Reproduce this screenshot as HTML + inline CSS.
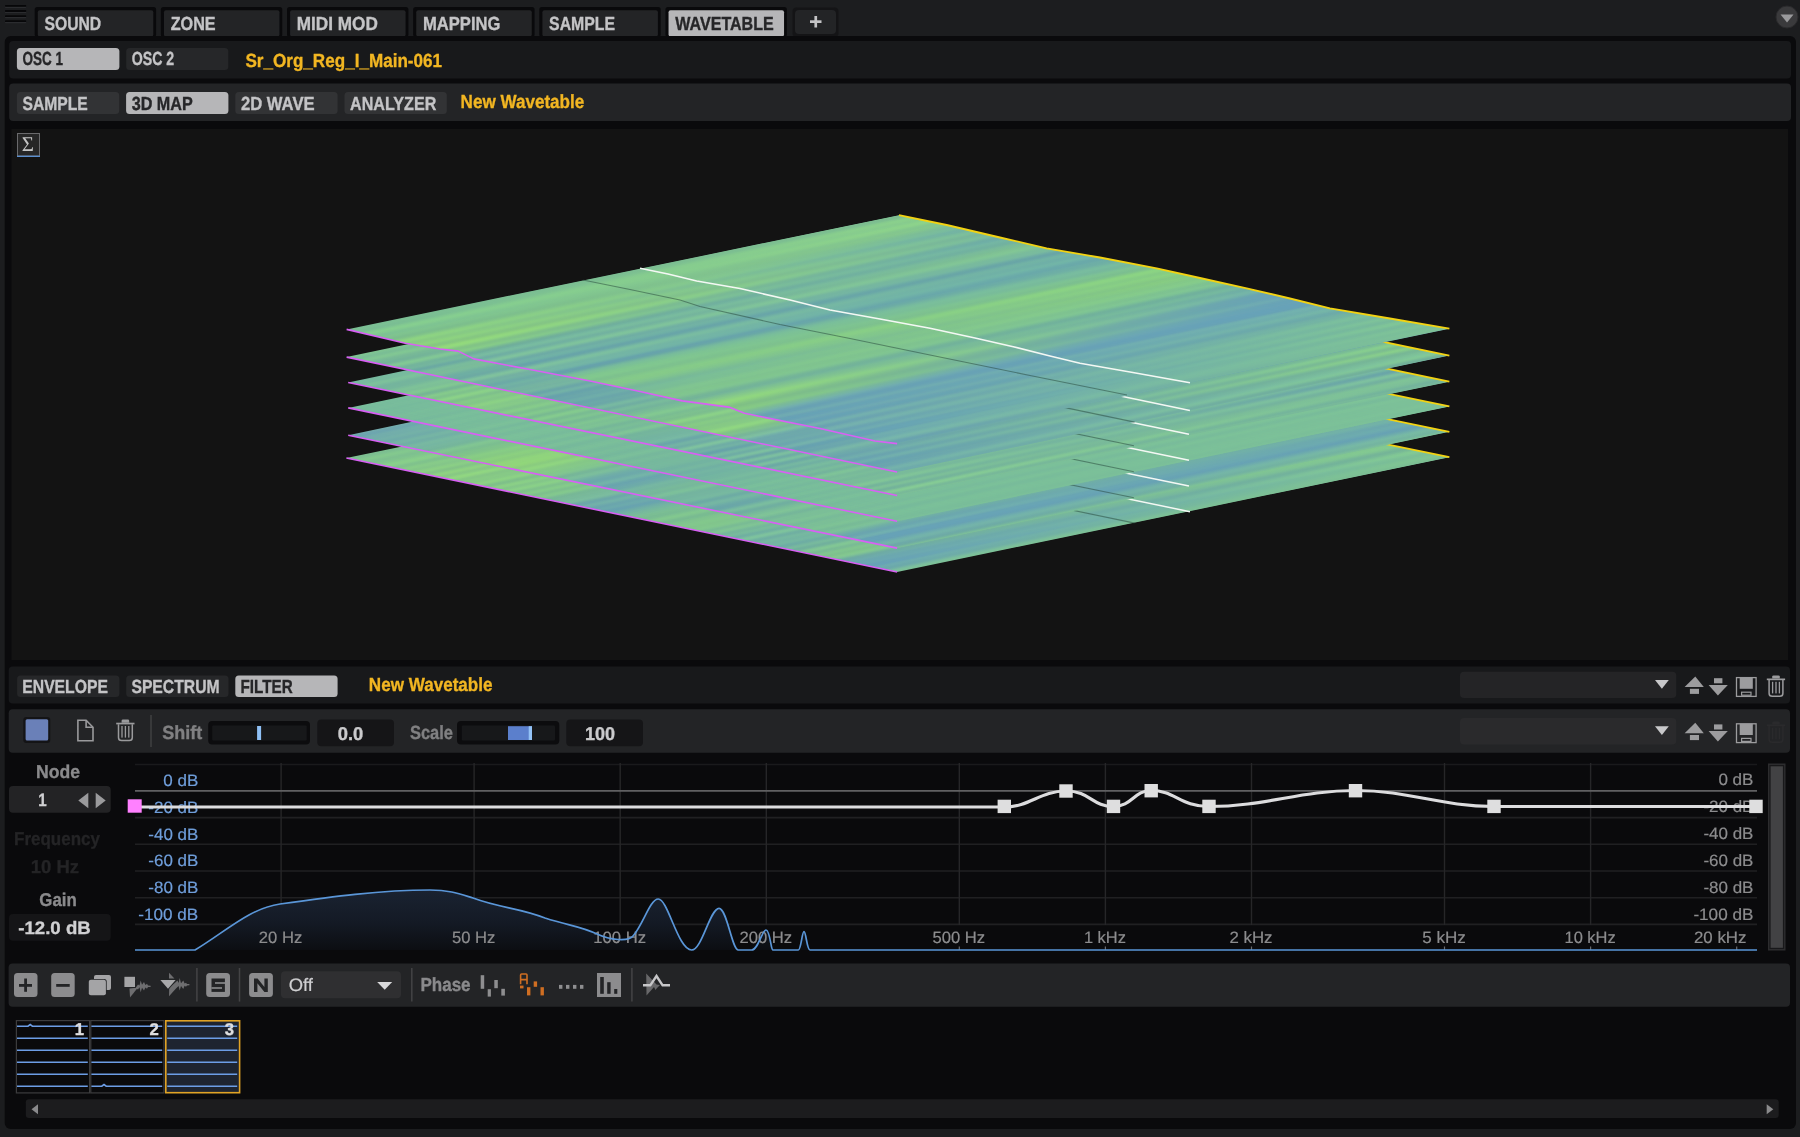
<!DOCTYPE html>
<html><head><meta charset="utf-8"><title>Wavetable</title>
<style>
html,body{margin:0;padding:0;background:#1c1d1f;overflow:hidden}
svg{display:block;font-family:"Liberation Sans",sans-serif;will-change:transform;text-rendering:geometricPrecision}
</style></head>
<body>
<svg width="1800" height="1137" viewBox="0 0 1800 1137">
<rect width="1800" height="1137" fill="#1c1d1f"/>
<rect x="5.00" y="6.50" width="21.20" height="1.50" fill="#2b2c2f" rx="0.7"/>
<rect x="5.00" y="5.00" width="21.20" height="1.80" fill="#070709" rx="0.7"/>
<rect x="5.00" y="11.60" width="21.20" height="1.50" fill="#2b2c2f" rx="0.7"/>
<rect x="5.00" y="10.10" width="21.20" height="1.80" fill="#070709" rx="0.7"/>
<rect x="5.00" y="16.80" width="21.20" height="1.50" fill="#2b2c2f" rx="0.7"/>
<rect x="5.00" y="15.30" width="21.20" height="1.80" fill="#070709" rx="0.7"/>
<rect x="5.00" y="21.80" width="21.20" height="1.50" fill="#2b2c2f" rx="0.7"/>
<rect x="5.00" y="20.30" width="21.20" height="1.80" fill="#070709" rx="0.7"/>
<rect x="34.70" y="7.10" width="121.40" height="29.90" fill="#09090b" rx="2.5"/>
<rect x="37.80" y="10.30" width="115.50" height="26.30" fill="#232426" rx="2"/>
<text x="44.50" y="29.70" font-size="19" font-weight="bold" fill="#c4c4c6" stroke="#c4c4c6" stroke-width="0.35" text-anchor="start" textLength="56.70" lengthAdjust="spacingAndGlyphs" >SOUND</text>
<rect x="160.85" y="7.10" width="121.40" height="29.90" fill="#09090b" rx="2.5"/>
<rect x="163.95" y="10.30" width="115.50" height="26.30" fill="#232426" rx="2"/>
<text x="170.65" y="29.70" font-size="19" font-weight="bold" fill="#c4c4c6" stroke="#c4c4c6" stroke-width="0.35" text-anchor="start" textLength="45.00" lengthAdjust="spacingAndGlyphs" >ZONE</text>
<rect x="287.00" y="7.10" width="121.40" height="29.90" fill="#09090b" rx="2.5"/>
<rect x="290.10" y="10.30" width="115.50" height="26.30" fill="#232426" rx="2"/>
<text x="296.80" y="29.70" font-size="19" font-weight="bold" fill="#c4c4c6" stroke="#c4c4c6" stroke-width="0.35" text-anchor="start" textLength="81.00" lengthAdjust="spacingAndGlyphs" >MIDI MOD</text>
<rect x="413.15" y="7.10" width="121.40" height="29.90" fill="#09090b" rx="2.5"/>
<rect x="416.25" y="10.30" width="115.50" height="26.30" fill="#232426" rx="2"/>
<text x="422.95" y="29.70" font-size="19" font-weight="bold" fill="#c4c4c6" stroke="#c4c4c6" stroke-width="0.35" text-anchor="start" textLength="77.50" lengthAdjust="spacingAndGlyphs" >MAPPING</text>
<rect x="539.30" y="7.10" width="121.40" height="29.90" fill="#09090b" rx="2.5"/>
<rect x="542.40" y="10.30" width="115.50" height="26.30" fill="#232426" rx="2"/>
<text x="549.10" y="29.70" font-size="19" font-weight="bold" fill="#c4c4c6" stroke="#c4c4c6" stroke-width="0.35" text-anchor="start" textLength="66.00" lengthAdjust="spacingAndGlyphs" >SAMPLE</text>
<rect x="665.45" y="7.10" width="121.40" height="29.90" fill="#09090b" rx="2.5"/>
<rect x="668.55" y="10.30" width="115.50" height="26.30" fill="#b6b6b8" rx="2"/>
<text x="675.25" y="29.70" font-size="19" font-weight="bold" fill="#262628" stroke="#262628" stroke-width="0.35" text-anchor="start" textLength="98.50" lengthAdjust="spacingAndGlyphs" >WAVETABLE</text>
<rect x="792.50" y="7.50" width="46.00" height="29.50" fill="#141416" rx="4"/>
<rect x="795.00" y="10.00" width="41.00" height="24.00" fill="#232426" rx="4"/>
<rect x="810.00" y="20.30" width="11.50" height="2.70" fill="#c4c4c6"/>
<rect x="814.40" y="16.00" width="2.70" height="11.50" fill="#c4c4c6"/>
<circle cx="1787" cy="17" r="11" fill="#3a3a3c"/>
<circle cx="1787" cy="17" r="11" fill="none" stroke="#2a2a2c" stroke-width="1"/>
<path d="M1780.5 14.5 h13 l-6.5 8 z" fill="#9a9a9c"/>
<rect x="4.70" y="36.00" width="1791.30" height="1093.00" fill="#0a0a0c" rx="6"/>
<rect x="9.20" y="41.00" width="1781.80" height="37.50" fill="#18191b" rx="4"/>
<rect x="16.90" y="48.00" width="102.50" height="22.00" fill="#b6b6b8" rx="3.5"/>
<text x="22.50" y="65.30" font-size="19" font-weight="bold" fill="#262628" stroke="#262628" stroke-width="0.35" text-anchor="start" textLength="40.50" lengthAdjust="spacingAndGlyphs" >OSC 1</text>
<rect x="126.20" y="48.00" width="102.10" height="22.00" fill="#262729" rx="3.5"/>
<text x="131.70" y="65.30" font-size="19" font-weight="bold" fill="#c4c4c6" stroke="#c4c4c6" stroke-width="0.35" text-anchor="start" textLength="42.50" lengthAdjust="spacingAndGlyphs" >OSC 2</text>
<text x="245.40" y="67.30" font-size="19" font-weight="bold" fill="#f2b622" stroke="#f2b622" stroke-width="0.35" text-anchor="start" textLength="196.70" lengthAdjust="spacingAndGlyphs" >Sr_Org_Reg_I_Main-061</text>
<rect x="9.20" y="83.50" width="1781.80" height="37.50" fill="#232426" rx="4"/>
<rect x="16.90" y="92.00" width="102.30" height="22.00" fill="#323335" rx="3.5"/>
<text x="22.50" y="109.70" font-size="19" font-weight="bold" fill="#c4c4c6" stroke="#c4c4c6" stroke-width="0.35" text-anchor="start" textLength="65.30" lengthAdjust="spacingAndGlyphs" >SAMPLE</text>
<rect x="126.10" y="92.00" width="102.30" height="22.00" fill="#b6b6b8" rx="3.5"/>
<text x="131.70" y="109.70" font-size="19" font-weight="bold" fill="#262628" stroke="#262628" stroke-width="0.35" text-anchor="start" textLength="61.10" lengthAdjust="spacingAndGlyphs" >3D MAP</text>
<rect x="235.30" y="92.00" width="102.30" height="22.00" fill="#323335" rx="3.5"/>
<text x="240.90" y="109.70" font-size="19" font-weight="bold" fill="#c4c4c6" stroke="#c4c4c6" stroke-width="0.35" text-anchor="start" textLength="73.70" lengthAdjust="spacingAndGlyphs" >2D WAVE</text>
<rect x="344.50" y="92.00" width="102.30" height="22.00" fill="#323335" rx="3.5"/>
<text x="350.10" y="109.70" font-size="19" font-weight="bold" fill="#c4c4c6" stroke="#c4c4c6" stroke-width="0.35" text-anchor="start" textLength="86.20" lengthAdjust="spacingAndGlyphs" >ANALYZER</text>
<text x="460.60" y="107.80" font-size="19" font-weight="bold" fill="#f2b622" stroke="#f2b622" stroke-width="0.35" text-anchor="start" textLength="123.70" lengthAdjust="spacingAndGlyphs" >New Wavetable</text>
<rect x="11.50" y="129.00" width="1776.50" height="531.00" fill="#131313"/>
<rect x="17.00" y="133.00" width="23.00" height="24.00" fill="#6a6a6c"/>
<rect x="18.00" y="134.00" width="21.00" height="21.50" fill="#262626"/>
<rect x="17.00" y="155.70" width="23.00" height="1.30" fill="#5b8fd0"/>
<text x="27.9" y="151.2" font-family="Liberation Serif, serif" font-size="21" fill="#c4c4c4" text-anchor="middle">&#931;</text>
<defs><linearGradient id="ga5" gradientUnits="userSpaceOnUse" x1="346.40" y1="458.00" x2="391.33" y2="676.16"><stop offset="0.0" stop-color="#7ec291"/><stop offset="0.0042" stop-color="#7dbf91"/><stop offset="0.0083" stop-color="#7dbf91"/><stop offset="0.0125" stop-color="#7fc290"/><stop offset="0.0167" stop-color="#82c68f"/><stop offset="0.0208" stop-color="#84c98e"/><stop offset="0.025" stop-color="#84ca8e"/><stop offset="0.0292" stop-color="#83c78e"/><stop offset="0.0333" stop-color="#80c48f"/><stop offset="0.0375" stop-color="#7fc18f"/><stop offset="0.0417" stop-color="#7ec18f"/><stop offset="0.0458" stop-color="#7fc28f"/><stop offset="0.05" stop-color="#81c48e"/><stop offset="0.0542" stop-color="#83c68d"/><stop offset="0.0583" stop-color="#85c98c"/><stop offset="0.0625" stop-color="#87cd8c"/><stop offset="0.0667" stop-color="#89d08b"/><stop offset="0.0708" stop-color="#8ad08a"/><stop offset="0.075" stop-color="#88ce8b"/><stop offset="0.0792" stop-color="#84c98c"/><stop offset="0.0833" stop-color="#81c48d"/><stop offset="0.0875" stop-color="#81c38c"/><stop offset="0.0917" stop-color="#82c58b"/><stop offset="0.0958" stop-color="#86c98a"/><stop offset="0.1" stop-color="#88cc89"/><stop offset="0.1042" stop-color="#88cb89"/><stop offset="0.1083" stop-color="#86c989"/><stop offset="0.1125" stop-color="#85c789"/><stop offset="0.1167" stop-color="#86c888"/><stop offset="0.1208" stop-color="#89cc87"/><stop offset="0.125" stop-color="#8bcf85"/><stop offset="0.1292" stop-color="#8cd085"/><stop offset="0.1333" stop-color="#89cc85"/><stop offset="0.1375" stop-color="#86c686"/><stop offset="0.1417" stop-color="#84c486"/><stop offset="0.1458" stop-color="#87c785"/><stop offset="0.15" stop-color="#8bce83"/><stop offset="0.1542" stop-color="#8fd382"/><stop offset="0.1583" stop-color="#90d381"/><stop offset="0.1625" stop-color="#8dcf82"/><stop offset="0.1667" stop-color="#89ca83"/><stop offset="0.1708" stop-color="#88c984"/><stop offset="0.175" stop-color="#8bcd83"/><stop offset="0.1792" stop-color="#8fd482"/><stop offset="0.1833" stop-color="#92d881"/><stop offset="0.1875" stop-color="#91d681"/><stop offset="0.1917" stop-color="#8dd183"/><stop offset="0.1958" stop-color="#88ca84"/><stop offset="0.2" stop-color="#86c785"/><stop offset="0.2042" stop-color="#86c885"/><stop offset="0.2083" stop-color="#88ca85"/><stop offset="0.2125" stop-color="#88cb85"/><stop offset="0.2167" stop-color="#88cb85"/><stop offset="0.2208" stop-color="#87ca86"/><stop offset="0.225" stop-color="#89cc85"/><stop offset="0.2292" stop-color="#8bd085"/><stop offset="0.2333" stop-color="#8dd384"/><stop offset="0.2375" stop-color="#8cd185"/><stop offset="0.2417" stop-color="#87cb86"/><stop offset="0.2458" stop-color="#82c488"/><stop offset="0.25" stop-color="#7fc089"/><stop offset="0.2542" stop-color="#81c289"/><stop offset="0.2583" stop-color="#86c987"/><stop offset="0.2625" stop-color="#8ad086"/><stop offset="0.2667" stop-color="#8bd186"/><stop offset="0.2708" stop-color="#89ce87"/><stop offset="0.275" stop-color="#85c888"/><stop offset="0.2792" stop-color="#84c789"/><stop offset="0.2833" stop-color="#86ca89"/><stop offset="0.2875" stop-color="#89cf88"/><stop offset="0.2917" stop-color="#8bd287"/><stop offset="0.2958" stop-color="#89cf88"/><stop offset="0.3" stop-color="#85c98a"/><stop offset="0.3042" stop-color="#81c38b"/><stop offset="0.3083" stop-color="#80c28b"/><stop offset="0.3125" stop-color="#82c68b"/><stop offset="0.3167" stop-color="#85ca8a"/><stop offset="0.3208" stop-color="#86cc8a"/><stop offset="0.325" stop-color="#84c98b"/><stop offset="0.3292" stop-color="#80c48c"/><stop offset="0.3333" stop-color="#7ec08d"/><stop offset="0.3375" stop-color="#7fc28d"/><stop offset="0.3417" stop-color="#82c68d"/><stop offset="0.3458" stop-color="#84c98d"/><stop offset="0.35" stop-color="#83c88f"/><stop offset="0.3542" stop-color="#80c391"/><stop offset="0.3583" stop-color="#7bbc94"/><stop offset="0.3625" stop-color="#78b896"/><stop offset="0.3667" stop-color="#77b798"/><stop offset="0.3708" stop-color="#78b899"/><stop offset="0.375" stop-color="#79b99a"/><stop offset="0.3792" stop-color="#79b99b"/><stop offset="0.3833" stop-color="#79ba9c"/><stop offset="0.3875" stop-color="#7abb9d"/><stop offset="0.3917" stop-color="#7bbc9e"/><stop offset="0.3958" stop-color="#7cbd9f"/><stop offset="0.4" stop-color="#7abaa1"/><stop offset="0.4042" stop-color="#75b4a3"/><stop offset="0.4083" stop-color="#70aca6"/><stop offset="0.4125" stop-color="#6da7a9"/><stop offset="0.4167" stop-color="#6ca7aa"/><stop offset="0.4208" stop-color="#6faaab"/><stop offset="0.425" stop-color="#72afaa"/><stop offset="0.4292" stop-color="#73b1aa"/><stop offset="0.4333" stop-color="#71aeab"/><stop offset="0.4375" stop-color="#6eaaac"/><stop offset="0.4417" stop-color="#6ba6ad"/><stop offset="0.4458" stop-color="#6aa5ae"/><stop offset="0.45" stop-color="#6ba7ae"/><stop offset="0.4542" stop-color="#6ca9ae"/><stop offset="0.4583" stop-color="#6ca9ae"/><stop offset="0.4625" stop-color="#6ba6af"/><stop offset="0.4667" stop-color="#68a3b0"/><stop offset="0.4708" stop-color="#67a2b1"/><stop offset="0.475" stop-color="#68a4af"/><stop offset="0.4792" stop-color="#6ba7ac"/><stop offset="0.4833" stop-color="#6eaba9"/><stop offset="0.4875" stop-color="#70aea7"/><stop offset="0.4917" stop-color="#72b1a5"/><stop offset="0.4958" stop-color="#73b3a3"/><stop offset="0.5" stop-color="#75b6a0"/><stop offset="0.5042" stop-color="#76b89e"/><stop offset="0.5083" stop-color="#78ba9c"/><stop offset="0.5125" stop-color="#79bc9a"/><stop offset="0.5167" stop-color="#7abe98"/><stop offset="0.5208" stop-color="#7bbe96"/><stop offset="0.525" stop-color="#7bbe94"/><stop offset="0.5292" stop-color="#7abd93"/><stop offset="0.5333" stop-color="#79bb93"/><stop offset="0.5375" stop-color="#79bb93"/><stop offset="0.5417" stop-color="#7bbe92"/><stop offset="0.5458" stop-color="#7ec291"/><stop offset="0.55" stop-color="#81c78f"/><stop offset="0.5542" stop-color="#83c98f"/><stop offset="0.5583" stop-color="#82c78f"/><stop offset="0.5625" stop-color="#7fc390"/><stop offset="0.5667" stop-color="#7bbe91"/><stop offset="0.5708" stop-color="#79bb91"/><stop offset="0.575" stop-color="#79bb91"/><stop offset="0.5792" stop-color="#7bbe90"/><stop offset="0.5833" stop-color="#7ec18f"/><stop offset="0.5875" stop-color="#80c48e"/><stop offset="0.5917" stop-color="#81c58e"/><stop offset="0.5958" stop-color="#82c68d"/><stop offset="0.6" stop-color="#83c88d"/><stop offset="0.6042" stop-color="#83c88c"/><stop offset="0.6083" stop-color="#83c88c"/><stop offset="0.6125" stop-color="#82c78c"/><stop offset="0.6167" stop-color="#82c58c"/><stop offset="0.6208" stop-color="#82c68c"/><stop offset="0.625" stop-color="#82c78d"/><stop offset="0.6292" stop-color="#83c88d"/><stop offset="0.6333" stop-color="#83c88e"/><stop offset="0.6375" stop-color="#81c590"/><stop offset="0.6417" stop-color="#7dc092"/><stop offset="0.6458" stop-color="#7abc94"/><stop offset="0.65" stop-color="#7abc95"/><stop offset="0.6542" stop-color="#7dc095"/><stop offset="0.6583" stop-color="#80c494"/><stop offset="0.6625" stop-color="#80c595"/><stop offset="0.6667" stop-color="#7ec197"/><stop offset="0.6708" stop-color="#79bb99"/><stop offset="0.675" stop-color="#76b79b"/><stop offset="0.6792" stop-color="#75b69c"/><stop offset="0.6833" stop-color="#77b99c"/><stop offset="0.6875" stop-color="#78bb9d"/><stop offset="0.6917" stop-color="#77b99e"/><stop offset="0.6958" stop-color="#73b4a0"/><stop offset="0.7" stop-color="#70b0a2"/><stop offset="0.7042" stop-color="#71b1a2"/><stop offset="0.7083" stop-color="#75b7a1"/><stop offset="0.7125" stop-color="#7bbf9f"/><stop offset="0.7167" stop-color="#7ec39e"/><stop offset="0.7208" stop-color="#7cc19f"/><stop offset="0.725" stop-color="#77baa0"/><stop offset="0.7292" stop-color="#72b2a2"/><stop offset="0.7333" stop-color="#6fafa3"/><stop offset="0.7375" stop-color="#71b0a3"/><stop offset="0.7417" stop-color="#74b5a2"/><stop offset="0.7458" stop-color="#76b8a2"/><stop offset="0.75" stop-color="#76b7a2"/><stop offset="0.7542" stop-color="#74b5a2"/><stop offset="0.7583" stop-color="#73b4a3"/><stop offset="0.7625" stop-color="#74b5a3"/><stop offset="0.7667" stop-color="#75b6a3"/><stop offset="0.7708" stop-color="#75b6a3"/><stop offset="0.775" stop-color="#72b3a4"/><stop offset="0.7792" stop-color="#6faea5"/><stop offset="0.7833" stop-color="#6eaca5"/><stop offset="0.7875" stop-color="#70afa3"/><stop offset="0.7917" stop-color="#74b4a1"/><stop offset="0.7958" stop-color="#77b99f"/><stop offset="0.8" stop-color="#77b99e"/><stop offset="0.8042" stop-color="#74b49e"/><stop offset="0.8083" stop-color="#71b09e"/><stop offset="0.8125" stop-color="#72b19d"/><stop offset="0.8167" stop-color="#76b79b"/><stop offset="0.8208" stop-color="#7dc098"/><stop offset="0.825" stop-color="#81c696"/><stop offset="0.8292" stop-color="#82c795"/><stop offset="0.8333" stop-color="#7ec295"/><stop offset="0.8375" stop-color="#7bbc95"/><stop offset="0.8417" stop-color="#7abb95"/><stop offset="0.8458" stop-color="#7cbe93"/><stop offset="0.85" stop-color="#80c391"/><stop offset="0.8542" stop-color="#82c68f"/><stop offset="0.8583" stop-color="#81c58f"/><stop offset="0.8625" stop-color="#7fc28f"/><stop offset="0.8667" stop-color="#7ec18e"/><stop offset="0.8708" stop-color="#80c48d"/><stop offset="0.875" stop-color="#82c78f"/><stop offset="0.8792" stop-color="#84c891"/><stop offset="0.8833" stop-color="#81c595"/><stop offset="0.8875" stop-color="#7bbd99"/><stop offset="0.8917" stop-color="#74b39e"/><stop offset="0.8958" stop-color="#6faba3"/><stop offset="0.9" stop-color="#6da9a6"/><stop offset="0.9042" stop-color="#6da9a9"/><stop offset="0.9083" stop-color="#6eabab"/><stop offset="0.9125" stop-color="#6eaaae"/><stop offset="0.9167" stop-color="#6ca8b0"/><stop offset="0.9208" stop-color="#6ba7b1"/><stop offset="0.925" stop-color="#6ba7b2"/><stop offset="0.9292" stop-color="#6ba7b3"/><stop offset="0.9333" stop-color="#6ba7b4"/><stop offset="0.9375" stop-color="#69a4b5"/><stop offset="0.9417" stop-color="#67a2b6"/><stop offset="0.9458" stop-color="#67a2b7"/><stop offset="0.95" stop-color="#67a2b8"/><stop offset="0.9542" stop-color="#69a5b5"/><stop offset="0.9583" stop-color="#6daab2"/><stop offset="0.9625" stop-color="#6eacb0"/><stop offset="0.9667" stop-color="#6daaae"/><stop offset="0.9708" stop-color="#6ca9ad"/><stop offset="0.975" stop-color="#6ca9ab"/><stop offset="0.9792" stop-color="#70aea8"/><stop offset="0.9833" stop-color="#75b5a4"/><stop offset="0.9875" stop-color="#7abda0"/><stop offset="0.9917" stop-color="#7dc19c"/><stop offset="0.9958" stop-color="#7dc199"/><stop offset="1.0" stop-color="#7bbf96"/></linearGradient><linearGradient id="gb5" gradientUnits="userSpaceOnUse" x1="346.40" y1="458.00" x2="391.33" y2="676.16"><stop offset="0.0" stop-color="#7dc194"/><stop offset="0.0042" stop-color="#7cbf94"/><stop offset="0.0083" stop-color="#7abd95"/><stop offset="0.0125" stop-color="#79bb95"/><stop offset="0.0167" stop-color="#78ba95"/><stop offset="0.0208" stop-color="#78bb95"/><stop offset="0.025" stop-color="#79bc95"/><stop offset="0.0292" stop-color="#7bbf94"/><stop offset="0.0333" stop-color="#7dc194"/><stop offset="0.0375" stop-color="#7ec394"/><stop offset="0.0417" stop-color="#7fc493"/><stop offset="0.0458" stop-color="#7fc493"/><stop offset="0.05" stop-color="#7fc493"/><stop offset="0.0542" stop-color="#7fc593"/><stop offset="0.0583" stop-color="#7fc493"/><stop offset="0.0625" stop-color="#7fc494"/><stop offset="0.0667" stop-color="#7dc294"/><stop offset="0.0708" stop-color="#7bbf95"/><stop offset="0.075" stop-color="#79bb96"/><stop offset="0.0792" stop-color="#77b896"/><stop offset="0.0833" stop-color="#76b797"/><stop offset="0.0875" stop-color="#76b896"/><stop offset="0.0917" stop-color="#78ba96"/><stop offset="0.0958" stop-color="#7bbe95"/><stop offset="0.1" stop-color="#7ec294"/><stop offset="0.1042" stop-color="#7fc594"/><stop offset="0.1083" stop-color="#80c593"/><stop offset="0.1125" stop-color="#7fc494"/><stop offset="0.1167" stop-color="#7dc195"/><stop offset="0.1208" stop-color="#7bbe95"/><stop offset="0.125" stop-color="#7abc96"/><stop offset="0.1292" stop-color="#79bc96"/><stop offset="0.1333" stop-color="#7abd96"/><stop offset="0.1375" stop-color="#7bbf95"/><stop offset="0.1417" stop-color="#7cc095"/><stop offset="0.1458" stop-color="#7dc095"/><stop offset="0.15" stop-color="#7cc095"/><stop offset="0.1542" stop-color="#7cbf95"/><stop offset="0.1583" stop-color="#7bbe95"/><stop offset="0.1625" stop-color="#7bbe95"/><stop offset="0.1667" stop-color="#7cbf95"/><stop offset="0.1708" stop-color="#7dc095"/><stop offset="0.175" stop-color="#7ec295"/><stop offset="0.1792" stop-color="#7ec295"/><stop offset="0.1833" stop-color="#7dc295"/><stop offset="0.1875" stop-color="#7cbf95"/><stop offset="0.1917" stop-color="#7abd96"/><stop offset="0.1958" stop-color="#78ba97"/><stop offset="0.2" stop-color="#76b797"/><stop offset="0.2042" stop-color="#76b797"/><stop offset="0.2083" stop-color="#76b897"/><stop offset="0.2125" stop-color="#78ba97"/><stop offset="0.2167" stop-color="#7abd96"/><stop offset="0.2208" stop-color="#7dc095"/><stop offset="0.225" stop-color="#7fc495"/><stop offset="0.2292" stop-color="#80c694"/><stop offset="0.2333" stop-color="#81c794"/><stop offset="0.2375" stop-color="#81c694"/><stop offset="0.2417" stop-color="#7fc494"/><stop offset="0.2458" stop-color="#7dc195"/><stop offset="0.25" stop-color="#7bbe96"/><stop offset="0.2542" stop-color="#78ba97"/><stop offset="0.2583" stop-color="#77b897"/><stop offset="0.2625" stop-color="#76b798"/><stop offset="0.2667" stop-color="#76b798"/><stop offset="0.2708" stop-color="#78b997"/><stop offset="0.275" stop-color="#79bb97"/><stop offset="0.2792" stop-color="#7bbe96"/><stop offset="0.2833" stop-color="#7cbf96"/><stop offset="0.2875" stop-color="#7cbf96"/><stop offset="0.2917" stop-color="#7cbf96"/><stop offset="0.2958" stop-color="#7cbf96"/><stop offset="0.3" stop-color="#7bbf96"/><stop offset="0.3042" stop-color="#7cbf96"/><stop offset="0.3083" stop-color="#7cc096"/><stop offset="0.3125" stop-color="#7dc096"/><stop offset="0.3167" stop-color="#7dc096"/><stop offset="0.3208" stop-color="#7cbf96"/><stop offset="0.325" stop-color="#7abd97"/><stop offset="0.3292" stop-color="#79bb97"/><stop offset="0.3333" stop-color="#78ba97"/><stop offset="0.3375" stop-color="#78ba98"/><stop offset="0.3417" stop-color="#79bb97"/><stop offset="0.3458" stop-color="#7bbd97"/><stop offset="0.35" stop-color="#7cc096"/><stop offset="0.3542" stop-color="#7ec196"/><stop offset="0.3583" stop-color="#7ec296"/><stop offset="0.3625" stop-color="#7dc196"/><stop offset="0.3667" stop-color="#7cbf96"/><stop offset="0.3708" stop-color="#7abc97"/><stop offset="0.375" stop-color="#78ba98"/><stop offset="0.3792" stop-color="#77b898"/><stop offset="0.3833" stop-color="#77b798"/><stop offset="0.3875" stop-color="#77b798"/><stop offset="0.3917" stop-color="#77b898"/><stop offset="0.3958" stop-color="#78ba98"/><stop offset="0.4" stop-color="#7abc97"/><stop offset="0.4042" stop-color="#7bbe97"/><stop offset="0.4083" stop-color="#7dc096"/><stop offset="0.4125" stop-color="#7ec296"/><stop offset="0.4167" stop-color="#7fc496"/><stop offset="0.4208" stop-color="#7fc496"/><stop offset="0.425" stop-color="#7ec296"/><stop offset="0.4292" stop-color="#7cbf97"/><stop offset="0.4333" stop-color="#7abc98"/><stop offset="0.4375" stop-color="#78b998"/><stop offset="0.4417" stop-color="#77b899"/><stop offset="0.4458" stop-color="#77b899"/><stop offset="0.45" stop-color="#78b998"/><stop offset="0.4542" stop-color="#79bb98"/><stop offset="0.4583" stop-color="#7abc98"/><stop offset="0.4625" stop-color="#7abc98"/><stop offset="0.4667" stop-color="#79bb98"/><stop offset="0.4708" stop-color="#78b998"/><stop offset="0.475" stop-color="#77b899"/><stop offset="0.4792" stop-color="#78b999"/><stop offset="0.4833" stop-color="#79bb98"/><stop offset="0.4875" stop-color="#7cbe97"/><stop offset="0.4917" stop-color="#7ec197"/><stop offset="0.4958" stop-color="#7fc396"/><stop offset="0.5" stop-color="#7ec297"/><stop offset="0.5042" stop-color="#7cbf97"/><stop offset="0.5083" stop-color="#7abc98"/><stop offset="0.5125" stop-color="#77b899"/><stop offset="0.5167" stop-color="#77b799"/><stop offset="0.5208" stop-color="#77b899"/><stop offset="0.525" stop-color="#79bb98"/><stop offset="0.5292" stop-color="#7cbf97"/><stop offset="0.5333" stop-color="#7ec296"/><stop offset="0.5375" stop-color="#7ec296"/><stop offset="0.5417" stop-color="#7dc196"/><stop offset="0.5458" stop-color="#7bbd97"/><stop offset="0.55" stop-color="#79ba98"/><stop offset="0.5542" stop-color="#77b898"/><stop offset="0.5583" stop-color="#77b798"/><stop offset="0.5625" stop-color="#78b998"/><stop offset="0.5667" stop-color="#7abc97"/><stop offset="0.5708" stop-color="#7cbe96"/><stop offset="0.575" stop-color="#7dc096"/><stop offset="0.5792" stop-color="#7dc096"/><stop offset="0.5833" stop-color="#7cbf96"/><stop offset="0.5875" stop-color="#7bbe96"/><stop offset="0.5917" stop-color="#7bbe96"/><stop offset="0.5958" stop-color="#7cbf96"/><stop offset="0.6" stop-color="#7dc095"/><stop offset="0.6042" stop-color="#7ec195"/><stop offset="0.6083" stop-color="#7ec295"/><stop offset="0.6125" stop-color="#7dc195"/><stop offset="0.6167" stop-color="#7cbf95"/><stop offset="0.6208" stop-color="#7bbd96"/><stop offset="0.625" stop-color="#7abc96"/><stop offset="0.6292" stop-color="#7bbd96"/><stop offset="0.6333" stop-color="#7cbe95"/><stop offset="0.6375" stop-color="#7dc095"/><stop offset="0.6417" stop-color="#7dc195"/><stop offset="0.6458" stop-color="#7dc095"/><stop offset="0.65" stop-color="#7cbe95"/><stop offset="0.6542" stop-color="#7abc96"/><stop offset="0.6583" stop-color="#79ba96"/><stop offset="0.6625" stop-color="#79ba96"/><stop offset="0.6667" stop-color="#7abc95"/><stop offset="0.6708" stop-color="#7dc094"/><stop offset="0.675" stop-color="#7fc393"/><stop offset="0.6792" stop-color="#81c693"/><stop offset="0.6833" stop-color="#81c693"/><stop offset="0.6875" stop-color="#7fc393"/><stop offset="0.6917" stop-color="#7dc094"/><stop offset="0.6958" stop-color="#7bbe94"/><stop offset="0.7" stop-color="#7bbd94"/><stop offset="0.7042" stop-color="#7cbf94"/><stop offset="0.7083" stop-color="#7fc393"/><stop offset="0.7125" stop-color="#81c692"/><stop offset="0.7167" stop-color="#82c792"/><stop offset="0.7208" stop-color="#81c592"/><stop offset="0.725" stop-color="#7ec193"/><stop offset="0.7292" stop-color="#7abc94"/><stop offset="0.7333" stop-color="#77b895"/><stop offset="0.7375" stop-color="#76b696"/><stop offset="0.7417" stop-color="#78b895"/><stop offset="0.7458" stop-color="#7bbd94"/><stop offset="0.75" stop-color="#7fc392"/><stop offset="0.7542" stop-color="#82c891"/><stop offset="0.7583" stop-color="#84ca91"/><stop offset="0.7625" stop-color="#83c891"/><stop offset="0.7667" stop-color="#81c592"/><stop offset="0.7708" stop-color="#7ec292"/><stop offset="0.775" stop-color="#7dbf93"/><stop offset="0.7792" stop-color="#7cbf93"/><stop offset="0.7833" stop-color="#7dc192"/><stop offset="0.7875" stop-color="#7fc392"/><stop offset="0.7917" stop-color="#80c591"/><stop offset="0.7958" stop-color="#80c591"/><stop offset="0.8" stop-color="#7fc391"/><stop offset="0.8042" stop-color="#7ec192"/><stop offset="0.8083" stop-color="#7dc092"/><stop offset="0.8125" stop-color="#7dc092"/><stop offset="0.8167" stop-color="#7ec192"/><stop offset="0.8208" stop-color="#80c391"/><stop offset="0.825" stop-color="#81c690"/><stop offset="0.8292" stop-color="#82c790"/><stop offset="0.8333" stop-color="#81c590"/><stop offset="0.8375" stop-color="#7fc391"/><stop offset="0.8417" stop-color="#7dc092"/><stop offset="0.8458" stop-color="#7cbe92"/><stop offset="0.85" stop-color="#7cbe92"/><stop offset="0.8542" stop-color="#7dc091"/><stop offset="0.8583" stop-color="#7fc291"/><stop offset="0.8625" stop-color="#81c590"/><stop offset="0.8667" stop-color="#81c690"/><stop offset="0.8708" stop-color="#82c690"/><stop offset="0.875" stop-color="#81c590"/><stop offset="0.8792" stop-color="#81c590"/><stop offset="0.8833" stop-color="#81c590"/><stop offset="0.8875" stop-color="#82c790"/><stop offset="0.8917" stop-color="#83c990"/><stop offset="0.8958" stop-color="#84ca90"/><stop offset="0.9" stop-color="#83c990"/><stop offset="0.9042" stop-color="#81c691"/><stop offset="0.9083" stop-color="#7dc093"/><stop offset="0.9125" stop-color="#79ba95"/><stop offset="0.9167" stop-color="#76b696"/><stop offset="0.9208" stop-color="#75b596"/><stop offset="0.925" stop-color="#77b896"/><stop offset="0.9292" stop-color="#7abd95"/><stop offset="0.9333" stop-color="#7fc394"/><stop offset="0.9375" stop-color="#82c893"/><stop offset="0.9417" stop-color="#83ca93"/><stop offset="0.9458" stop-color="#82c894"/><stop offset="0.95" stop-color="#7fc495"/><stop offset="0.9542" stop-color="#7dc195"/><stop offset="0.9583" stop-color="#7bbf95"/><stop offset="0.9625" stop-color="#7bbf95"/><stop offset="0.9667" stop-color="#7dc194"/><stop offset="0.9708" stop-color="#7fc393"/><stop offset="0.975" stop-color="#80c592"/><stop offset="0.9792" stop-color="#80c592"/><stop offset="0.9833" stop-color="#7fc392"/><stop offset="0.9875" stop-color="#7dc092"/><stop offset="0.9917" stop-color="#7cbe92"/><stop offset="0.9958" stop-color="#7cbe92"/><stop offset="1.0" stop-color="#7dc091"/></linearGradient><linearGradient id="gm5" gradientUnits="userSpaceOnUse" x1="346.40" y1="458.00" x2="391.70" y2="239.18"><stop offset="0" stop-color="#fff" stop-opacity="0"/><stop offset="1" stop-color="#fff" stop-opacity="1"/></linearGradient><mask id="mk5" maskUnits="userSpaceOnUse" x="300" y="200" width="1200" height="400"><polygon points="346.4,458.0 899.0,344.2 1449.4,457.2 897.1,572.0" fill="url(#gm5)"/></mask><linearGradient id="ga4" gradientUnits="userSpaceOnUse" x1="348.20" y1="435.30" x2="394.77" y2="654.71"><stop offset="0.0" stop-color="#73acaf"/><stop offset="0.0042" stop-color="#71a9af"/><stop offset="0.0083" stop-color="#6ea6b0"/><stop offset="0.0125" stop-color="#6da5b0"/><stop offset="0.0167" stop-color="#6ea6af"/><stop offset="0.0208" stop-color="#70aaae"/><stop offset="0.025" stop-color="#72acad"/><stop offset="0.0292" stop-color="#72adac"/><stop offset="0.0333" stop-color="#72adac"/><stop offset="0.0375" stop-color="#72adab"/><stop offset="0.0417" stop-color="#73aeab"/><stop offset="0.0458" stop-color="#74b0aa"/><stop offset="0.05" stop-color="#74b0a9"/><stop offset="0.0542" stop-color="#72afa9"/><stop offset="0.0583" stop-color="#71acaa"/><stop offset="0.0625" stop-color="#70aca9"/><stop offset="0.0667" stop-color="#71ada9"/><stop offset="0.0708" stop-color="#74b1a7"/><stop offset="0.075" stop-color="#75b4a6"/><stop offset="0.0792" stop-color="#76b4a6"/><stop offset="0.0833" stop-color="#74b2a6"/><stop offset="0.0875" stop-color="#72afa6"/><stop offset="0.0917" stop-color="#72afa6"/><stop offset="0.0958" stop-color="#73b1a5"/><stop offset="0.1" stop-color="#76b5a4"/><stop offset="0.1042" stop-color="#78b8a3"/><stop offset="0.1083" stop-color="#78b8a2"/><stop offset="0.1125" stop-color="#77b7a2"/><stop offset="0.1167" stop-color="#76b6a2"/><stop offset="0.1208" stop-color="#76b6a2"/><stop offset="0.125" stop-color="#77b7a0"/><stop offset="0.1292" stop-color="#77b79f"/><stop offset="0.1333" stop-color="#76b69e"/><stop offset="0.1375" stop-color="#75b59d"/><stop offset="0.1417" stop-color="#76b69b"/><stop offset="0.1458" stop-color="#79ba99"/><stop offset="0.15" stop-color="#7dc096"/><stop offset="0.1542" stop-color="#81c594"/><stop offset="0.1583" stop-color="#82c692"/><stop offset="0.1625" stop-color="#80c491"/><stop offset="0.1667" stop-color="#7ec191"/><stop offset="0.1708" stop-color="#7cbf90"/><stop offset="0.175" stop-color="#7dbf8f"/><stop offset="0.1792" stop-color="#7ec18d"/><stop offset="0.1833" stop-color="#7fc38c"/><stop offset="0.1875" stop-color="#80c38b"/><stop offset="0.1917" stop-color="#81c48a"/><stop offset="0.1958" stop-color="#82c689"/><stop offset="0.2" stop-color="#85c987"/><stop offset="0.2042" stop-color="#87cc86"/><stop offset="0.2083" stop-color="#89ce84"/><stop offset="0.2125" stop-color="#88cd84"/><stop offset="0.2167" stop-color="#87cb84"/><stop offset="0.2208" stop-color="#87ca83"/><stop offset="0.225" stop-color="#88cb82"/><stop offset="0.2292" stop-color="#8acf80"/><stop offset="0.2333" stop-color="#8cd17f"/><stop offset="0.2375" stop-color="#8dd17e"/><stop offset="0.2417" stop-color="#8bcf7e"/><stop offset="0.2458" stop-color="#8acd7f"/><stop offset="0.25" stop-color="#8acc7e"/><stop offset="0.2542" stop-color="#8ccf7e"/><stop offset="0.2583" stop-color="#8fd37c"/><stop offset="0.2625" stop-color="#91d67b"/><stop offset="0.2667" stop-color="#92d77b"/><stop offset="0.2708" stop-color="#92d67b"/><stop offset="0.275" stop-color="#92d67b"/><stop offset="0.2792" stop-color="#92d77a"/><stop offset="0.2833" stop-color="#92d77a"/><stop offset="0.2875" stop-color="#92d67a"/><stop offset="0.2917" stop-color="#90d37b"/><stop offset="0.2958" stop-color="#8dcf7d"/><stop offset="0.3" stop-color="#8bcd7e"/><stop offset="0.3042" stop-color="#8ccf7f"/><stop offset="0.3083" stop-color="#8fd37f"/><stop offset="0.3125" stop-color="#91d67f"/><stop offset="0.3167" stop-color="#90d680"/><stop offset="0.3208" stop-color="#8dd281"/><stop offset="0.325" stop-color="#8acd83"/><stop offset="0.3292" stop-color="#87ca85"/><stop offset="0.3333" stop-color="#86c986"/><stop offset="0.3375" stop-color="#86c987"/><stop offset="0.3417" stop-color="#86ca88"/><stop offset="0.3458" stop-color="#85c989"/><stop offset="0.35" stop-color="#84c88a"/><stop offset="0.3542" stop-color="#83c78c"/><stop offset="0.3583" stop-color="#83c78d"/><stop offset="0.3625" stop-color="#83c78f"/><stop offset="0.3667" stop-color="#81c491"/><stop offset="0.3708" stop-color="#7dbf94"/><stop offset="0.375" stop-color="#79b997"/><stop offset="0.3792" stop-color="#77b699"/><stop offset="0.3833" stop-color="#77b79a"/><stop offset="0.3875" stop-color="#7abb9b"/><stop offset="0.3917" stop-color="#7cbe9c"/><stop offset="0.3958" stop-color="#7cbe9d"/><stop offset="0.4" stop-color="#7abb9f"/><stop offset="0.4042" stop-color="#76b6a2"/><stop offset="0.4083" stop-color="#73b2a5"/><stop offset="0.4125" stop-color="#70aea7"/><stop offset="0.4167" stop-color="#6faca9"/><stop offset="0.4208" stop-color="#6daaab"/><stop offset="0.425" stop-color="#6ca8ac"/><stop offset="0.4292" stop-color="#6ca8ac"/><stop offset="0.4333" stop-color="#6daaac"/><stop offset="0.4375" stop-color="#70aeab"/><stop offset="0.4417" stop-color="#73b2aa"/><stop offset="0.4458" stop-color="#74b3aa"/><stop offset="0.45" stop-color="#72b1ab"/><stop offset="0.4542" stop-color="#6eabac"/><stop offset="0.4583" stop-color="#6ba7ae"/><stop offset="0.4625" stop-color="#69a4ae"/><stop offset="0.4667" stop-color="#6aa5af"/><stop offset="0.4708" stop-color="#6ba6ae"/><stop offset="0.475" stop-color="#6ca8ad"/><stop offset="0.4792" stop-color="#6da9ab"/><stop offset="0.4833" stop-color="#6daaaa"/><stop offset="0.4875" stop-color="#6fada8"/><stop offset="0.4917" stop-color="#72b1a6"/><stop offset="0.4958" stop-color="#75b5a4"/><stop offset="0.5" stop-color="#77b7a3"/><stop offset="0.5042" stop-color="#76b7a2"/><stop offset="0.5083" stop-color="#75b5a1"/><stop offset="0.5125" stop-color="#75b5a0"/><stop offset="0.5167" stop-color="#76b69f"/><stop offset="0.5208" stop-color="#77b89d"/><stop offset="0.525" stop-color="#78b99c"/><stop offset="0.5292" stop-color="#78b99b"/><stop offset="0.5333" stop-color="#77b79b"/><stop offset="0.5375" stop-color="#77b79c"/><stop offset="0.5417" stop-color="#78ba9c"/><stop offset="0.5458" stop-color="#7bbe9b"/><stop offset="0.55" stop-color="#7dc09b"/><stop offset="0.5542" stop-color="#7cc09b"/><stop offset="0.5583" stop-color="#7abc9d"/><stop offset="0.5625" stop-color="#76b79e"/><stop offset="0.5667" stop-color="#74b49f"/><stop offset="0.5708" stop-color="#74b3a0"/><stop offset="0.575" stop-color="#74b4a0"/><stop offset="0.5792" stop-color="#75b5a0"/><stop offset="0.5833" stop-color="#75b5a0"/><stop offset="0.5875" stop-color="#75b5a1"/><stop offset="0.5917" stop-color="#76b7a1"/><stop offset="0.5958" stop-color="#77b8a1"/><stop offset="0.6" stop-color="#77b9a1"/><stop offset="0.6042" stop-color="#76b7a2"/><stop offset="0.6083" stop-color="#72b2a3"/><stop offset="0.6125" stop-color="#6fada5"/><stop offset="0.6167" stop-color="#6daaa5"/><stop offset="0.6208" stop-color="#6eaca5"/><stop offset="0.625" stop-color="#71b1a5"/><stop offset="0.6292" stop-color="#75b5a4"/><stop offset="0.6333" stop-color="#76b7a4"/><stop offset="0.6375" stop-color="#75b5a4"/><stop offset="0.6417" stop-color="#72b2a5"/><stop offset="0.6458" stop-color="#6faea7"/><stop offset="0.65" stop-color="#6daaa8"/><stop offset="0.6542" stop-color="#6ba8a8"/><stop offset="0.6583" stop-color="#6aa6a9"/><stop offset="0.6625" stop-color="#6aa6a9"/><stop offset="0.6667" stop-color="#6ba8a8"/><stop offset="0.6708" stop-color="#6faea6"/><stop offset="0.675" stop-color="#74b5a3"/><stop offset="0.6792" stop-color="#79bba1"/><stop offset="0.6833" stop-color="#7bbea0"/><stop offset="0.6875" stop-color="#79bba0"/><stop offset="0.6917" stop-color="#75b5a0"/><stop offset="0.6958" stop-color="#71b0a1"/><stop offset="0.7" stop-color="#70aea1"/><stop offset="0.7042" stop-color="#71b0a0"/><stop offset="0.7083" stop-color="#74b49e"/><stop offset="0.7125" stop-color="#77b79c"/><stop offset="0.7167" stop-color="#79bb9b"/><stop offset="0.7208" stop-color="#7bbe9a"/><stop offset="0.725" stop-color="#7dc199"/><stop offset="0.7292" stop-color="#7fc398"/><stop offset="0.7333" stop-color="#80c498"/><stop offset="0.7375" stop-color="#7ec198"/><stop offset="0.7417" stop-color="#7abd99"/><stop offset="0.7458" stop-color="#77b89a"/><stop offset="0.75" stop-color="#75b69b"/><stop offset="0.7542" stop-color="#77b79a"/><stop offset="0.7583" stop-color="#79bb99"/><stop offset="0.7625" stop-color="#7bbe99"/><stop offset="0.7667" stop-color="#7bbe98"/><stop offset="0.7708" stop-color="#7bbe98"/><stop offset="0.775" stop-color="#7bbe98"/><stop offset="0.7792" stop-color="#7cbf98"/><stop offset="0.7833" stop-color="#7ec297"/><stop offset="0.7875" stop-color="#7ec397"/><stop offset="0.7917" stop-color="#7dc197"/><stop offset="0.7958" stop-color="#7bbe98"/><stop offset="0.8" stop-color="#79bb99"/><stop offset="0.8042" stop-color="#78ba99"/><stop offset="0.8083" stop-color="#79bc98"/><stop offset="0.8125" stop-color="#7bbe98"/><stop offset="0.8167" stop-color="#7cbf97"/><stop offset="0.8208" stop-color="#7cbf97"/><stop offset="0.825" stop-color="#7bbf97"/><stop offset="0.8292" stop-color="#7cc097"/><stop offset="0.8333" stop-color="#7dc296"/><stop offset="0.8375" stop-color="#7ec396"/><stop offset="0.8417" stop-color="#7ec296"/><stop offset="0.8458" stop-color="#7bbf97"/><stop offset="0.85" stop-color="#79bb97"/><stop offset="0.8542" stop-color="#78ba98"/><stop offset="0.8583" stop-color="#79bc97"/><stop offset="0.8625" stop-color="#7bbf97"/><stop offset="0.8667" stop-color="#7dc199"/><stop offset="0.8708" stop-color="#7cc09b"/><stop offset="0.875" stop-color="#7abc9e"/><stop offset="0.8792" stop-color="#76b7a1"/><stop offset="0.8833" stop-color="#73b2a4"/><stop offset="0.8875" stop-color="#70aea7"/><stop offset="0.8917" stop-color="#6eabaa"/><stop offset="0.8958" stop-color="#6ca8ad"/><stop offset="0.9" stop-color="#6ba5af"/><stop offset="0.9042" stop-color="#6ba5b0"/><stop offset="0.9083" stop-color="#6ca8b0"/><stop offset="0.9125" stop-color="#6fadb0"/><stop offset="0.9167" stop-color="#72b0b0"/><stop offset="0.9208" stop-color="#71afb1"/><stop offset="0.925" stop-color="#6da9b3"/><stop offset="0.9292" stop-color="#67a2b6"/><stop offset="0.9333" stop-color="#67a2b8"/><stop offset="0.9375" stop-color="#67a2b8"/><stop offset="0.9417" stop-color="#67a2b8"/><stop offset="0.9458" stop-color="#67a2b7"/><stop offset="0.95" stop-color="#69a3b4"/><stop offset="0.9542" stop-color="#6ca8b2"/><stop offset="0.9583" stop-color="#6fadaf"/><stop offset="0.9625" stop-color="#72b1ad"/><stop offset="0.9667" stop-color="#74b3ab"/><stop offset="0.9708" stop-color="#74b3aa"/><stop offset="0.975" stop-color="#72b0a9"/><stop offset="0.9792" stop-color="#6faba9"/><stop offset="0.9833" stop-color="#6da9a8"/><stop offset="0.9875" stop-color="#6eaaa5"/><stop offset="0.9917" stop-color="#72b0a1"/><stop offset="0.9958" stop-color="#78b99d"/><stop offset="1.0" stop-color="#7dc099"/></linearGradient><linearGradient id="gb4" gradientUnits="userSpaceOnUse" x1="348.20" y1="435.30" x2="394.77" y2="654.71"><stop offset="0.0" stop-color="#7dc194"/><stop offset="0.0042" stop-color="#7dc194"/><stop offset="0.0083" stop-color="#7cc094"/><stop offset="0.0125" stop-color="#7bbf94"/><stop offset="0.0167" stop-color="#7cbf94"/><stop offset="0.0208" stop-color="#7dc194"/><stop offset="0.025" stop-color="#7fc493"/><stop offset="0.0292" stop-color="#80c593"/><stop offset="0.0333" stop-color="#80c593"/><stop offset="0.0375" stop-color="#7ec394"/><stop offset="0.0417" stop-color="#7cc094"/><stop offset="0.0458" stop-color="#7bbe95"/><stop offset="0.05" stop-color="#7abd95"/><stop offset="0.0542" stop-color="#79bc95"/><stop offset="0.0583" stop-color="#79bb95"/><stop offset="0.0625" stop-color="#78bb96"/><stop offset="0.0667" stop-color="#78bb96"/><stop offset="0.0708" stop-color="#7abd95"/><stop offset="0.075" stop-color="#7cbf95"/><stop offset="0.0792" stop-color="#7dc194"/><stop offset="0.0833" stop-color="#7dc294"/><stop offset="0.0875" stop-color="#7cbf95"/><stop offset="0.0917" stop-color="#7abd95"/><stop offset="0.0958" stop-color="#79bc96"/><stop offset="0.1" stop-color="#7abe95"/><stop offset="0.1042" stop-color="#7dc294"/><stop offset="0.1083" stop-color="#80c593"/><stop offset="0.1125" stop-color="#80c693"/><stop offset="0.1167" stop-color="#7fc494"/><stop offset="0.1208" stop-color="#7cc095"/><stop offset="0.125" stop-color="#7abc96"/><stop offset="0.1292" stop-color="#79bb96"/><stop offset="0.1333" stop-color="#7abc96"/><stop offset="0.1375" stop-color="#7bbe95"/><stop offset="0.1417" stop-color="#7cc095"/><stop offset="0.1458" stop-color="#7dc195"/><stop offset="0.15" stop-color="#7ec294"/><stop offset="0.1542" stop-color="#7dc295"/><stop offset="0.1583" stop-color="#7dc195"/><stop offset="0.1625" stop-color="#7bbf95"/><stop offset="0.1667" stop-color="#7abc96"/><stop offset="0.1708" stop-color="#78ba96"/><stop offset="0.175" stop-color="#78ba96"/><stop offset="0.1792" stop-color="#79bc96"/><stop offset="0.1833" stop-color="#7bbd96"/><stop offset="0.1875" stop-color="#7bbe96"/><stop offset="0.1917" stop-color="#7abd96"/><stop offset="0.1958" stop-color="#79bb96"/><stop offset="0.2" stop-color="#79bb96"/><stop offset="0.2042" stop-color="#7abd96"/><stop offset="0.2083" stop-color="#7cc095"/><stop offset="0.2125" stop-color="#7ec395"/><stop offset="0.2167" stop-color="#7fc395"/><stop offset="0.2208" stop-color="#7ec295"/><stop offset="0.225" stop-color="#7cbf96"/><stop offset="0.2292" stop-color="#7bbe96"/><stop offset="0.2333" stop-color="#7cbf96"/><stop offset="0.2375" stop-color="#7ec295"/><stop offset="0.2417" stop-color="#7fc395"/><stop offset="0.2458" stop-color="#7ec295"/><stop offset="0.25" stop-color="#7bbf96"/><stop offset="0.2542" stop-color="#78ba97"/><stop offset="0.2583" stop-color="#77b898"/><stop offset="0.2625" stop-color="#77b898"/><stop offset="0.2667" stop-color="#78ba97"/><stop offset="0.2708" stop-color="#7abd96"/><stop offset="0.275" stop-color="#7cc096"/><stop offset="0.2792" stop-color="#7dc196"/><stop offset="0.2833" stop-color="#7dc096"/><stop offset="0.2875" stop-color="#7cbf96"/><stop offset="0.2917" stop-color="#7abc97"/><stop offset="0.2958" stop-color="#78ba97"/><stop offset="0.3" stop-color="#77b898"/><stop offset="0.3042" stop-color="#77b998"/><stop offset="0.3083" stop-color="#7abc97"/><stop offset="0.3125" stop-color="#7dc096"/><stop offset="0.3167" stop-color="#7ec395"/><stop offset="0.3208" stop-color="#7ec295"/><stop offset="0.325" stop-color="#7cbf96"/><stop offset="0.3292" stop-color="#79bb97"/><stop offset="0.3333" stop-color="#78b998"/><stop offset="0.3375" stop-color="#79bb97"/><stop offset="0.3417" stop-color="#7cbf96"/><stop offset="0.3458" stop-color="#7fc495"/><stop offset="0.35" stop-color="#80c595"/><stop offset="0.3542" stop-color="#7fc395"/><stop offset="0.3583" stop-color="#7cbf96"/><stop offset="0.3625" stop-color="#79bc97"/><stop offset="0.3667" stop-color="#78ba98"/><stop offset="0.3708" stop-color="#78ba98"/><stop offset="0.375" stop-color="#79ba98"/><stop offset="0.3792" stop-color="#79ba98"/><stop offset="0.3833" stop-color="#78ba98"/><stop offset="0.3875" stop-color="#78b998"/><stop offset="0.3917" stop-color="#78ba98"/><stop offset="0.3958" stop-color="#79bb98"/><stop offset="0.4" stop-color="#7abc97"/><stop offset="0.4042" stop-color="#7bbd97"/><stop offset="0.4083" stop-color="#7bbd97"/><stop offset="0.4125" stop-color="#7bbe97"/><stop offset="0.4167" stop-color="#7bbe97"/><stop offset="0.4208" stop-color="#7cbf97"/><stop offset="0.425" stop-color="#7bbe97"/><stop offset="0.4292" stop-color="#7bbd97"/><stop offset="0.4333" stop-color="#7abc98"/><stop offset="0.4375" stop-color="#7abc98"/><stop offset="0.4417" stop-color="#7bbe97"/><stop offset="0.4458" stop-color="#7cc097"/><stop offset="0.45" stop-color="#7dc097"/><stop offset="0.4542" stop-color="#7cbf97"/><stop offset="0.4583" stop-color="#7abc98"/><stop offset="0.4625" stop-color="#78b998"/><stop offset="0.4667" stop-color="#78b999"/><stop offset="0.4708" stop-color="#79bb98"/><stop offset="0.475" stop-color="#7cbf97"/><stop offset="0.4792" stop-color="#7ec197"/><stop offset="0.4833" stop-color="#7dc197"/><stop offset="0.4875" stop-color="#7bbd98"/><stop offset="0.4917" stop-color="#78b999"/><stop offset="0.4958" stop-color="#76b699"/><stop offset="0.5" stop-color="#75b69a"/><stop offset="0.5042" stop-color="#76b799"/><stop offset="0.5083" stop-color="#78b999"/><stop offset="0.5125" stop-color="#79ba98"/><stop offset="0.5167" stop-color="#7abc98"/><stop offset="0.5208" stop-color="#7bbd98"/><stop offset="0.525" stop-color="#7cbf97"/><stop offset="0.5292" stop-color="#7cbf97"/><stop offset="0.5333" stop-color="#7cbf97"/><stop offset="0.5375" stop-color="#7bbe97"/><stop offset="0.5417" stop-color="#7abd98"/><stop offset="0.5458" stop-color="#7bbd98"/><stop offset="0.55" stop-color="#7cbf97"/><stop offset="0.5542" stop-color="#7dc197"/><stop offset="0.5583" stop-color="#7ec197"/><stop offset="0.5625" stop-color="#7dc097"/><stop offset="0.5667" stop-color="#7bbd98"/><stop offset="0.5708" stop-color="#79bb98"/><stop offset="0.575" stop-color="#78ba98"/><stop offset="0.5792" stop-color="#78ba98"/><stop offset="0.5833" stop-color="#79bb98"/><stop offset="0.5875" stop-color="#79bb98"/><stop offset="0.5917" stop-color="#79bb98"/><stop offset="0.5958" stop-color="#7abc98"/><stop offset="0.6" stop-color="#7bbd97"/><stop offset="0.6042" stop-color="#7cbf97"/><stop offset="0.6083" stop-color="#7cc097"/><stop offset="0.6125" stop-color="#7bbe97"/><stop offset="0.6167" stop-color="#79bc98"/><stop offset="0.6208" stop-color="#78b998"/><stop offset="0.625" stop-color="#77b899"/><stop offset="0.6292" stop-color="#78ba98"/><stop offset="0.6333" stop-color="#7bbd97"/><stop offset="0.6375" stop-color="#7dc097"/><stop offset="0.6417" stop-color="#7dc196"/><stop offset="0.6458" stop-color="#7cc097"/><stop offset="0.65" stop-color="#7bbe97"/><stop offset="0.6542" stop-color="#7bbe97"/><stop offset="0.6583" stop-color="#7cbf97"/><stop offset="0.6625" stop-color="#7dc196"/><stop offset="0.6667" stop-color="#7ec296"/><stop offset="0.6708" stop-color="#7dc196"/><stop offset="0.675" stop-color="#7cc097"/><stop offset="0.6792" stop-color="#7cbf97"/><stop offset="0.6833" stop-color="#7bbf97"/><stop offset="0.6875" stop-color="#7bbe97"/><stop offset="0.6917" stop-color="#7bbe97"/><stop offset="0.6958" stop-color="#79bc97"/><stop offset="0.7" stop-color="#78ba98"/><stop offset="0.7042" stop-color="#77b998"/><stop offset="0.7083" stop-color="#78ba98"/><stop offset="0.7125" stop-color="#79bb98"/><stop offset="0.7167" stop-color="#7abd97"/><stop offset="0.7208" stop-color="#7bbe97"/><stop offset="0.725" stop-color="#7bbf97"/><stop offset="0.7292" stop-color="#7cc096"/><stop offset="0.7333" stop-color="#7dc196"/><stop offset="0.7375" stop-color="#7ec296"/><stop offset="0.7417" stop-color="#7dc296"/><stop offset="0.7458" stop-color="#7cbf97"/><stop offset="0.75" stop-color="#7abc97"/><stop offset="0.7542" stop-color="#79bb97"/><stop offset="0.7583" stop-color="#7abd97"/><stop offset="0.7625" stop-color="#7dc196"/><stop offset="0.7667" stop-color="#7fc495"/><stop offset="0.7708" stop-color="#80c695"/><stop offset="0.775" stop-color="#7ec396"/><stop offset="0.7792" stop-color="#7bbf97"/><stop offset="0.7833" stop-color="#79bb97"/><stop offset="0.7875" stop-color="#79bb97"/><stop offset="0.7917" stop-color="#7abe97"/><stop offset="0.7958" stop-color="#7dc196"/><stop offset="0.8" stop-color="#7fc395"/><stop offset="0.8042" stop-color="#7ec395"/><stop offset="0.8083" stop-color="#7dc196"/><stop offset="0.8125" stop-color="#7bbe97"/><stop offset="0.8167" stop-color="#79bb97"/><stop offset="0.8208" stop-color="#77b998"/><stop offset="0.825" stop-color="#77b998"/><stop offset="0.8292" stop-color="#78ba98"/><stop offset="0.8333" stop-color="#79bc97"/><stop offset="0.8375" stop-color="#7cc096"/><stop offset="0.8417" stop-color="#7ec395"/><stop offset="0.8458" stop-color="#7fc495"/><stop offset="0.85" stop-color="#7fc495"/><stop offset="0.8542" stop-color="#7dc196"/><stop offset="0.8583" stop-color="#7cc096"/><stop offset="0.8625" stop-color="#7bbf97"/><stop offset="0.8667" stop-color="#7cc098"/><stop offset="0.8708" stop-color="#7dc199"/><stop offset="0.875" stop-color="#7cc09b"/><stop offset="0.8792" stop-color="#79bc9d"/><stop offset="0.8833" stop-color="#76b79f"/><stop offset="0.8875" stop-color="#73b3a2"/><stop offset="0.8917" stop-color="#72b1a3"/><stop offset="0.8958" stop-color="#73b2a5"/><stop offset="0.9" stop-color="#73b3a6"/><stop offset="0.9042" stop-color="#73b2a7"/><stop offset="0.9083" stop-color="#70afa9"/><stop offset="0.9125" stop-color="#6eabab"/><stop offset="0.9167" stop-color="#6ca8ac"/><stop offset="0.9208" stop-color="#6ca8ad"/><stop offset="0.925" stop-color="#6daaad"/><stop offset="0.9292" stop-color="#6eacad"/><stop offset="0.9333" stop-color="#6eacae"/><stop offset="0.9375" stop-color="#6daaaf"/><stop offset="0.9417" stop-color="#6ba7b0"/><stop offset="0.9458" stop-color="#69a4b2"/><stop offset="0.95" stop-color="#67a2b3"/><stop offset="0.9542" stop-color="#68a3b1"/><stop offset="0.9583" stop-color="#6aa6af"/><stop offset="0.9625" stop-color="#6dabac"/><stop offset="0.9667" stop-color="#71b0a9"/><stop offset="0.9708" stop-color="#75b5a7"/><stop offset="0.975" stop-color="#77b9a4"/><stop offset="0.9792" stop-color="#78baa2"/><stop offset="0.9833" stop-color="#77b8a1"/><stop offset="0.9875" stop-color="#75b6a0"/><stop offset="0.9917" stop-color="#75b59f"/><stop offset="0.9958" stop-color="#77b89d"/><stop offset="1.0" stop-color="#7bbd9a"/></linearGradient><linearGradient id="gm4" gradientUnits="userSpaceOnUse" x1="348.20" y1="435.30" x2="393.57" y2="214.53"><stop offset="0" stop-color="#fff" stop-opacity="0"/><stop offset="1" stop-color="#fff" stop-opacity="1"/></linearGradient><mask id="mk4" maskUnits="userSpaceOnUse" x="300" y="200" width="1200" height="400"><polygon points="348.2,435.3 899.0,318.4 1449.4,431.8 897.1,548.1" fill="url(#gm4)"/></mask><linearGradient id="ga3" gradientUnits="userSpaceOnUse" x1="348.20" y1="407.90" x2="393.98" y2="626.62"><stop offset="0.0" stop-color="#79bd9c"/><stop offset="0.0042" stop-color="#79be9c"/><stop offset="0.0083" stop-color="#79bd9c"/><stop offset="0.0125" stop-color="#78bc9c"/><stop offset="0.0167" stop-color="#78bc9c"/><stop offset="0.0208" stop-color="#78bc9c"/><stop offset="0.025" stop-color="#79bd9c"/><stop offset="0.0292" stop-color="#79bd9c"/><stop offset="0.0333" stop-color="#79bd9c"/><stop offset="0.0375" stop-color="#78bc9c"/><stop offset="0.0417" stop-color="#77bb9c"/><stop offset="0.0458" stop-color="#77bb9c"/><stop offset="0.05" stop-color="#78bc9c"/><stop offset="0.0542" stop-color="#78bc9c"/><stop offset="0.0583" stop-color="#78bc9c"/><stop offset="0.0625" stop-color="#78bc9c"/><stop offset="0.0667" stop-color="#78bc9c"/><stop offset="0.0708" stop-color="#78bc9c"/><stop offset="0.075" stop-color="#79bd9b"/><stop offset="0.0792" stop-color="#7abe9b"/><stop offset="0.0833" stop-color="#7abe9b"/><stop offset="0.0875" stop-color="#79bd9b"/><stop offset="0.0917" stop-color="#79bd9b"/><stop offset="0.0958" stop-color="#79bc9b"/><stop offset="0.1" stop-color="#79bd9b"/><stop offset="0.1042" stop-color="#79bd9b"/><stop offset="0.1083" stop-color="#79bd9b"/><stop offset="0.1125" stop-color="#78bb9c"/><stop offset="0.1167" stop-color="#77ba9c"/><stop offset="0.1208" stop-color="#77ba9c"/><stop offset="0.125" stop-color="#78bc9b"/><stop offset="0.1292" stop-color="#7abe9b"/><stop offset="0.1333" stop-color="#7bbf9b"/><stop offset="0.1375" stop-color="#7abf9b"/><stop offset="0.1417" stop-color="#79be9b"/><stop offset="0.1458" stop-color="#78bc9b"/><stop offset="0.15" stop-color="#78bc9b"/><stop offset="0.1542" stop-color="#79bd9b"/><stop offset="0.1583" stop-color="#7abe9b"/><stop offset="0.1625" stop-color="#7abe9b"/><stop offset="0.1667" stop-color="#7abe9b"/><stop offset="0.1708" stop-color="#79bd9b"/><stop offset="0.175" stop-color="#78bc9b"/><stop offset="0.1792" stop-color="#78bc9b"/><stop offset="0.1833" stop-color="#79bc9b"/><stop offset="0.1875" stop-color="#79bd9b"/><stop offset="0.1917" stop-color="#79bc9b"/><stop offset="0.1958" stop-color="#79bc9b"/><stop offset="0.2" stop-color="#79bd9b"/><stop offset="0.2042" stop-color="#7abf9a"/><stop offset="0.2083" stop-color="#7cc09a"/><stop offset="0.2125" stop-color="#7cc19a"/><stop offset="0.2167" stop-color="#7bbf9a"/><stop offset="0.2208" stop-color="#79bd9b"/><stop offset="0.225" stop-color="#77ba9b"/><stop offset="0.2292" stop-color="#77ba9b"/><stop offset="0.2333" stop-color="#79bc9b"/><stop offset="0.2375" stop-color="#7abf9a"/><stop offset="0.2417" stop-color="#7bc09a"/><stop offset="0.2458" stop-color="#7bbf9a"/><stop offset="0.25" stop-color="#79bd9a"/><stop offset="0.2542" stop-color="#78bc9b"/><stop offset="0.2583" stop-color="#78bb9b"/><stop offset="0.2625" stop-color="#79bc9b"/><stop offset="0.2667" stop-color="#7abe9a"/><stop offset="0.2708" stop-color="#7bc09a"/><stop offset="0.275" stop-color="#7bc09a"/><stop offset="0.2792" stop-color="#7bc09a"/><stop offset="0.2833" stop-color="#7bbf9a"/><stop offset="0.2875" stop-color="#7abf9a"/><stop offset="0.2917" stop-color="#7abe9a"/><stop offset="0.2958" stop-color="#79bd9a"/><stop offset="0.3" stop-color="#78bb9b"/><stop offset="0.3042" stop-color="#78bb9b"/><stop offset="0.3083" stop-color="#78bc9b"/><stop offset="0.3125" stop-color="#7abe9a"/><stop offset="0.3167" stop-color="#7bc09a"/><stop offset="0.3208" stop-color="#7cc199"/><stop offset="0.325" stop-color="#7bc09a"/><stop offset="0.3292" stop-color="#7abd9a"/><stop offset="0.3333" stop-color="#78bb9b"/><stop offset="0.3375" stop-color="#78bb9b"/><stop offset="0.3417" stop-color="#79bc9b"/><stop offset="0.3458" stop-color="#7bbf9a"/><stop offset="0.35" stop-color="#7cc09a"/><stop offset="0.3542" stop-color="#7cc09a"/><stop offset="0.3583" stop-color="#7abe9a"/><stop offset="0.3625" stop-color="#78bb9b"/><stop offset="0.3667" stop-color="#77b99b"/><stop offset="0.3708" stop-color="#77b99c"/><stop offset="0.375" stop-color="#77ba9b"/><stop offset="0.3792" stop-color="#79bc9b"/><stop offset="0.3833" stop-color="#7abd9b"/><stop offset="0.3875" stop-color="#7bbe9a"/><stop offset="0.3917" stop-color="#7bbf9a"/><stop offset="0.3958" stop-color="#7bbe9a"/><stop offset="0.4" stop-color="#7abd9b"/><stop offset="0.4042" stop-color="#79bc9b"/><stop offset="0.4083" stop-color="#78ba9b"/><stop offset="0.4125" stop-color="#78ba9c"/><stop offset="0.4167" stop-color="#78ba9b"/><stop offset="0.4208" stop-color="#79bc9b"/><stop offset="0.425" stop-color="#7abd9b"/><stop offset="0.4292" stop-color="#7abd9b"/><stop offset="0.4333" stop-color="#79bc9b"/><stop offset="0.4375" stop-color="#78bb9c"/><stop offset="0.4417" stop-color="#77b99c"/><stop offset="0.4458" stop-color="#76b89c"/><stop offset="0.45" stop-color="#77b99c"/><stop offset="0.4542" stop-color="#78bb9c"/><stop offset="0.4583" stop-color="#7abd9b"/><stop offset="0.4625" stop-color="#7bbf9b"/><stop offset="0.4667" stop-color="#7bbf9b"/><stop offset="0.4708" stop-color="#7abd9b"/><stop offset="0.475" stop-color="#78ba9c"/><stop offset="0.4792" stop-color="#76b89c"/><stop offset="0.4833" stop-color="#76b79d"/><stop offset="0.4875" stop-color="#77b89c"/><stop offset="0.4917" stop-color="#78ba9c"/><stop offset="0.4958" stop-color="#79bb9c"/><stop offset="0.5" stop-color="#79bc9c"/><stop offset="0.5042" stop-color="#78ba9c"/><stop offset="0.5083" stop-color="#77b99d"/><stop offset="0.5125" stop-color="#76b89d"/><stop offset="0.5167" stop-color="#76b89e"/><stop offset="0.5208" stop-color="#77b89e"/><stop offset="0.525" stop-color="#77b89e"/><stop offset="0.5292" stop-color="#77b99e"/><stop offset="0.5333" stop-color="#77b99e"/><stop offset="0.5375" stop-color="#77b99f"/><stop offset="0.5417" stop-color="#77b89f"/><stop offset="0.5458" stop-color="#76b89f"/><stop offset="0.55" stop-color="#75b6a0"/><stop offset="0.5542" stop-color="#73b3a1"/><stop offset="0.5583" stop-color="#72b2a2"/><stop offset="0.5625" stop-color="#72b2a2"/><stop offset="0.5667" stop-color="#73b3a2"/><stop offset="0.5708" stop-color="#75b6a1"/><stop offset="0.575" stop-color="#76b7a1"/><stop offset="0.5792" stop-color="#75b7a2"/><stop offset="0.5833" stop-color="#74b4a2"/><stop offset="0.5875" stop-color="#72b1a3"/><stop offset="0.5917" stop-color="#71b0a4"/><stop offset="0.5958" stop-color="#71b1a4"/><stop offset="0.6" stop-color="#73b3a4"/><stop offset="0.6042" stop-color="#74b5a3"/><stop offset="0.6083" stop-color="#74b5a3"/><stop offset="0.6125" stop-color="#73b3a3"/><stop offset="0.6167" stop-color="#72b2a3"/><stop offset="0.6208" stop-color="#72b2a3"/><stop offset="0.625" stop-color="#72b3a2"/><stop offset="0.6292" stop-color="#73b5a2"/><stop offset="0.6333" stop-color="#74b5a1"/><stop offset="0.6375" stop-color="#74b5a1"/><stop offset="0.6417" stop-color="#74b5a1"/><stop offset="0.6458" stop-color="#75b6a0"/><stop offset="0.65" stop-color="#76b8a0"/><stop offset="0.6542" stop-color="#77ba9f"/><stop offset="0.6583" stop-color="#78bb9f"/><stop offset="0.6625" stop-color="#77b99f"/><stop offset="0.6667" stop-color="#75b79f"/><stop offset="0.6708" stop-color="#74b69f"/><stop offset="0.675" stop-color="#75b79e"/><stop offset="0.6792" stop-color="#77ba9e"/><stop offset="0.6833" stop-color="#78bc9d"/><stop offset="0.6875" stop-color="#78bc9d"/><stop offset="0.6917" stop-color="#77bb9d"/><stop offset="0.6958" stop-color="#76b99d"/><stop offset="0.7" stop-color="#76b99d"/><stop offset="0.7042" stop-color="#77bb9c"/><stop offset="0.7083" stop-color="#79be9c"/><stop offset="0.7125" stop-color="#7abf9b"/><stop offset="0.7167" stop-color="#7abf9b"/><stop offset="0.7208" stop-color="#79bd9c"/><stop offset="0.725" stop-color="#77bb9c"/><stop offset="0.7292" stop-color="#77bb9c"/><stop offset="0.7333" stop-color="#78bc9c"/><stop offset="0.7375" stop-color="#79be9b"/><stop offset="0.7417" stop-color="#79be9b"/><stop offset="0.7458" stop-color="#78bc9c"/><stop offset="0.75" stop-color="#77ba9c"/><stop offset="0.7542" stop-color="#76b99c"/><stop offset="0.7583" stop-color="#77bb9c"/><stop offset="0.7625" stop-color="#79bd9b"/><stop offset="0.7667" stop-color="#7abe9b"/><stop offset="0.7708" stop-color="#7abe9b"/><stop offset="0.775" stop-color="#79bd9b"/><stop offset="0.7792" stop-color="#78bc9c"/><stop offset="0.7833" stop-color="#78bc9b"/><stop offset="0.7875" stop-color="#79be9b"/><stop offset="0.7917" stop-color="#7abf9b"/><stop offset="0.7958" stop-color="#7abe9b"/><stop offset="0.8" stop-color="#78bc9b"/><stop offset="0.8042" stop-color="#77ba9c"/><stop offset="0.8083" stop-color="#77ba9c"/><stop offset="0.8125" stop-color="#78bc9b"/><stop offset="0.8167" stop-color="#79be9b"/><stop offset="0.8208" stop-color="#7abe9b"/><stop offset="0.825" stop-color="#79bd9b"/><stop offset="0.8292" stop-color="#78bb9b"/><stop offset="0.8333" stop-color="#77bb9c"/><stop offset="0.8375" stop-color="#78bc9b"/><stop offset="0.8417" stop-color="#7abe9b"/><stop offset="0.8458" stop-color="#7bc09a"/><stop offset="0.85" stop-color="#7bc09a"/><stop offset="0.8542" stop-color="#7abf9b"/><stop offset="0.8583" stop-color="#79bd9b"/><stop offset="0.8625" stop-color="#78bb9b"/><stop offset="0.8667" stop-color="#78bb9b"/><stop offset="0.8708" stop-color="#78bc9b"/><stop offset="0.875" stop-color="#79bd9b"/><stop offset="0.8792" stop-color="#79bd9b"/><stop offset="0.8833" stop-color="#79bd9b"/><stop offset="0.8875" stop-color="#79bd9b"/><stop offset="0.8917" stop-color="#7abe9b"/><stop offset="0.8958" stop-color="#7abe9a"/><stop offset="0.9" stop-color="#7abe9a"/><stop offset="0.9042" stop-color="#79bd9b"/><stop offset="0.9083" stop-color="#79bc9b"/><stop offset="0.9125" stop-color="#79bc9b"/><stop offset="0.9167" stop-color="#7abe9b"/><stop offset="0.9208" stop-color="#7bbf9a"/><stop offset="0.925" stop-color="#7bc09a"/><stop offset="0.9292" stop-color="#7bc09a"/><stop offset="0.9333" stop-color="#79bd9a"/><stop offset="0.9375" stop-color="#78bb9b"/><stop offset="0.9417" stop-color="#77ba9b"/><stop offset="0.9458" stop-color="#77bb9b"/><stop offset="0.95" stop-color="#79bc9b"/><stop offset="0.9542" stop-color="#7abf9a"/><stop offset="0.9583" stop-color="#7bc09a"/><stop offset="0.9625" stop-color="#7bc09a"/><stop offset="0.9667" stop-color="#7bc09a"/><stop offset="0.9708" stop-color="#7abf9a"/><stop offset="0.975" stop-color="#7abe9a"/><stop offset="0.9792" stop-color="#79bd9a"/><stop offset="0.9833" stop-color="#79bd9a"/><stop offset="0.9875" stop-color="#79bd9a"/><stop offset="0.9917" stop-color="#7abe9a"/><stop offset="0.9958" stop-color="#7bbf9a"/><stop offset="1.0" stop-color="#7bc09a"/></linearGradient><linearGradient id="gb3" gradientUnits="userSpaceOnUse" x1="348.20" y1="407.90" x2="393.98" y2="626.62"><stop offset="0.0" stop-color="#76b99d"/><stop offset="0.0042" stop-color="#77ba9c"/><stop offset="0.0083" stop-color="#77bb9c"/><stop offset="0.0125" stop-color="#78bc9c"/><stop offset="0.0167" stop-color="#79bd9c"/><stop offset="0.0208" stop-color="#79bd9c"/><stop offset="0.025" stop-color="#79bd9c"/><stop offset="0.0292" stop-color="#78bb9c"/><stop offset="0.0333" stop-color="#76ba9c"/><stop offset="0.0375" stop-color="#76b99d"/><stop offset="0.0417" stop-color="#77bb9c"/><stop offset="0.0458" stop-color="#79be9b"/><stop offset="0.05" stop-color="#7bc09b"/><stop offset="0.0542" stop-color="#7cc19b"/><stop offset="0.0583" stop-color="#7bc09b"/><stop offset="0.0625" stop-color="#79bd9b"/><stop offset="0.0667" stop-color="#78bb9c"/><stop offset="0.0708" stop-color="#78bb9c"/><stop offset="0.075" stop-color="#78bc9c"/><stop offset="0.0792" stop-color="#79bd9b"/><stop offset="0.0833" stop-color="#79bd9c"/><stop offset="0.0875" stop-color="#77bb9c"/><stop offset="0.0917" stop-color="#76b89d"/><stop offset="0.0958" stop-color="#75b89d"/><stop offset="0.1" stop-color="#76b99c"/><stop offset="0.1042" stop-color="#78bb9c"/><stop offset="0.1083" stop-color="#79be9b"/><stop offset="0.1125" stop-color="#7abf9b"/><stop offset="0.1167" stop-color="#7abf9b"/><stop offset="0.1208" stop-color="#79be9b"/><stop offset="0.125" stop-color="#79bd9b"/><stop offset="0.1292" stop-color="#79bd9b"/><stop offset="0.1333" stop-color="#78bc9b"/><stop offset="0.1375" stop-color="#78bc9b"/><stop offset="0.1417" stop-color="#79bd9b"/><stop offset="0.1458" stop-color="#7abe9b"/><stop offset="0.15" stop-color="#7bc09b"/><stop offset="0.1542" stop-color="#7bc19a"/><stop offset="0.1583" stop-color="#7bc09b"/><stop offset="0.1625" stop-color="#79bd9b"/><stop offset="0.1667" stop-color="#76b99c"/><stop offset="0.1708" stop-color="#75b79d"/><stop offset="0.175" stop-color="#75b79d"/><stop offset="0.1792" stop-color="#77ba9c"/><stop offset="0.1833" stop-color="#79bc9b"/><stop offset="0.1875" stop-color="#79be9b"/><stop offset="0.1917" stop-color="#79bd9b"/><stop offset="0.1958" stop-color="#78bc9b"/><stop offset="0.2" stop-color="#78bc9b"/><stop offset="0.2042" stop-color="#79bd9b"/><stop offset="0.2083" stop-color="#7abf9b"/><stop offset="0.2125" stop-color="#7cc19a"/><stop offset="0.2167" stop-color="#7cc19a"/><stop offset="0.2208" stop-color="#7abf9b"/><stop offset="0.225" stop-color="#79bd9b"/><stop offset="0.2292" stop-color="#78bc9b"/><stop offset="0.2333" stop-color="#78bc9b"/><stop offset="0.2375" stop-color="#79bd9b"/><stop offset="0.2417" stop-color="#79be9b"/><stop offset="0.2458" stop-color="#79be9b"/><stop offset="0.25" stop-color="#79bd9b"/><stop offset="0.2542" stop-color="#79bd9b"/><stop offset="0.2583" stop-color="#78bc9b"/><stop offset="0.2625" stop-color="#77bb9b"/><stop offset="0.2667" stop-color="#76b99c"/><stop offset="0.2708" stop-color="#76b89c"/><stop offset="0.275" stop-color="#76b99c"/><stop offset="0.2792" stop-color="#78bb9b"/><stop offset="0.2833" stop-color="#7abf9a"/><stop offset="0.2875" stop-color="#7dc29a"/><stop offset="0.2917" stop-color="#7dc399"/><stop offset="0.2958" stop-color="#7cc19a"/><stop offset="0.3" stop-color="#7abe9b"/><stop offset="0.3042" stop-color="#79bc9b"/><stop offset="0.3083" stop-color="#79bc9b"/><stop offset="0.3125" stop-color="#7abe9b"/><stop offset="0.3167" stop-color="#7bbf9a"/><stop offset="0.3208" stop-color="#7bbf9a"/><stop offset="0.325" stop-color="#79be9b"/><stop offset="0.3292" stop-color="#78bb9b"/><stop offset="0.3333" stop-color="#77ba9b"/><stop offset="0.3375" stop-color="#77bb9b"/><stop offset="0.3417" stop-color="#78bc9b"/><stop offset="0.3458" stop-color="#79bd9b"/><stop offset="0.35" stop-color="#79bd9b"/><stop offset="0.3542" stop-color="#79bc9b"/><stop offset="0.3583" stop-color="#78bc9b"/><stop offset="0.3625" stop-color="#78bc9b"/><stop offset="0.3667" stop-color="#79bc9b"/><stop offset="0.3708" stop-color="#7abe9a"/><stop offset="0.375" stop-color="#7abf9a"/><stop offset="0.3792" stop-color="#7bc09a"/><stop offset="0.3833" stop-color="#7cc19a"/><stop offset="0.3875" stop-color="#7dc299"/><stop offset="0.3917" stop-color="#7dc299"/><stop offset="0.3958" stop-color="#7cc19a"/><stop offset="0.4" stop-color="#7abe9a"/><stop offset="0.4042" stop-color="#77ba9b"/><stop offset="0.4083" stop-color="#76b99c"/><stop offset="0.4125" stop-color="#77ba9b"/><stop offset="0.4167" stop-color="#79bc9b"/><stop offset="0.4208" stop-color="#7abf9a"/><stop offset="0.425" stop-color="#7bbf9a"/><stop offset="0.4292" stop-color="#7abe9a"/><stop offset="0.4333" stop-color="#78bc9b"/><stop offset="0.4375" stop-color="#77ba9b"/><stop offset="0.4417" stop-color="#78bb9b"/><stop offset="0.4458" stop-color="#79bd9a"/><stop offset="0.45" stop-color="#7bbf9a"/><stop offset="0.4542" stop-color="#7bc09a"/><stop offset="0.4583" stop-color="#7bc09a"/><stop offset="0.4625" stop-color="#7bbf9a"/><stop offset="0.4667" stop-color="#7bbf9a"/><stop offset="0.4708" stop-color="#7bc09a"/><stop offset="0.475" stop-color="#7cc199"/><stop offset="0.4792" stop-color="#7cc199"/><stop offset="0.4833" stop-color="#7bc09a"/><stop offset="0.4875" stop-color="#7abf9a"/><stop offset="0.4917" stop-color="#79bd9a"/><stop offset="0.4958" stop-color="#79bc9a"/><stop offset="0.5" stop-color="#78bb9b"/><stop offset="0.5042" stop-color="#77ba9b"/><stop offset="0.5083" stop-color="#77ba9b"/><stop offset="0.5125" stop-color="#77ba9b"/><stop offset="0.5167" stop-color="#79bc9a"/><stop offset="0.5208" stop-color="#7bbf9a"/><stop offset="0.525" stop-color="#7cc199"/><stop offset="0.5292" stop-color="#7cc199"/><stop offset="0.5333" stop-color="#7bbf9a"/><stop offset="0.5375" stop-color="#79bd9a"/><stop offset="0.5417" stop-color="#78bc9a"/><stop offset="0.5458" stop-color="#79bd9a"/><stop offset="0.55" stop-color="#7bc099"/><stop offset="0.5542" stop-color="#7dc299"/><stop offset="0.5583" stop-color="#7dc399"/><stop offset="0.5625" stop-color="#7cc199"/><stop offset="0.5667" stop-color="#7bbf9a"/><stop offset="0.5708" stop-color="#7abd9a"/><stop offset="0.575" stop-color="#79bd9a"/><stop offset="0.5792" stop-color="#79bd9a"/><stop offset="0.5833" stop-color="#79bd9a"/><stop offset="0.5875" stop-color="#79bc9a"/><stop offset="0.5917" stop-color="#78bc9a"/><stop offset="0.5958" stop-color="#78bb9a"/><stop offset="0.6" stop-color="#79bc9a"/><stop offset="0.6042" stop-color="#7abd9a"/><stop offset="0.6083" stop-color="#7abf9a"/><stop offset="0.6125" stop-color="#7bbf99"/><stop offset="0.6167" stop-color="#7bc099"/><stop offset="0.6208" stop-color="#7cc199"/><stop offset="0.625" stop-color="#7cc199"/><stop offset="0.6292" stop-color="#7dc299"/><stop offset="0.6333" stop-color="#7cc199"/><stop offset="0.6375" stop-color="#7bbf99"/><stop offset="0.6417" stop-color="#79bd9a"/><stop offset="0.6458" stop-color="#79bc9a"/><stop offset="0.65" stop-color="#7abe9a"/><stop offset="0.6542" stop-color="#7cc099"/><stop offset="0.6583" stop-color="#7dc299"/><stop offset="0.6625" stop-color="#7dc199"/><stop offset="0.6667" stop-color="#7bbf99"/><stop offset="0.6708" stop-color="#78bb9a"/><stop offset="0.675" stop-color="#77b99b"/><stop offset="0.6792" stop-color="#77ba9a"/><stop offset="0.6833" stop-color="#79bc9a"/><stop offset="0.6875" stop-color="#7bbf99"/><stop offset="0.6917" stop-color="#7cc099"/><stop offset="0.6958" stop-color="#7cc099"/><stop offset="0.7" stop-color="#7cc099"/><stop offset="0.7042" stop-color="#7cc099"/><stop offset="0.7083" stop-color="#7cc199"/><stop offset="0.7125" stop-color="#7cc199"/><stop offset="0.7167" stop-color="#7cc199"/><stop offset="0.7208" stop-color="#7cc099"/><stop offset="0.725" stop-color="#7bbf99"/><stop offset="0.7292" stop-color="#7bbf99"/><stop offset="0.7333" stop-color="#7bbf99"/><stop offset="0.7375" stop-color="#7bbf99"/><stop offset="0.7417" stop-color="#7abe99"/><stop offset="0.7458" stop-color="#7abd99"/><stop offset="0.75" stop-color="#7abd99"/><stop offset="0.7542" stop-color="#7abe99"/><stop offset="0.7583" stop-color="#7bc099"/><stop offset="0.7625" stop-color="#7cc099"/><stop offset="0.7667" stop-color="#7bc099"/><stop offset="0.7708" stop-color="#7abd99"/><stop offset="0.775" stop-color="#79bb9a"/><stop offset="0.7792" stop-color="#79bb9a"/><stop offset="0.7833" stop-color="#7abe99"/><stop offset="0.7875" stop-color="#7dc198"/><stop offset="0.7917" stop-color="#7fc498"/><stop offset="0.7958" stop-color="#7fc498"/><stop offset="0.8" stop-color="#7ec398"/><stop offset="0.8042" stop-color="#7cc099"/><stop offset="0.8083" stop-color="#7abe99"/><stop offset="0.8125" stop-color="#7abe99"/><stop offset="0.8167" stop-color="#7abe99"/><stop offset="0.8208" stop-color="#7bbf99"/><stop offset="0.825" stop-color="#7bbf99"/><stop offset="0.8292" stop-color="#7bbe99"/><stop offset="0.8333" stop-color="#7bbe99"/><stop offset="0.8375" stop-color="#7bbf99"/><stop offset="0.8417" stop-color="#7bbf99"/><stop offset="0.8458" stop-color="#7bc099"/><stop offset="0.85" stop-color="#7bbf99"/><stop offset="0.8542" stop-color="#7bbf99"/><stop offset="0.8583" stop-color="#7bbf99"/><stop offset="0.8625" stop-color="#7cc099"/><stop offset="0.8667" stop-color="#7cc098"/><stop offset="0.8708" stop-color="#7cc198"/><stop offset="0.875" stop-color="#7cc098"/><stop offset="0.8792" stop-color="#7bbf99"/><stop offset="0.8833" stop-color="#7bbf99"/><stop offset="0.8875" stop-color="#7cc198"/><stop offset="0.8917" stop-color="#7ec398"/><stop offset="0.8958" stop-color="#7ec398"/><stop offset="0.9" stop-color="#7dc298"/><stop offset="0.9042" stop-color="#7bbf99"/><stop offset="0.9083" stop-color="#79bc99"/><stop offset="0.9125" stop-color="#78bb9a"/><stop offset="0.9167" stop-color="#79bc99"/><stop offset="0.9208" stop-color="#7bbf99"/><stop offset="0.925" stop-color="#7dc198"/><stop offset="0.9292" stop-color="#7dc298"/><stop offset="0.9333" stop-color="#7dc198"/><stop offset="0.9375" stop-color="#7cc098"/><stop offset="0.9417" stop-color="#7cc098"/><stop offset="0.9458" stop-color="#7cc098"/><stop offset="0.95" stop-color="#7cc098"/><stop offset="0.9542" stop-color="#7cc098"/><stop offset="0.9583" stop-color="#7cbf98"/><stop offset="0.9625" stop-color="#7cbf98"/><stop offset="0.9667" stop-color="#7cc098"/><stop offset="0.9708" stop-color="#7dc198"/><stop offset="0.975" stop-color="#7dc298"/><stop offset="0.9792" stop-color="#7dc198"/><stop offset="0.9833" stop-color="#7cc098"/><stop offset="0.9875" stop-color="#7bbf98"/><stop offset="0.9917" stop-color="#7bbf98"/><stop offset="0.9958" stop-color="#7cc098"/><stop offset="1.0" stop-color="#7cc098"/></linearGradient><linearGradient id="gm3" gradientUnits="userSpaceOnUse" x1="348.20" y1="407.90" x2="393.59" y2="188.19"><stop offset="0" stop-color="#fff" stop-opacity="0"/><stop offset="1" stop-color="#fff" stop-opacity="1"/></linearGradient><mask id="mk3" maskUnits="userSpaceOnUse" x="300" y="200" width="1200" height="400"><polygon points="348.2,407.9 899.0,292.6 1449.4,406.4 897.1,521.3" fill="url(#gm3)"/></mask><linearGradient id="ga2" gradientUnits="userSpaceOnUse" x1="348.20" y1="382.50" x2="394.13" y2="601.15"><stop offset="0.0" stop-color="#75b7a0"/><stop offset="0.0042" stop-color="#77ba9f"/><stop offset="0.0083" stop-color="#78bb9f"/><stop offset="0.0125" stop-color="#78ba9f"/><stop offset="0.0167" stop-color="#78ba9e"/><stop offset="0.0208" stop-color="#79bc9e"/><stop offset="0.025" stop-color="#7cc09d"/><stop offset="0.0292" stop-color="#7dc19c"/><stop offset="0.0333" stop-color="#7cc09c"/><stop offset="0.0375" stop-color="#7abc9d"/><stop offset="0.0417" stop-color="#77b89d"/><stop offset="0.0458" stop-color="#75b59e"/><stop offset="0.05" stop-color="#74b49e"/><stop offset="0.0542" stop-color="#75b59d"/><stop offset="0.0583" stop-color="#75b59d"/><stop offset="0.0625" stop-color="#75b69d"/><stop offset="0.0667" stop-color="#77b89c"/><stop offset="0.0708" stop-color="#79bb9b"/><stop offset="0.075" stop-color="#7cbe9a"/><stop offset="0.0792" stop-color="#7dc199"/><stop offset="0.0833" stop-color="#7ec198"/><stop offset="0.0875" stop-color="#7dc098"/><stop offset="0.0917" stop-color="#7dc097"/><stop offset="0.0958" stop-color="#7fc296"/><stop offset="0.1" stop-color="#81c694"/><stop offset="0.1042" stop-color="#83c893"/><stop offset="0.1083" stop-color="#81c592"/><stop offset="0.1125" stop-color="#7cbf93"/><stop offset="0.1167" stop-color="#78b894"/><stop offset="0.1208" stop-color="#76b694"/><stop offset="0.125" stop-color="#79ba92"/><stop offset="0.1292" stop-color="#7fc28f"/><stop offset="0.1333" stop-color="#84c98d"/><stop offset="0.1375" stop-color="#85cb8b"/><stop offset="0.1417" stop-color="#83c78c"/><stop offset="0.1458" stop-color="#80c38c"/><stop offset="0.15" stop-color="#80c38c"/><stop offset="0.1542" stop-color="#83c88b"/><stop offset="0.1583" stop-color="#89cf89"/><stop offset="0.1625" stop-color="#8cd388"/><stop offset="0.1667" stop-color="#8bd188"/><stop offset="0.1708" stop-color="#86cb89"/><stop offset="0.175" stop-color="#81c48b"/><stop offset="0.1792" stop-color="#7fc08b"/><stop offset="0.1833" stop-color="#80c28a"/><stop offset="0.1875" stop-color="#84c789"/><stop offset="0.1917" stop-color="#86ca88"/><stop offset="0.1958" stop-color="#86ca88"/><stop offset="0.2" stop-color="#85c888"/><stop offset="0.2042" stop-color="#84c788"/><stop offset="0.2083" stop-color="#85c987"/><stop offset="0.2125" stop-color="#88cd86"/><stop offset="0.2167" stop-color="#8bd185"/><stop offset="0.2208" stop-color="#8cd285"/><stop offset="0.225" stop-color="#8ad086"/><stop offset="0.2292" stop-color="#88cc87"/><stop offset="0.2333" stop-color="#86ca88"/><stop offset="0.2375" stop-color="#86ca88"/><stop offset="0.2417" stop-color="#87cb88"/><stop offset="0.2458" stop-color="#87cb88"/><stop offset="0.25" stop-color="#85c989"/><stop offset="0.2542" stop-color="#82c58a"/><stop offset="0.2583" stop-color="#80c28b"/><stop offset="0.2625" stop-color="#80c28c"/><stop offset="0.2667" stop-color="#82c58b"/><stop offset="0.2708" stop-color="#85ca8a"/><stop offset="0.275" stop-color="#87cd8a"/><stop offset="0.2792" stop-color="#86cc8b"/><stop offset="0.2833" stop-color="#83c78c"/><stop offset="0.2875" stop-color="#7fc28e"/><stop offset="0.2917" stop-color="#7dc08e"/><stop offset="0.2958" stop-color="#7fc28e"/><stop offset="0.3" stop-color="#82c78d"/><stop offset="0.3042" stop-color="#84ca8d"/><stop offset="0.3083" stop-color="#83c88d"/><stop offset="0.3125" stop-color="#7fc38f"/><stop offset="0.3167" stop-color="#7bbd91"/><stop offset="0.3208" stop-color="#79ba91"/><stop offset="0.325" stop-color="#7bbe91"/><stop offset="0.3292" stop-color="#80c58f"/><stop offset="0.3333" stop-color="#85cb8e"/><stop offset="0.3375" stop-color="#85cc8e"/><stop offset="0.3417" stop-color="#82c78f"/><stop offset="0.3458" stop-color="#7dc091"/><stop offset="0.35" stop-color="#7abc92"/><stop offset="0.3542" stop-color="#7abd92"/><stop offset="0.3583" stop-color="#7dc192"/><stop offset="0.3625" stop-color="#80c591"/><stop offset="0.3667" stop-color="#80c591"/><stop offset="0.3708" stop-color="#7dc192"/><stop offset="0.375" stop-color="#79bb94"/><stop offset="0.3792" stop-color="#78ba94"/><stop offset="0.3833" stop-color="#7abc94"/><stop offset="0.3875" stop-color="#7dc193"/><stop offset="0.3917" stop-color="#80c592"/><stop offset="0.3958" stop-color="#80c692"/><stop offset="0.4" stop-color="#7ec393"/><stop offset="0.4042" stop-color="#7dc194"/><stop offset="0.4083" stop-color="#7dc194"/><stop offset="0.4125" stop-color="#7ec394"/><stop offset="0.4167" stop-color="#7ec394"/><stop offset="0.4208" stop-color="#7dc195"/><stop offset="0.425" stop-color="#79bc97"/><stop offset="0.4292" stop-color="#76b798"/><stop offset="0.4333" stop-color="#75b699"/><stop offset="0.4375" stop-color="#77b998"/><stop offset="0.4417" stop-color="#7abd97"/><stop offset="0.4458" stop-color="#7bbf97"/><stop offset="0.45" stop-color="#7bbe98"/><stop offset="0.4542" stop-color="#79bb99"/><stop offset="0.4583" stop-color="#78ba99"/><stop offset="0.4625" stop-color="#79bc99"/><stop offset="0.4667" stop-color="#7dc198"/><stop offset="0.4708" stop-color="#80c597"/><stop offset="0.475" stop-color="#80c598"/><stop offset="0.4792" stop-color="#7dc199"/><stop offset="0.4833" stop-color="#79bb9b"/><stop offset="0.4875" stop-color="#75b69c"/><stop offset="0.4917" stop-color="#74b49d"/><stop offset="0.4958" stop-color="#74b59d"/><stop offset="0.5" stop-color="#75b69d"/><stop offset="0.5042" stop-color="#75b69e"/><stop offset="0.5083" stop-color="#75b59f"/><stop offset="0.5125" stop-color="#74b4a0"/><stop offset="0.5167" stop-color="#74b4a0"/><stop offset="0.5208" stop-color="#74b4a1"/><stop offset="0.525" stop-color="#74b5a2"/><stop offset="0.5292" stop-color="#75b5a2"/><stop offset="0.5333" stop-color="#76b7a3"/><stop offset="0.5375" stop-color="#77b8a3"/><stop offset="0.5417" stop-color="#78b9a4"/><stop offset="0.5458" stop-color="#77b7a5"/><stop offset="0.55" stop-color="#72b1a7"/><stop offset="0.5542" stop-color="#6eaba8"/><stop offset="0.5583" stop-color="#6ba6a9"/><stop offset="0.5625" stop-color="#6ba6a9"/><stop offset="0.5667" stop-color="#6eaba7"/><stop offset="0.5708" stop-color="#72b1a6"/><stop offset="0.575" stop-color="#74b4a5"/><stop offset="0.5792" stop-color="#73b2a5"/><stop offset="0.5833" stop-color="#70aea5"/><stop offset="0.5875" stop-color="#6fada5"/><stop offset="0.5917" stop-color="#73b1a4"/><stop offset="0.5958" stop-color="#79bba1"/><stop offset="0.6" stop-color="#7fc29f"/><stop offset="0.6042" stop-color="#7ec2a0"/><stop offset="0.6083" stop-color="#79bba2"/><stop offset="0.6125" stop-color="#73b2a4"/><stop offset="0.6167" stop-color="#6fada6"/><stop offset="0.6208" stop-color="#70aea6"/><stop offset="0.625" stop-color="#72b1a6"/><stop offset="0.6292" stop-color="#72b1a6"/><stop offset="0.6333" stop-color="#6eaca7"/><stop offset="0.6375" stop-color="#69a5aa"/><stop offset="0.6417" stop-color="#67a2aa"/><stop offset="0.6458" stop-color="#69a5a9"/><stop offset="0.65" stop-color="#70aea7"/><stop offset="0.6542" stop-color="#75b6a5"/><stop offset="0.6583" stop-color="#76b7a4"/><stop offset="0.6625" stop-color="#72b2a5"/><stop offset="0.6667" stop-color="#6fada6"/><stop offset="0.6708" stop-color="#6fada6"/><stop offset="0.675" stop-color="#75b5a4"/><stop offset="0.6792" stop-color="#7bbda2"/><stop offset="0.6833" stop-color="#7cc0a1"/><stop offset="0.6875" stop-color="#78b9a2"/><stop offset="0.6917" stop-color="#70ada5"/><stop offset="0.6958" stop-color="#6ba6a6"/><stop offset="0.7" stop-color="#6da9a5"/><stop offset="0.7042" stop-color="#74b3a3"/><stop offset="0.7083" stop-color="#7bbda0"/><stop offset="0.7125" stop-color="#7cbfa0"/><stop offset="0.7167" stop-color="#77b8a2"/><stop offset="0.7208" stop-color="#70aea4"/><stop offset="0.725" stop-color="#6daaa5"/><stop offset="0.7292" stop-color="#70afa4"/><stop offset="0.7333" stop-color="#77b9a2"/><stop offset="0.7375" stop-color="#7cc0a0"/><stop offset="0.7417" stop-color="#7bbfa1"/><stop offset="0.7458" stop-color="#75b6a3"/><stop offset="0.75" stop-color="#6eaca5"/><stop offset="0.7542" stop-color="#6ca9a6"/><stop offset="0.7583" stop-color="#6eaca5"/><stop offset="0.7625" stop-color="#73b3a3"/><stop offset="0.7667" stop-color="#76b7a2"/><stop offset="0.7708" stop-color="#75b6a2"/><stop offset="0.775" stop-color="#72b2a3"/><stop offset="0.7792" stop-color="#71b0a3"/><stop offset="0.7833" stop-color="#73b3a2"/><stop offset="0.7875" stop-color="#77b8a0"/><stop offset="0.7917" stop-color="#79bb9f"/><stop offset="0.7958" stop-color="#78bb9f"/><stop offset="0.8" stop-color="#76b79f"/><stop offset="0.8042" stop-color="#74b49f"/><stop offset="0.8083" stop-color="#75b59f"/><stop offset="0.8125" stop-color="#78b99d"/><stop offset="0.8167" stop-color="#7abc9c"/><stop offset="0.8208" stop-color="#79bb9c"/><stop offset="0.825" stop-color="#77b79c"/><stop offset="0.8292" stop-color="#74b49d"/><stop offset="0.8333" stop-color="#75b59c"/><stop offset="0.8375" stop-color="#79bb9b"/><stop offset="0.8417" stop-color="#7dc199"/><stop offset="0.8458" stop-color="#7fc498"/><stop offset="0.85" stop-color="#7ec299"/><stop offset="0.8542" stop-color="#7bbd9a"/><stop offset="0.8583" stop-color="#79ba9a"/><stop offset="0.8625" stop-color="#79bb9a"/><stop offset="0.8667" stop-color="#7abc9a"/><stop offset="0.8708" stop-color="#7bbe99"/><stop offset="0.875" stop-color="#7abc9a"/><stop offset="0.8792" stop-color="#78ba9a"/><stop offset="0.8833" stop-color="#77b89b"/><stop offset="0.8875" stop-color="#78b99a"/><stop offset="0.8917" stop-color="#7abb9a"/><stop offset="0.8958" stop-color="#7abc99"/><stop offset="0.9" stop-color="#7abc99"/><stop offset="0.9042" stop-color="#7abb9a"/><stop offset="0.9083" stop-color="#7bbd99"/><stop offset="0.9125" stop-color="#7ec198"/><stop offset="0.9167" stop-color="#82c697"/><stop offset="0.9208" stop-color="#82c797"/><stop offset="0.925" stop-color="#7fc398"/><stop offset="0.9292" stop-color="#79bb9a"/><stop offset="0.9333" stop-color="#75b59b"/><stop offset="0.9375" stop-color="#75b59b"/><stop offset="0.9417" stop-color="#7abb99"/><stop offset="0.9458" stop-color="#7ec198"/><stop offset="0.95" stop-color="#7ec198"/><stop offset="0.9542" stop-color="#7abb99"/><stop offset="0.9583" stop-color="#75b49b"/><stop offset="0.9625" stop-color="#73b29b"/><stop offset="0.9667" stop-color="#77b79a"/><stop offset="0.9708" stop-color="#7fc297"/><stop offset="0.975" stop-color="#85cb95"/><stop offset="0.9792" stop-color="#86cc95"/><stop offset="0.9833" stop-color="#81c596"/><stop offset="0.9875" stop-color="#7bbd98"/><stop offset="0.9917" stop-color="#79b999"/><stop offset="0.9958" stop-color="#7abc99"/><stop offset="1.0" stop-color="#7ec197"/></linearGradient><linearGradient id="gb2" gradientUnits="userSpaceOnUse" x1="348.20" y1="382.50" x2="394.13" y2="601.15"><stop offset="0.0" stop-color="#7abd95"/><stop offset="0.0042" stop-color="#78bb95"/><stop offset="0.0083" stop-color="#78ba95"/><stop offset="0.0125" stop-color="#7abd95"/><stop offset="0.0167" stop-color="#7dc294"/><stop offset="0.0208" stop-color="#81c693"/><stop offset="0.025" stop-color="#82c892"/><stop offset="0.0292" stop-color="#80c693"/><stop offset="0.0333" stop-color="#7dc294"/><stop offset="0.0375" stop-color="#7bbf95"/><stop offset="0.0417" stop-color="#7bbe95"/><stop offset="0.0458" stop-color="#7bbf94"/><stop offset="0.05" stop-color="#7bbf95"/><stop offset="0.0542" stop-color="#79bc95"/><stop offset="0.0583" stop-color="#77b896"/><stop offset="0.0625" stop-color="#76b796"/><stop offset="0.0667" stop-color="#78bb96"/><stop offset="0.0708" stop-color="#7dc294"/><stop offset="0.075" stop-color="#82c893"/><stop offset="0.0792" stop-color="#83ca92"/><stop offset="0.0833" stop-color="#81c693"/><stop offset="0.0875" stop-color="#7cc094"/><stop offset="0.0917" stop-color="#79bb96"/><stop offset="0.0958" stop-color="#78bb96"/><stop offset="0.1" stop-color="#7abd95"/><stop offset="0.1042" stop-color="#7cc095"/><stop offset="0.1083" stop-color="#7cc095"/><stop offset="0.1125" stop-color="#7abd95"/><stop offset="0.1167" stop-color="#78ba96"/><stop offset="0.1208" stop-color="#78ba96"/><stop offset="0.125" stop-color="#7abe95"/><stop offset="0.1292" stop-color="#7ec394"/><stop offset="0.1333" stop-color="#81c693"/><stop offset="0.1375" stop-color="#80c594"/><stop offset="0.1417" stop-color="#7dc294"/><stop offset="0.1458" stop-color="#7bbe95"/><stop offset="0.15" stop-color="#79bc96"/><stop offset="0.1542" stop-color="#7abd96"/><stop offset="0.1583" stop-color="#7bbe95"/><stop offset="0.1625" stop-color="#7bbe96"/><stop offset="0.1667" stop-color="#7abc96"/><stop offset="0.1708" stop-color="#79bb96"/><stop offset="0.175" stop-color="#7abc96"/><stop offset="0.1792" stop-color="#7cc095"/><stop offset="0.1833" stop-color="#7fc494"/><stop offset="0.1875" stop-color="#7fc494"/><stop offset="0.1917" stop-color="#7cc095"/><stop offset="0.1958" stop-color="#78ba97"/><stop offset="0.2" stop-color="#76b797"/><stop offset="0.2042" stop-color="#77b997"/><stop offset="0.2083" stop-color="#7cbf95"/><stop offset="0.2125" stop-color="#80c694"/><stop offset="0.2167" stop-color="#82c893"/><stop offset="0.2208" stop-color="#80c594"/><stop offset="0.225" stop-color="#7bbe96"/><stop offset="0.2292" stop-color="#76b797"/><stop offset="0.2333" stop-color="#75b598"/><stop offset="0.2375" stop-color="#76b797"/><stop offset="0.2417" stop-color="#79bc97"/><stop offset="0.2458" stop-color="#7bbf96"/><stop offset="0.25" stop-color="#7cc096"/><stop offset="0.2542" stop-color="#7dc096"/><stop offset="0.2583" stop-color="#7dc195"/><stop offset="0.2625" stop-color="#7fc495"/><stop offset="0.2667" stop-color="#80c595"/><stop offset="0.2708" stop-color="#7ec395"/><stop offset="0.275" stop-color="#7bbe96"/><stop offset="0.2792" stop-color="#77b898"/><stop offset="0.2833" stop-color="#74b598"/><stop offset="0.2875" stop-color="#76b698"/><stop offset="0.2917" stop-color="#79bb97"/><stop offset="0.2958" stop-color="#7dc096"/><stop offset="0.3" stop-color="#7ec295"/><stop offset="0.3042" stop-color="#7cc096"/><stop offset="0.3083" stop-color="#7abd97"/><stop offset="0.3125" stop-color="#7abc97"/><stop offset="0.3167" stop-color="#7cbf96"/><stop offset="0.3208" stop-color="#7ec395"/><stop offset="0.325" stop-color="#7fc495"/><stop offset="0.3292" stop-color="#7dc196"/><stop offset="0.3333" stop-color="#7abc97"/><stop offset="0.3375" stop-color="#76b798"/><stop offset="0.3417" stop-color="#76b698"/><stop offset="0.3458" stop-color="#78b998"/><stop offset="0.35" stop-color="#7bbd97"/><stop offset="0.3542" stop-color="#7cbf96"/><stop offset="0.3583" stop-color="#7bbd97"/><stop offset="0.3625" stop-color="#79ba98"/><stop offset="0.3667" stop-color="#78ba98"/><stop offset="0.3708" stop-color="#7abd97"/><stop offset="0.375" stop-color="#7ec296"/><stop offset="0.3792" stop-color="#81c695"/><stop offset="0.3833" stop-color="#81c695"/><stop offset="0.3875" stop-color="#7ec196"/><stop offset="0.3917" stop-color="#79bb98"/><stop offset="0.3958" stop-color="#76b699"/><stop offset="0.4" stop-color="#74b499"/><stop offset="0.4042" stop-color="#75b599"/><stop offset="0.4083" stop-color="#76b799"/><stop offset="0.4125" stop-color="#78b998"/><stop offset="0.4167" stop-color="#79bb98"/><stop offset="0.4208" stop-color="#7cbf97"/><stop offset="0.425" stop-color="#80c595"/><stop offset="0.4292" stop-color="#84ca94"/><stop offset="0.4333" stop-color="#84ca94"/><stop offset="0.4375" stop-color="#7fc496"/><stop offset="0.4417" stop-color="#78b998"/><stop offset="0.4458" stop-color="#71af9b"/><stop offset="0.45" stop-color="#6fac9b"/><stop offset="0.4542" stop-color="#72b09a"/><stop offset="0.4583" stop-color="#78ba98"/><stop offset="0.4625" stop-color="#7fc396"/><stop offset="0.4667" stop-color="#81c695"/><stop offset="0.4708" stop-color="#80c496"/><stop offset="0.475" stop-color="#7dc097"/><stop offset="0.4792" stop-color="#7abc98"/><stop offset="0.4833" stop-color="#79bb98"/><stop offset="0.4875" stop-color="#79bb98"/><stop offset="0.4917" stop-color="#79bb98"/><stop offset="0.4958" stop-color="#78ba99"/><stop offset="0.5" stop-color="#78b999"/><stop offset="0.5042" stop-color="#79ba98"/><stop offset="0.5083" stop-color="#7bbd98"/><stop offset="0.5125" stop-color="#7dc197"/><stop offset="0.5167" stop-color="#7ec197"/><stop offset="0.5208" stop-color="#7bbe98"/><stop offset="0.525" stop-color="#77b899"/><stop offset="0.5292" stop-color="#74b49a"/><stop offset="0.5333" stop-color="#74b49a"/><stop offset="0.5375" stop-color="#78b999"/><stop offset="0.5417" stop-color="#7dc097"/><stop offset="0.5458" stop-color="#7fc497"/><stop offset="0.55" stop-color="#7fc397"/><stop offset="0.5542" stop-color="#7cbf98"/><stop offset="0.5583" stop-color="#79bb99"/><stop offset="0.5625" stop-color="#78ba99"/><stop offset="0.5667" stop-color="#79ba99"/><stop offset="0.5708" stop-color="#79bb99"/><stop offset="0.575" stop-color="#78b999"/><stop offset="0.5792" stop-color="#76b69a"/><stop offset="0.5833" stop-color="#74b49b"/><stop offset="0.5875" stop-color="#76b69a"/><stop offset="0.5917" stop-color="#7abd99"/><stop offset="0.5958" stop-color="#7fc397"/><stop offset="0.6" stop-color="#81c697"/><stop offset="0.6042" stop-color="#7fc497"/><stop offset="0.6083" stop-color="#7abd99"/><stop offset="0.6125" stop-color="#76b69b"/><stop offset="0.6167" stop-color="#74b39b"/><stop offset="0.6208" stop-color="#75b59b"/><stop offset="0.625" stop-color="#78ba9a"/><stop offset="0.6292" stop-color="#7bbe99"/><stop offset="0.6333" stop-color="#7bbe99"/><stop offset="0.6375" stop-color="#7abd99"/><stop offset="0.6417" stop-color="#79bb9a"/><stop offset="0.6458" stop-color="#79ba9a"/><stop offset="0.65" stop-color="#79bb9a"/><stop offset="0.6542" stop-color="#78ba9a"/><stop offset="0.6583" stop-color="#77b99a"/><stop offset="0.6625" stop-color="#76b79b"/><stop offset="0.6667" stop-color="#77b99a"/><stop offset="0.6708" stop-color="#7bbe99"/><stop offset="0.675" stop-color="#7fc498"/><stop offset="0.6792" stop-color="#82c797"/><stop offset="0.6833" stop-color="#80c498"/><stop offset="0.6875" stop-color="#79bb9a"/><stop offset="0.6917" stop-color="#71b09d"/><stop offset="0.6958" stop-color="#6ca99e"/><stop offset="0.7" stop-color="#6dab9e"/><stop offset="0.7042" stop-color="#74b39c"/><stop offset="0.7083" stop-color="#7bbf9a"/><stop offset="0.7125" stop-color="#81c798"/><stop offset="0.7167" stop-color="#83c997"/><stop offset="0.7208" stop-color="#81c798"/><stop offset="0.725" stop-color="#7ec299"/><stop offset="0.7292" stop-color="#7abd9a"/><stop offset="0.7333" stop-color="#77b89b"/><stop offset="0.7375" stop-color="#74b49c"/><stop offset="0.7417" stop-color="#71b09d"/><stop offset="0.7458" stop-color="#70ae9e"/><stop offset="0.75" stop-color="#71b09d"/><stop offset="0.7542" stop-color="#76b79c"/><stop offset="0.7583" stop-color="#7cc09a"/><stop offset="0.7625" stop-color="#81c798"/><stop offset="0.7667" stop-color="#82c898"/><stop offset="0.7708" stop-color="#7ec399"/><stop offset="0.775" stop-color="#79bb9b"/><stop offset="0.7792" stop-color="#75b69c"/><stop offset="0.7833" stop-color="#74b49d"/><stop offset="0.7875" stop-color="#75b69c"/><stop offset="0.7917" stop-color="#77b99c"/><stop offset="0.7958" stop-color="#78ba9c"/><stop offset="0.8" stop-color="#77b89c"/><stop offset="0.8042" stop-color="#76b89c"/><stop offset="0.8083" stop-color="#77b99c"/><stop offset="0.8125" stop-color="#7abc9b"/><stop offset="0.8167" stop-color="#7cbf9a"/><stop offset="0.8208" stop-color="#7bbe9b"/><stop offset="0.825" stop-color="#78ba9c"/><stop offset="0.8292" stop-color="#75b69d"/><stop offset="0.8333" stop-color="#74b49d"/><stop offset="0.8375" stop-color="#76b89c"/><stop offset="0.8417" stop-color="#7bbe9b"/><stop offset="0.8458" stop-color="#7ec39a"/><stop offset="0.85" stop-color="#7ec39a"/><stop offset="0.8542" stop-color="#7abc9c"/><stop offset="0.8583" stop-color="#74b49e"/><stop offset="0.8625" stop-color="#70aea0"/><stop offset="0.8667" stop-color="#6fada1"/><stop offset="0.8708" stop-color="#72b1a0"/><stop offset="0.875" stop-color="#76b6a0"/><stop offset="0.8792" stop-color="#78ba9f"/><stop offset="0.8833" stop-color="#79bb9f"/><stop offset="0.8875" stop-color="#7abca0"/><stop offset="0.8917" stop-color="#7abba0"/><stop offset="0.8958" stop-color="#79baa1"/><stop offset="0.9" stop-color="#76b6a2"/><stop offset="0.9042" stop-color="#71b0a4"/><stop offset="0.9083" stop-color="#6ca8a7"/><stop offset="0.9125" stop-color="#69a4a8"/><stop offset="0.9167" stop-color="#6ba6a8"/><stop offset="0.9208" stop-color="#71aea6"/><stop offset="0.925" stop-color="#79b9a2"/><stop offset="0.9292" stop-color="#7ec0a0"/><stop offset="0.9333" stop-color="#7dc09f"/><stop offset="0.9375" stop-color="#79ba9f"/><stop offset="0.9417" stop-color="#74b2a0"/><stop offset="0.9458" stop-color="#72af9f"/><stop offset="0.95" stop-color="#74b29d"/><stop offset="0.9542" stop-color="#79b99b"/><stop offset="0.9583" stop-color="#7ec098"/><stop offset="0.9625" stop-color="#80c497"/><stop offset="0.9667" stop-color="#7fc397"/><stop offset="0.9708" stop-color="#7ec198"/><stop offset="0.975" stop-color="#7dbf98"/><stop offset="0.9792" stop-color="#7cbe99"/><stop offset="0.9833" stop-color="#7abc99"/><stop offset="0.9875" stop-color="#77b89b"/><stop offset="0.9917" stop-color="#74b49c"/><stop offset="0.9958" stop-color="#73b29c"/><stop offset="1.0" stop-color="#76b69b"/></linearGradient><linearGradient id="gm2" gradientUnits="userSpaceOnUse" x1="348.20" y1="382.50" x2="393.44" y2="162.72"><stop offset="0" stop-color="#fff" stop-opacity="0"/><stop offset="1" stop-color="#fff" stop-opacity="1"/></linearGradient><mask id="mk2" maskUnits="userSpaceOnUse" x="300" y="200" width="1200" height="400"><polygon points="348.2,382.5 899.0,266.8 1449.4,381.7 897.1,495.5" fill="url(#gm2)"/></mask><linearGradient id="ga1" gradientUnits="userSpaceOnUse" x1="346.60" y1="357.10" x2="393.02" y2="577.95"><stop offset="0.0" stop-color="#7ec393"/><stop offset="0.0042" stop-color="#7fc493"/><stop offset="0.0083" stop-color="#7dc294"/><stop offset="0.0125" stop-color="#7bbf95"/><stop offset="0.0167" stop-color="#7bbe95"/><stop offset="0.0208" stop-color="#7dc195"/><stop offset="0.025" stop-color="#80c594"/><stop offset="0.0292" stop-color="#81c794"/><stop offset="0.0333" stop-color="#80c594"/><stop offset="0.0375" stop-color="#7dc095"/><stop offset="0.0417" stop-color="#7abc97"/><stop offset="0.0458" stop-color="#78b997"/><stop offset="0.05" stop-color="#77b898"/><stop offset="0.0542" stop-color="#75b698"/><stop offset="0.0583" stop-color="#74b499"/><stop offset="0.0625" stop-color="#74b499"/><stop offset="0.0667" stop-color="#77b898"/><stop offset="0.0708" stop-color="#7cbf97"/><stop offset="0.075" stop-color="#81c696"/><stop offset="0.0792" stop-color="#83c995"/><stop offset="0.0833" stop-color="#80c596"/><stop offset="0.0875" stop-color="#7bbe99"/><stop offset="0.0917" stop-color="#76b79b"/><stop offset="0.0958" stop-color="#73b49d"/><stop offset="0.1" stop-color="#74b49d"/><stop offset="0.1042" stop-color="#74b59e"/><stop offset="0.1083" stop-color="#73b49f"/><stop offset="0.1125" stop-color="#70afa1"/><stop offset="0.1167" stop-color="#6caaa3"/><stop offset="0.1208" stop-color="#6ba9a3"/><stop offset="0.125" stop-color="#6faea2"/><stop offset="0.1292" stop-color="#75b59f"/><stop offset="0.1333" stop-color="#79bb9d"/><stop offset="0.1375" stop-color="#7bbc9c"/><stop offset="0.1417" stop-color="#7abb9c"/><stop offset="0.1458" stop-color="#7aba9b"/><stop offset="0.15" stop-color="#7bbb9a"/><stop offset="0.1542" stop-color="#7bbb9b"/><stop offset="0.1583" stop-color="#7abb9c"/><stop offset="0.1625" stop-color="#78b99d"/><stop offset="0.1667" stop-color="#75b59f"/><stop offset="0.1708" stop-color="#72b2a1"/><stop offset="0.175" stop-color="#70afa3"/><stop offset="0.1792" stop-color="#6eaea4"/><stop offset="0.1833" stop-color="#6eaea4"/><stop offset="0.1875" stop-color="#6eaca4"/><stop offset="0.1917" stop-color="#6daaa4"/><stop offset="0.1958" stop-color="#6daaa4"/><stop offset="0.2" stop-color="#71afa3"/><stop offset="0.2042" stop-color="#77b7a1"/><stop offset="0.2083" stop-color="#7dbf9f"/><stop offset="0.2125" stop-color="#80c29e"/><stop offset="0.2167" stop-color="#7fbf9e"/><stop offset="0.2208" stop-color="#7ab9a0"/><stop offset="0.225" stop-color="#75b2a2"/><stop offset="0.2292" stop-color="#73afa3"/><stop offset="0.2333" stop-color="#73b0a4"/><stop offset="0.2375" stop-color="#73b1a4"/><stop offset="0.2417" stop-color="#72b0a4"/><stop offset="0.2458" stop-color="#6fada6"/><stop offset="0.25" stop-color="#6daaa7"/><stop offset="0.2542" stop-color="#6ca9a7"/><stop offset="0.2583" stop-color="#6daca7"/><stop offset="0.2625" stop-color="#70afa6"/><stop offset="0.2667" stop-color="#72b2a5"/><stop offset="0.2708" stop-color="#72b1a5"/><stop offset="0.275" stop-color="#71afa5"/><stop offset="0.2792" stop-color="#71aea5"/><stop offset="0.2833" stop-color="#72b0a4"/><stop offset="0.2875" stop-color="#74b2a3"/><stop offset="0.2917" stop-color="#75b3a2"/><stop offset="0.2958" stop-color="#75b3a1"/><stop offset="0.3" stop-color="#76b3a1"/><stop offset="0.3042" stop-color="#75b2a2"/><stop offset="0.3083" stop-color="#76b4a2"/><stop offset="0.3125" stop-color="#77b6a2"/><stop offset="0.3167" stop-color="#76b4a3"/><stop offset="0.3208" stop-color="#72afa5"/><stop offset="0.325" stop-color="#6da9a7"/><stop offset="0.3292" stop-color="#6aa5a9"/><stop offset="0.3333" stop-color="#6ba6a9"/><stop offset="0.3375" stop-color="#6faba9"/><stop offset="0.3417" stop-color="#72b0a8"/><stop offset="0.3458" stop-color="#72b1a8"/><stop offset="0.35" stop-color="#6faca9"/><stop offset="0.3542" stop-color="#6aa6ab"/><stop offset="0.3583" stop-color="#67a2ac"/><stop offset="0.3625" stop-color="#67a2ac"/><stop offset="0.3667" stop-color="#68a3ac"/><stop offset="0.3708" stop-color="#6aa5ab"/><stop offset="0.375" stop-color="#6aa6ab"/><stop offset="0.3792" stop-color="#6aa6ac"/><stop offset="0.3833" stop-color="#6aa6ab"/><stop offset="0.3875" stop-color="#6ca9ab"/><stop offset="0.3917" stop-color="#6eacaa"/><stop offset="0.3958" stop-color="#6fadaa"/><stop offset="0.4" stop-color="#6eabab"/><stop offset="0.4042" stop-color="#6ba8ab"/><stop offset="0.4083" stop-color="#6aa5ab"/><stop offset="0.4125" stop-color="#6aa5ab"/><stop offset="0.4167" stop-color="#6ba7aa"/><stop offset="0.4208" stop-color="#6ca8a9"/><stop offset="0.425" stop-color="#6ca8a9"/><stop offset="0.4292" stop-color="#6ba6a9"/><stop offset="0.4333" stop-color="#6ba7a8"/><stop offset="0.4375" stop-color="#6eaba7"/><stop offset="0.4417" stop-color="#73b2a4"/><stop offset="0.4458" stop-color="#77b8a3"/><stop offset="0.45" stop-color="#78b9a2"/><stop offset="0.4542" stop-color="#76b5a2"/><stop offset="0.4583" stop-color="#72b0a3"/><stop offset="0.4625" stop-color="#70ada2"/><stop offset="0.4667" stop-color="#72b0a1"/><stop offset="0.4708" stop-color="#76b69f"/><stop offset="0.475" stop-color="#79ba9d"/><stop offset="0.4792" stop-color="#79bb9c"/><stop offset="0.4833" stop-color="#77b89c"/><stop offset="0.4875" stop-color="#75b59c"/><stop offset="0.4917" stop-color="#74b39c"/><stop offset="0.4958" stop-color="#75b59b"/><stop offset="0.5" stop-color="#77b899"/><stop offset="0.5042" stop-color="#78ba98"/><stop offset="0.5083" stop-color="#7abc97"/><stop offset="0.5125" stop-color="#7bbf96"/><stop offset="0.5167" stop-color="#7ec294"/><stop offset="0.5208" stop-color="#81c792"/><stop offset="0.525" stop-color="#83ca91"/><stop offset="0.5292" stop-color="#83c991"/><stop offset="0.5333" stop-color="#80c591"/><stop offset="0.5375" stop-color="#7cc092"/><stop offset="0.5417" stop-color="#7bbd92"/><stop offset="0.5458" stop-color="#7bbe91"/><stop offset="0.55" stop-color="#7dc090"/><stop offset="0.5542" stop-color="#7ec18f"/><stop offset="0.5583" stop-color="#7dc08e"/><stop offset="0.5625" stop-color="#7cbe8e"/><stop offset="0.5667" stop-color="#7ec08d"/><stop offset="0.5708" stop-color="#82c58b"/><stop offset="0.575" stop-color="#87cd89"/><stop offset="0.5792" stop-color="#8cd387"/><stop offset="0.5833" stop-color="#8cd386"/><stop offset="0.5875" stop-color="#89cf87"/><stop offset="0.5917" stop-color="#85c888"/><stop offset="0.5958" stop-color="#82c588"/><stop offset="0.6" stop-color="#83c687"/><stop offset="0.6042" stop-color="#85c986"/><stop offset="0.6083" stop-color="#87cb85"/><stop offset="0.6125" stop-color="#87cb85"/><stop offset="0.6167" stop-color="#85c986"/><stop offset="0.6208" stop-color="#84c786"/><stop offset="0.625" stop-color="#85c786"/><stop offset="0.6292" stop-color="#86c985"/><stop offset="0.6333" stop-color="#87ca84"/><stop offset="0.6375" stop-color="#87ca84"/><stop offset="0.6417" stop-color="#87cb84"/><stop offset="0.6458" stop-color="#89cd83"/><stop offset="0.65" stop-color="#8dd282"/><stop offset="0.6542" stop-color="#90d781"/><stop offset="0.6583" stop-color="#91d980"/><stop offset="0.6625" stop-color="#8fd581"/><stop offset="0.6667" stop-color="#8acf82"/><stop offset="0.6708" stop-color="#86c884"/><stop offset="0.675" stop-color="#82c388"/><stop offset="0.6792" stop-color="#81c28b"/><stop offset="0.6833" stop-color="#81c28e"/><stop offset="0.6875" stop-color="#7fc091"/><stop offset="0.6917" stop-color="#7cbb95"/><stop offset="0.6958" stop-color="#79b798"/><stop offset="0.7" stop-color="#78b69b"/><stop offset="0.7042" stop-color="#7ab99d"/><stop offset="0.7083" stop-color="#7dbe9f"/><stop offset="0.7125" stop-color="#7fbfa1"/><stop offset="0.7167" stop-color="#7cbca5"/><stop offset="0.7208" stop-color="#76b4a9"/><stop offset="0.725" stop-color="#72aeaa"/><stop offset="0.7292" stop-color="#6fa9ac"/><stop offset="0.7333" stop-color="#6ea8ac"/><stop offset="0.7375" stop-color="#6ea9ac"/><stop offset="0.7417" stop-color="#6ea8ac"/><stop offset="0.7458" stop-color="#6da7ad"/><stop offset="0.75" stop-color="#6da7ad"/><stop offset="0.7542" stop-color="#6da8ad"/><stop offset="0.7583" stop-color="#6faaad"/><stop offset="0.7625" stop-color="#70abad"/><stop offset="0.7667" stop-color="#6faaad"/><stop offset="0.7708" stop-color="#6da7ae"/><stop offset="0.775" stop-color="#6ca6af"/><stop offset="0.7792" stop-color="#6da8ae"/><stop offset="0.7833" stop-color="#71adad"/><stop offset="0.7875" stop-color="#74b2ad"/><stop offset="0.7917" stop-color="#75b2ad"/><stop offset="0.7958" stop-color="#71adae"/><stop offset="0.8" stop-color="#6ba5b0"/><stop offset="0.8042" stop-color="#67a2b1"/><stop offset="0.8083" stop-color="#67a2b1"/><stop offset="0.8125" stop-color="#69a2b0"/><stop offset="0.8167" stop-color="#6ba5af"/><stop offset="0.8208" stop-color="#6ca6af"/><stop offset="0.825" stop-color="#6ba5af"/><stop offset="0.8292" stop-color="#6ba5ae"/><stop offset="0.8333" stop-color="#6da8ad"/><stop offset="0.8375" stop-color="#72aeac"/><stop offset="0.8417" stop-color="#76b4aa"/><stop offset="0.8458" stop-color="#79b7a9"/><stop offset="0.85" stop-color="#78b6a9"/><stop offset="0.8542" stop-color="#75b2a9"/><stop offset="0.8583" stop-color="#72aeaa"/><stop offset="0.8625" stop-color="#70abab"/><stop offset="0.8667" stop-color="#6fa9ac"/><stop offset="0.8708" stop-color="#6da8ad"/><stop offset="0.875" stop-color="#6ca6ad"/><stop offset="0.8792" stop-color="#6ba4ae"/><stop offset="0.8833" stop-color="#6ca5ae"/><stop offset="0.8875" stop-color="#6ea9ae"/><stop offset="0.8917" stop-color="#70acad"/><stop offset="0.8958" stop-color="#71adae"/><stop offset="0.9" stop-color="#6eaaaf"/><stop offset="0.9042" stop-color="#6ba5b0"/><stop offset="0.9083" stop-color="#69a2b1"/><stop offset="0.9125" stop-color="#6aa3b1"/><stop offset="0.9167" stop-color="#6da8b1"/><stop offset="0.9208" stop-color="#70adb0"/><stop offset="0.925" stop-color="#71aeaf"/><stop offset="0.9292" stop-color="#6eaab0"/><stop offset="0.9333" stop-color="#6aa4b1"/><stop offset="0.9375" stop-color="#67a2b2"/><stop offset="0.9417" stop-color="#67a2b2"/><stop offset="0.9458" stop-color="#69a2b1"/><stop offset="0.95" stop-color="#6aa4b0"/><stop offset="0.9542" stop-color="#6ba5b0"/><stop offset="0.9583" stop-color="#6aa4b0"/><stop offset="0.9625" stop-color="#6ba5b0"/><stop offset="0.9667" stop-color="#6da8af"/><stop offset="0.9708" stop-color="#71adad"/><stop offset="0.975" stop-color="#73b1ac"/><stop offset="0.9792" stop-color="#74b2ac"/><stop offset="0.9833" stop-color="#73b0ac"/><stop offset="0.9875" stop-color="#70adac"/><stop offset="0.9917" stop-color="#6fabad"/><stop offset="0.9958" stop-color="#6fabad"/><stop offset="1.0" stop-color="#6faaac"/></linearGradient><linearGradient id="gb1" gradientUnits="userSpaceOnUse" x1="346.60" y1="357.10" x2="393.02" y2="577.95"><stop offset="0.0" stop-color="#81c892"/><stop offset="0.0042" stop-color="#81c792"/><stop offset="0.0083" stop-color="#7dc294"/><stop offset="0.0125" stop-color="#78ba96"/><stop offset="0.0167" stop-color="#74b597"/><stop offset="0.0208" stop-color="#76b796"/><stop offset="0.025" stop-color="#7bbf94"/><stop offset="0.0292" stop-color="#81c892"/><stop offset="0.0333" stop-color="#84cc91"/><stop offset="0.0375" stop-color="#82c992"/><stop offset="0.0417" stop-color="#7ec294"/><stop offset="0.0458" stop-color="#79bc95"/><stop offset="0.05" stop-color="#77b996"/><stop offset="0.0542" stop-color="#78bb96"/><stop offset="0.0583" stop-color="#7abe95"/><stop offset="0.0625" stop-color="#7cbf95"/><stop offset="0.0667" stop-color="#7cc094"/><stop offset="0.0708" stop-color="#7cc094"/><stop offset="0.075" stop-color="#7cc094"/><stop offset="0.0792" stop-color="#7cc094"/><stop offset="0.0833" stop-color="#7bbe95"/><stop offset="0.0875" stop-color="#78bb96"/><stop offset="0.0917" stop-color="#76b896"/><stop offset="0.0958" stop-color="#78ba96"/><stop offset="0.1" stop-color="#7dc194"/><stop offset="0.1042" stop-color="#84cb92"/><stop offset="0.1083" stop-color="#88d191"/><stop offset="0.1125" stop-color="#87cf91"/><stop offset="0.1167" stop-color="#7fc594"/><stop offset="0.1208" stop-color="#76b897"/><stop offset="0.125" stop-color="#70ae99"/><stop offset="0.1292" stop-color="#6fad99"/><stop offset="0.1333" stop-color="#73b398"/><stop offset="0.1375" stop-color="#79bb96"/><stop offset="0.1417" stop-color="#7dc294"/><stop offset="0.1458" stop-color="#7fc494"/><stop offset="0.15" stop-color="#80c594"/><stop offset="0.1542" stop-color="#80c594"/><stop offset="0.1583" stop-color="#80c594"/><stop offset="0.1625" stop-color="#7fc394"/><stop offset="0.1667" stop-color="#7cc095"/><stop offset="0.1708" stop-color="#7abd96"/><stop offset="0.175" stop-color="#7abc96"/><stop offset="0.1792" stop-color="#7bbf95"/><stop offset="0.1833" stop-color="#7ec295"/><stop offset="0.1875" stop-color="#7ec295"/><stop offset="0.1917" stop-color="#7bbe96"/><stop offset="0.1958" stop-color="#76b697"/><stop offset="0.2" stop-color="#71b099"/><stop offset="0.2042" stop-color="#71b199"/><stop offset="0.2083" stop-color="#77b897"/><stop offset="0.2125" stop-color="#7fc494"/><stop offset="0.2167" stop-color="#85cc93"/><stop offset="0.2208" stop-color="#86ce92"/><stop offset="0.225" stop-color="#83c993"/><stop offset="0.2292" stop-color="#7dc195"/><stop offset="0.2333" stop-color="#79bc96"/><stop offset="0.2375" stop-color="#78b997"/><stop offset="0.2417" stop-color="#77b997"/><stop offset="0.2458" stop-color="#77b997"/><stop offset="0.25" stop-color="#77b997"/><stop offset="0.2542" stop-color="#78ba97"/><stop offset="0.2583" stop-color="#7bbd96"/><stop offset="0.2625" stop-color="#7dc195"/><stop offset="0.2667" stop-color="#7fc395"/><stop offset="0.2708" stop-color="#7dc195"/><stop offset="0.275" stop-color="#7abc97"/><stop offset="0.2792" stop-color="#77b898"/><stop offset="0.2833" stop-color="#77b898"/><stop offset="0.2875" stop-color="#7abd97"/><stop offset="0.2917" stop-color="#7ec395"/><stop offset="0.2958" stop-color="#80c595"/><stop offset="0.3" stop-color="#7fc395"/><stop offset="0.3042" stop-color="#7bbe96"/><stop offset="0.3083" stop-color="#78b997"/><stop offset="0.3125" stop-color="#78b998"/><stop offset="0.3167" stop-color="#7abd97"/><stop offset="0.3208" stop-color="#7dc096"/><stop offset="0.325" stop-color="#7dc196"/><stop offset="0.3292" stop-color="#7bbe96"/><stop offset="0.3333" stop-color="#79ba97"/><stop offset="0.3375" stop-color="#78b998"/><stop offset="0.3417" stop-color="#79ba97"/><stop offset="0.3458" stop-color="#7abd97"/><stop offset="0.35" stop-color="#7abd97"/><stop offset="0.3542" stop-color="#79bc97"/><stop offset="0.3583" stop-color="#78ba98"/><stop offset="0.3625" stop-color="#79bc97"/><stop offset="0.3667" stop-color="#7dc096"/><stop offset="0.3708" stop-color="#80c595"/><stop offset="0.375" stop-color="#81c795"/><stop offset="0.3792" stop-color="#7fc495"/><stop offset="0.3833" stop-color="#7bbe97"/><stop offset="0.3875" stop-color="#78b998"/><stop offset="0.3917" stop-color="#77b798"/><stop offset="0.3958" stop-color="#77b898"/><stop offset="0.4" stop-color="#78b998"/><stop offset="0.4042" stop-color="#77b898"/><stop offset="0.4083" stop-color="#75b599"/><stop offset="0.4125" stop-color="#75b599"/><stop offset="0.4167" stop-color="#78b998"/><stop offset="0.4208" stop-color="#7dc196"/><stop offset="0.425" stop-color="#82c895"/><stop offset="0.4292" stop-color="#84ca94"/><stop offset="0.4333" stop-color="#81c695"/><stop offset="0.4375" stop-color="#7dc097"/><stop offset="0.4417" stop-color="#79ba98"/><stop offset="0.4458" stop-color="#78b998"/><stop offset="0.45" stop-color="#78b998"/><stop offset="0.4542" stop-color="#79ba98"/><stop offset="0.4583" stop-color="#78b999"/><stop offset="0.4625" stop-color="#76b699"/><stop offset="0.4667" stop-color="#75b599"/><stop offset="0.4708" stop-color="#76b799"/><stop offset="0.475" stop-color="#7abc98"/><stop offset="0.4792" stop-color="#7cbf97"/><stop offset="0.4833" stop-color="#7dc197"/><stop offset="0.4875" stop-color="#7dc097"/><stop offset="0.4917" stop-color="#7cbf97"/><stop offset="0.4958" stop-color="#7dc097"/><stop offset="0.5" stop-color="#7fc396"/><stop offset="0.5042" stop-color="#7fc496"/><stop offset="0.5083" stop-color="#7dc097"/><stop offset="0.5125" stop-color="#77b899"/><stop offset="0.5167" stop-color="#72b19b"/><stop offset="0.5208" stop-color="#70ae9c"/><stop offset="0.525" stop-color="#73b29b"/><stop offset="0.5292" stop-color="#79ba99"/><stop offset="0.5333" stop-color="#7dc098"/><stop offset="0.5375" stop-color="#7ec298"/><stop offset="0.5417" stop-color="#7cbf98"/><stop offset="0.5458" stop-color="#7abc99"/><stop offset="0.55" stop-color="#78ba9a"/><stop offset="0.5542" stop-color="#79ba9a"/><stop offset="0.5583" stop-color="#7abc9a"/><stop offset="0.5625" stop-color="#79bb9a"/><stop offset="0.5667" stop-color="#78b99a"/><stop offset="0.5708" stop-color="#77b89b"/><stop offset="0.575" stop-color="#78b99b"/><stop offset="0.5792" stop-color="#7abc9a"/><stop offset="0.5833" stop-color="#7bbe9a"/><stop offset="0.5875" stop-color="#7abc9a"/><stop offset="0.5917" stop-color="#77b89b"/><stop offset="0.5958" stop-color="#74b49d"/><stop offset="0.6" stop-color="#73b39d"/><stop offset="0.6042" stop-color="#76b79c"/><stop offset="0.6083" stop-color="#7abc9b"/><stop offset="0.6125" stop-color="#7bbe9b"/><stop offset="0.6167" stop-color="#79bb9b"/><stop offset="0.6208" stop-color="#76b69d"/><stop offset="0.625" stop-color="#73b39e"/><stop offset="0.6292" stop-color="#74b49d"/><stop offset="0.6333" stop-color="#78ba9c"/><stop offset="0.6375" stop-color="#7cbf9b"/><stop offset="0.6417" stop-color="#7dc19b"/><stop offset="0.6458" stop-color="#7bbe9b"/><stop offset="0.65" stop-color="#78ba9d"/><stop offset="0.6542" stop-color="#76b79d"/><stop offset="0.6583" stop-color="#75b69e"/><stop offset="0.6625" stop-color="#75b59e"/><stop offset="0.6667" stop-color="#74b49e"/><stop offset="0.6708" stop-color="#72b19f"/><stop offset="0.675" stop-color="#70afa0"/><stop offset="0.6792" stop-color="#71b0a0"/><stop offset="0.6833" stop-color="#75b59f"/><stop offset="0.6875" stop-color="#79bc9d"/><stop offset="0.6917" stop-color="#7cbf9c"/><stop offset="0.6958" stop-color="#7cbf9d"/><stop offset="0.7" stop-color="#79bb9e"/><stop offset="0.7042" stop-color="#78b99e"/><stop offset="0.7083" stop-color="#78b99e"/><stop offset="0.7125" stop-color="#79bb9e"/><stop offset="0.7167" stop-color="#79bb9e"/><stop offset="0.7208" stop-color="#75b69f"/><stop offset="0.725" stop-color="#70aea1"/><stop offset="0.7292" stop-color="#6ca9a3"/><stop offset="0.7333" stop-color="#6ca8a3"/><stop offset="0.7375" stop-color="#70aea2"/><stop offset="0.7417" stop-color="#76b6a0"/><stop offset="0.7458" stop-color="#7abc9f"/><stop offset="0.75" stop-color="#7bbd9e"/><stop offset="0.7542" stop-color="#79bb9f"/><stop offset="0.7583" stop-color="#77b9a0"/><stop offset="0.7625" stop-color="#77b8a0"/><stop offset="0.7667" stop-color="#78b9a0"/><stop offset="0.7708" stop-color="#77b8a0"/><stop offset="0.775" stop-color="#75b6a1"/><stop offset="0.7792" stop-color="#72b2a2"/><stop offset="0.7833" stop-color="#71afa3"/><stop offset="0.7875" stop-color="#71b0a3"/><stop offset="0.7917" stop-color="#72b2a2"/><stop offset="0.7958" stop-color="#73b3a2"/><stop offset="0.8" stop-color="#72b1a3"/><stop offset="0.8042" stop-color="#71afa3"/><stop offset="0.8083" stop-color="#71b0a2"/><stop offset="0.8125" stop-color="#74b5a0"/><stop offset="0.8167" stop-color="#7abd9e"/><stop offset="0.8208" stop-color="#7fc49b"/><stop offset="0.825" stop-color="#7fc49b"/><stop offset="0.8292" stop-color="#7bbe9c"/><stop offset="0.8333" stop-color="#75b59d"/><stop offset="0.8375" stop-color="#71b09e"/><stop offset="0.8417" stop-color="#71b09d"/><stop offset="0.8458" stop-color="#75b69b"/><stop offset="0.85" stop-color="#7abd99"/><stop offset="0.8542" stop-color="#7dc197"/><stop offset="0.8583" stop-color="#7dc297"/><stop offset="0.8625" stop-color="#7cc096"/><stop offset="0.8667" stop-color="#7bbf96"/><stop offset="0.8708" stop-color="#7abe96"/><stop offset="0.875" stop-color="#7abc96"/><stop offset="0.8792" stop-color="#78bb95"/><stop offset="0.8833" stop-color="#78ba95"/><stop offset="0.8875" stop-color="#79bc94"/><stop offset="0.8917" stop-color="#7ec292"/><stop offset="0.8958" stop-color="#84ca8f"/><stop offset="0.9" stop-color="#87cf8d"/><stop offset="0.9042" stop-color="#87cd8d"/><stop offset="0.9083" stop-color="#82c78e"/><stop offset="0.9125" stop-color="#7dc08f"/><stop offset="0.9167" stop-color="#7cbd8f"/><stop offset="0.9208" stop-color="#7fc18d"/><stop offset="0.925" stop-color="#84c98b"/><stop offset="0.9292" stop-color="#89cf89"/><stop offset="0.9333" stop-color="#87cd8a"/><stop offset="0.9375" stop-color="#82c68d"/><stop offset="0.9417" stop-color="#7cbe91"/><stop offset="0.9458" stop-color="#78b893"/><stop offset="0.95" stop-color="#78b895"/><stop offset="0.9542" stop-color="#79bb96"/><stop offset="0.9583" stop-color="#7cbe97"/><stop offset="0.9625" stop-color="#7dc198"/><stop offset="0.9667" stop-color="#7fc499"/><stop offset="0.9708" stop-color="#80c699"/><stop offset="0.975" stop-color="#82c997"/><stop offset="0.9792" stop-color="#82c796"/><stop offset="0.9833" stop-color="#7dc196"/><stop offset="0.9875" stop-color="#77b897"/><stop offset="0.9917" stop-color="#73b197"/><stop offset="0.9958" stop-color="#73b296"/><stop offset="1.0" stop-color="#79ba92"/></linearGradient><linearGradient id="gm1" gradientUnits="userSpaceOnUse" x1="346.60" y1="357.10" x2="392.88" y2="135.36"><stop offset="0" stop-color="#fff" stop-opacity="0"/><stop offset="1" stop-color="#fff" stop-opacity="1"/></linearGradient><mask id="mk1" maskUnits="userSpaceOnUse" x="300" y="200" width="1200" height="400"><polygon points="346.6,357.1 899.0,241.0 1449.4,355.6 897.1,472.0" fill="url(#gm1)"/></mask><linearGradient id="ga0" gradientUnits="userSpaceOnUse" x1="346.60" y1="329.40" x2="391.80" y2="548.06"><stop offset="0.0" stop-color="#79bc95"/><stop offset="0.0042" stop-color="#7bbf94"/><stop offset="0.0083" stop-color="#7cc094"/><stop offset="0.0125" stop-color="#7bbf94"/><stop offset="0.0167" stop-color="#7abd94"/><stop offset="0.0208" stop-color="#7abe94"/><stop offset="0.025" stop-color="#7dc193"/><stop offset="0.0292" stop-color="#80c792"/><stop offset="0.0333" stop-color="#84cc91"/><stop offset="0.0375" stop-color="#86cf90"/><stop offset="0.0417" stop-color="#85ce90"/><stop offset="0.0458" stop-color="#83ca91"/><stop offset="0.05" stop-color="#80c692"/><stop offset="0.0542" stop-color="#7dc392"/><stop offset="0.0583" stop-color="#7dc293"/><stop offset="0.0625" stop-color="#7ec391"/><stop offset="0.0667" stop-color="#7fc490"/><stop offset="0.0708" stop-color="#7fc38f"/><stop offset="0.075" stop-color="#7dc18e"/><stop offset="0.0792" stop-color="#7cbe8e"/><stop offset="0.0833" stop-color="#7cbe8c"/><stop offset="0.0875" stop-color="#7fc18a"/><stop offset="0.0917" stop-color="#83c788"/><stop offset="0.0958" stop-color="#89ce85"/><stop offset="0.1" stop-color="#8dd382"/><stop offset="0.1042" stop-color="#8ed581"/><stop offset="0.1083" stop-color="#8dd382"/><stop offset="0.1125" stop-color="#8acf82"/><stop offset="0.1167" stop-color="#89cc82"/><stop offset="0.1208" stop-color="#89cd82"/><stop offset="0.125" stop-color="#8bcf80"/><stop offset="0.1292" stop-color="#8dd37f"/><stop offset="0.1333" stop-color="#8fd47e"/><stop offset="0.1375" stop-color="#8dd27f"/><stop offset="0.1417" stop-color="#8acd7f"/><stop offset="0.1458" stop-color="#87c980"/><stop offset="0.15" stop-color="#87c87f"/><stop offset="0.1542" stop-color="#89cc7e"/><stop offset="0.1583" stop-color="#8fd37c"/><stop offset="0.1625" stop-color="#93d97b"/><stop offset="0.1667" stop-color="#94dc7b"/><stop offset="0.1708" stop-color="#92d97d"/><stop offset="0.175" stop-color="#8dd280"/><stop offset="0.1792" stop-color="#87ca82"/><stop offset="0.1833" stop-color="#83c585"/><stop offset="0.1875" stop-color="#83c586"/><stop offset="0.1917" stop-color="#85c886"/><stop offset="0.1958" stop-color="#87cc86"/><stop offset="0.2" stop-color="#87cd87"/><stop offset="0.2042" stop-color="#82c68b"/><stop offset="0.2083" stop-color="#7bbd91"/><stop offset="0.2125" stop-color="#75b496"/><stop offset="0.2167" stop-color="#71af9a"/><stop offset="0.2208" stop-color="#70af9d"/><stop offset="0.225" stop-color="#73b49f"/><stop offset="0.2292" stop-color="#76b8a1"/><stop offset="0.2333" stop-color="#79bca1"/><stop offset="0.2375" stop-color="#78bba1"/><stop offset="0.2417" stop-color="#75b6a2"/><stop offset="0.2458" stop-color="#71b0a3"/><stop offset="0.25" stop-color="#6faea4"/><stop offset="0.2542" stop-color="#72b1a3"/><stop offset="0.2583" stop-color="#77b8a1"/><stop offset="0.2625" stop-color="#7cbf9f"/><stop offset="0.2667" stop-color="#7fc39e"/><stop offset="0.2708" stop-color="#7ec19e"/><stop offset="0.275" stop-color="#78b9a1"/><stop offset="0.2792" stop-color="#72b0a4"/><stop offset="0.2833" stop-color="#6daba6"/><stop offset="0.2875" stop-color="#6daaa6"/><stop offset="0.2917" stop-color="#6faea7"/><stop offset="0.2958" stop-color="#71b1a6"/><stop offset="0.3" stop-color="#70b2a7"/><stop offset="0.3042" stop-color="#6fb0a7"/><stop offset="0.3083" stop-color="#6caaa8"/><stop offset="0.3125" stop-color="#68a5a9"/><stop offset="0.3167" stop-color="#68a4a9"/><stop offset="0.3208" stop-color="#6ba8a7"/><stop offset="0.325" stop-color="#71b0a5"/><stop offset="0.3292" stop-color="#78baa2"/><stop offset="0.3333" stop-color="#7dc0a0"/><stop offset="0.3375" stop-color="#7ec29f"/><stop offset="0.3417" stop-color="#7cbfa0"/><stop offset="0.3458" stop-color="#78baa2"/><stop offset="0.35" stop-color="#75b6a3"/><stop offset="0.3542" stop-color="#74b5a4"/><stop offset="0.3583" stop-color="#74b6a5"/><stop offset="0.3625" stop-color="#75b6a5"/><stop offset="0.3667" stop-color="#73b5a6"/><stop offset="0.3708" stop-color="#6fb0a8"/><stop offset="0.375" stop-color="#6aa8aa"/><stop offset="0.3792" stop-color="#67a2ac"/><stop offset="0.3833" stop-color="#67a2ab"/><stop offset="0.3875" stop-color="#67a4a8"/><stop offset="0.3917" stop-color="#6caba4"/><stop offset="0.3958" stop-color="#72b3a0"/><stop offset="0.4" stop-color="#77ba9c"/><stop offset="0.4042" stop-color="#7abe99"/><stop offset="0.4083" stop-color="#7bc097"/><stop offset="0.4125" stop-color="#7cc294"/><stop offset="0.4167" stop-color="#7ec492"/><stop offset="0.4208" stop-color="#80c78f"/><stop offset="0.425" stop-color="#81c88f"/><stop offset="0.4292" stop-color="#82c98e"/><stop offset="0.4333" stop-color="#82c98e"/><stop offset="0.4375" stop-color="#81c78e"/><stop offset="0.4417" stop-color="#7fc48e"/><stop offset="0.4458" stop-color="#7ec28e"/><stop offset="0.45" stop-color="#7ec28e"/><stop offset="0.4542" stop-color="#7fc38d"/><stop offset="0.4583" stop-color="#82c68c"/><stop offset="0.4625" stop-color="#83c88b"/><stop offset="0.4667" stop-color="#84ca8b"/><stop offset="0.4708" stop-color="#85ca8a"/><stop offset="0.475" stop-color="#84c98a"/><stop offset="0.4792" stop-color="#85c98a"/><stop offset="0.4833" stop-color="#84c88b"/><stop offset="0.4875" stop-color="#83c78d"/><stop offset="0.4917" stop-color="#81c58f"/><stop offset="0.4958" stop-color="#7fc391"/><stop offset="0.5" stop-color="#7dbf93"/><stop offset="0.5042" stop-color="#7abc96"/><stop offset="0.5083" stop-color="#78b998"/><stop offset="0.5125" stop-color="#77b89a"/><stop offset="0.5167" stop-color="#77b89b"/><stop offset="0.5208" stop-color="#78ba9c"/><stop offset="0.525" stop-color="#79bc9b"/><stop offset="0.5292" stop-color="#7abd99"/><stop offset="0.5333" stop-color="#7abd99"/><stop offset="0.5375" stop-color="#7abd98"/><stop offset="0.5417" stop-color="#7abd97"/><stop offset="0.5458" stop-color="#7bbe96"/><stop offset="0.55" stop-color="#7dc095"/><stop offset="0.5542" stop-color="#7fc393"/><stop offset="0.5583" stop-color="#80c492"/><stop offset="0.5625" stop-color="#80c591"/><stop offset="0.5667" stop-color="#80c491"/><stop offset="0.5708" stop-color="#7fc390"/><stop offset="0.575" stop-color="#80c38f"/><stop offset="0.5792" stop-color="#80c58e"/><stop offset="0.5833" stop-color="#81c58e"/><stop offset="0.5875" stop-color="#81c68f"/><stop offset="0.5917" stop-color="#81c590"/><stop offset="0.5958" stop-color="#7fc392"/><stop offset="0.6" stop-color="#7cbf93"/><stop offset="0.6042" stop-color="#79ba95"/><stop offset="0.6083" stop-color="#76b797"/><stop offset="0.6125" stop-color="#75b598"/><stop offset="0.6167" stop-color="#74b499"/><stop offset="0.6208" stop-color="#76b699"/><stop offset="0.625" stop-color="#79ba96"/><stop offset="0.6292" stop-color="#7dbf92"/><stop offset="0.6333" stop-color="#80c38f"/><stop offset="0.6375" stop-color="#84c78c"/><stop offset="0.6417" stop-color="#87cb89"/><stop offset="0.6458" stop-color="#8acf86"/><stop offset="0.65" stop-color="#8dd283"/><stop offset="0.6542" stop-color="#90d680"/><stop offset="0.6583" stop-color="#92d97d"/><stop offset="0.6625" stop-color="#92d97c"/><stop offset="0.6667" stop-color="#90d67d"/><stop offset="0.6708" stop-color="#8dd27e"/><stop offset="0.675" stop-color="#89cd80"/><stop offset="0.6792" stop-color="#86c882"/><stop offset="0.6833" stop-color="#83c483"/><stop offset="0.6875" stop-color="#81c284"/><stop offset="0.6917" stop-color="#81c284"/><stop offset="0.6958" stop-color="#83c584"/><stop offset="0.7" stop-color="#85c884"/><stop offset="0.7042" stop-color="#86ca84"/><stop offset="0.7083" stop-color="#86cb84"/><stop offset="0.7125" stop-color="#84c888"/><stop offset="0.7167" stop-color="#81c28e"/><stop offset="0.7208" stop-color="#7dbe94"/><stop offset="0.725" stop-color="#7bbb9a"/><stop offset="0.7292" stop-color="#7ab99f"/><stop offset="0.7333" stop-color="#78b6a5"/><stop offset="0.7375" stop-color="#75b2ab"/><stop offset="0.7417" stop-color="#72adaf"/><stop offset="0.7458" stop-color="#6ea9b0"/><stop offset="0.75" stop-color="#6ba4b2"/><stop offset="0.7542" stop-color="#69a2b3"/><stop offset="0.7583" stop-color="#69a2b3"/><stop offset="0.7625" stop-color="#6ba4b3"/><stop offset="0.7667" stop-color="#6ea8b2"/><stop offset="0.7708" stop-color="#70abb2"/><stop offset="0.775" stop-color="#70abb2"/><stop offset="0.7792" stop-color="#6da7b3"/><stop offset="0.7833" stop-color="#6aa2b5"/><stop offset="0.7875" stop-color="#67a2b6"/><stop offset="0.7917" stop-color="#67a2b7"/><stop offset="0.7958" stop-color="#68a2b6"/><stop offset="0.8" stop-color="#6ba3b6"/><stop offset="0.8042" stop-color="#6da7b5"/><stop offset="0.8083" stop-color="#6ea7b4"/><stop offset="0.8125" stop-color="#6ca4b5"/><stop offset="0.8167" stop-color="#69a2b5"/><stop offset="0.8208" stop-color="#67a2b6"/><stop offset="0.825" stop-color="#67a2b5"/><stop offset="0.8292" stop-color="#6ba3b4"/><stop offset="0.8333" stop-color="#6fa9b2"/><stop offset="0.8375" stop-color="#73afb0"/><stop offset="0.8417" stop-color="#74b0b0"/><stop offset="0.8458" stop-color="#72adb0"/><stop offset="0.85" stop-color="#6ea7b1"/><stop offset="0.8542" stop-color="#6ba3b2"/><stop offset="0.8583" stop-color="#6aa2b2"/><stop offset="0.8625" stop-color="#6da5b1"/><stop offset="0.8667" stop-color="#71abb0"/><stop offset="0.8708" stop-color="#74b0af"/><stop offset="0.875" stop-color="#75b1af"/><stop offset="0.8792" stop-color="#73afb0"/><stop offset="0.8833" stop-color="#6fa9b1"/><stop offset="0.8875" stop-color="#6ba4b2"/><stop offset="0.8917" stop-color="#6aa3b3"/><stop offset="0.8958" stop-color="#6ba5b3"/><stop offset="0.9" stop-color="#6ea9b2"/><stop offset="0.9042" stop-color="#70abb2"/><stop offset="0.9083" stop-color="#6faab2"/><stop offset="0.9125" stop-color="#6aa4b4"/><stop offset="0.9167" stop-color="#67a2b6"/><stop offset="0.9208" stop-color="#67a2b7"/><stop offset="0.925" stop-color="#67a2b7"/><stop offset="0.9292" stop-color="#67a2b6"/><stop offset="0.9333" stop-color="#68a2b4"/><stop offset="0.9375" stop-color="#6da9b2"/><stop offset="0.9417" stop-color="#70adb0"/><stop offset="0.9458" stop-color="#71adb0"/><stop offset="0.95" stop-color="#70acb0"/><stop offset="0.9542" stop-color="#6fabb0"/><stop offset="0.9583" stop-color="#71adaf"/><stop offset="0.9625" stop-color="#73b1ae"/><stop offset="0.9667" stop-color="#76b5ad"/><stop offset="0.9708" stop-color="#78b6ac"/><stop offset="0.975" stop-color="#76b4ac"/><stop offset="0.9792" stop-color="#72aead"/><stop offset="0.9833" stop-color="#6da7af"/><stop offset="0.9875" stop-color="#6aa2b0"/><stop offset="0.9917" stop-color="#69a2b0"/><stop offset="0.9958" stop-color="#6ba4af"/><stop offset="1.0" stop-color="#6ea9ad"/></linearGradient><linearGradient id="gb0" gradientUnits="userSpaceOnUse" x1="346.60" y1="329.40" x2="391.80" y2="548.06"><stop offset="0.0" stop-color="#7fc190"/><stop offset="0.0042" stop-color="#7dbd90"/><stop offset="0.0083" stop-color="#7dbd90"/><stop offset="0.0125" stop-color="#7fc18f"/><stop offset="0.0167" stop-color="#84c88e"/><stop offset="0.0208" stop-color="#88cd8c"/><stop offset="0.025" stop-color="#8ad08c"/><stop offset="0.0292" stop-color="#8acf8c"/><stop offset="0.0333" stop-color="#88cd8c"/><stop offset="0.0375" stop-color="#87cb8d"/><stop offset="0.0417" stop-color="#87cc8d"/><stop offset="0.0458" stop-color="#89cf8c"/><stop offset="0.05" stop-color="#8cd28b"/><stop offset="0.0542" stop-color="#8dd38b"/><stop offset="0.0583" stop-color="#8cd18b"/><stop offset="0.0625" stop-color="#89cd8c"/><stop offset="0.0667" stop-color="#85c98d"/><stop offset="0.0708" stop-color="#84c68e"/><stop offset="0.075" stop-color="#84c68e"/><stop offset="0.0792" stop-color="#85c78d"/><stop offset="0.0833" stop-color="#84c68f"/><stop offset="0.0875" stop-color="#81c491"/><stop offset="0.0917" stop-color="#7fc094"/><stop offset="0.0958" stop-color="#7cbd97"/><stop offset="0.1" stop-color="#7abb99"/><stop offset="0.1042" stop-color="#7abb9b"/><stop offset="0.1083" stop-color="#79bb9d"/><stop offset="0.1125" stop-color="#78ba9f"/><stop offset="0.1167" stop-color="#75b6a1"/><stop offset="0.1208" stop-color="#73b3a4"/><stop offset="0.125" stop-color="#73b3a3"/><stop offset="0.1292" stop-color="#74b4a2"/><stop offset="0.1333" stop-color="#77b8a0"/><stop offset="0.1375" stop-color="#7abc9e"/><stop offset="0.1417" stop-color="#7cbe9d"/><stop offset="0.1458" stop-color="#7cbd9c"/><stop offset="0.15" stop-color="#7aba9c"/><stop offset="0.1542" stop-color="#78b69c"/><stop offset="0.1583" stop-color="#77b69c"/><stop offset="0.1625" stop-color="#78b79c"/><stop offset="0.1667" stop-color="#7aba9c"/><stop offset="0.1708" stop-color="#7bbc9d"/><stop offset="0.175" stop-color="#7abc9e"/><stop offset="0.1792" stop-color="#77b8a0"/><stop offset="0.1833" stop-color="#73b2a2"/><stop offset="0.1875" stop-color="#6faea5"/><stop offset="0.1917" stop-color="#6eaca6"/><stop offset="0.1958" stop-color="#6eaea7"/><stop offset="0.2" stop-color="#70b0a7"/><stop offset="0.2042" stop-color="#73b4a5"/><stop offset="0.2083" stop-color="#74b5a3"/><stop offset="0.2125" stop-color="#73b4a2"/><stop offset="0.2167" stop-color="#72b2a1"/><stop offset="0.2208" stop-color="#72b1a0"/><stop offset="0.225" stop-color="#73b39e"/><stop offset="0.2292" stop-color="#76b69c"/><stop offset="0.2333" stop-color="#79b99a"/><stop offset="0.2375" stop-color="#7abb98"/><stop offset="0.2417" stop-color="#7bbd96"/><stop offset="0.2458" stop-color="#7dbe94"/><stop offset="0.25" stop-color="#7fc192"/><stop offset="0.2542" stop-color="#81c393"/><stop offset="0.2583" stop-color="#82c593"/><stop offset="0.2625" stop-color="#82c694"/><stop offset="0.2667" stop-color="#81c496"/><stop offset="0.2708" stop-color="#7ec198"/><stop offset="0.275" stop-color="#7cbe99"/><stop offset="0.2792" stop-color="#7abc9b"/><stop offset="0.2833" stop-color="#7abc9c"/><stop offset="0.2875" stop-color="#7abc9d"/><stop offset="0.2917" stop-color="#79ba9e"/><stop offset="0.2958" stop-color="#75b5a1"/><stop offset="0.3" stop-color="#70aea3"/><stop offset="0.3042" stop-color="#6ba8a5"/><stop offset="0.3083" stop-color="#69a5a6"/><stop offset="0.3125" stop-color="#6aa6a6"/><stop offset="0.3167" stop-color="#6daba6"/><stop offset="0.3208" stop-color="#70b0a5"/><stop offset="0.325" stop-color="#72b3a5"/><stop offset="0.3292" stop-color="#71b2a5"/><stop offset="0.3333" stop-color="#70b0a6"/><stop offset="0.3375" stop-color="#6eaea7"/><stop offset="0.3417" stop-color="#6eaea7"/><stop offset="0.3458" stop-color="#6fb0a7"/><stop offset="0.35" stop-color="#71b3a7"/><stop offset="0.3542" stop-color="#72b5a7"/><stop offset="0.3583" stop-color="#70b3a8"/><stop offset="0.3625" stop-color="#6eafa9"/><stop offset="0.3667" stop-color="#6baba9"/><stop offset="0.3708" stop-color="#6aa9a9"/><stop offset="0.375" stop-color="#6aa9a9"/><stop offset="0.3792" stop-color="#6baaa8"/><stop offset="0.3833" stop-color="#6dada7"/><stop offset="0.3875" stop-color="#6eaea6"/><stop offset="0.3917" stop-color="#6eaea5"/><stop offset="0.3958" stop-color="#6fafa5"/><stop offset="0.4" stop-color="#71b1a4"/><stop offset="0.4042" stop-color="#73b5a2"/><stop offset="0.4083" stop-color="#76b9a1"/><stop offset="0.4125" stop-color="#78bba0"/><stop offset="0.4167" stop-color="#78bba0"/><stop offset="0.4208" stop-color="#76b99f"/><stop offset="0.425" stop-color="#76b79e"/><stop offset="0.4292" stop-color="#76b89c"/><stop offset="0.4333" stop-color="#78bb9a"/><stop offset="0.4375" stop-color="#7bbf97"/><stop offset="0.4417" stop-color="#7dc294"/><stop offset="0.4458" stop-color="#7ec292"/><stop offset="0.45" stop-color="#7dc091"/><stop offset="0.4542" stop-color="#7bbe90"/><stop offset="0.4583" stop-color="#7cbf8e"/><stop offset="0.4625" stop-color="#7fc38b"/><stop offset="0.4667" stop-color="#84ca87"/><stop offset="0.4708" stop-color="#89d184"/><stop offset="0.475" stop-color="#8bd483"/><stop offset="0.4792" stop-color="#8bd383"/><stop offset="0.4833" stop-color="#89d084"/><stop offset="0.4875" stop-color="#86cd84"/><stop offset="0.4917" stop-color="#85cb84"/><stop offset="0.4958" stop-color="#86cc84"/><stop offset="0.5" stop-color="#88cf83"/><stop offset="0.5042" stop-color="#8ad182"/><stop offset="0.5083" stop-color="#89d082"/><stop offset="0.5125" stop-color="#88cd82"/><stop offset="0.5167" stop-color="#86ca82"/><stop offset="0.5208" stop-color="#84c883"/><stop offset="0.525" stop-color="#85c982"/><stop offset="0.5292" stop-color="#86cb81"/><stop offset="0.5333" stop-color="#87cc82"/><stop offset="0.5375" stop-color="#86cb83"/><stop offset="0.5417" stop-color="#85ca85"/><stop offset="0.5458" stop-color="#84c886"/><stop offset="0.55" stop-color="#83c888"/><stop offset="0.5542" stop-color="#84c989"/><stop offset="0.5583" stop-color="#85cb89"/><stop offset="0.5625" stop-color="#85cb8a"/><stop offset="0.5667" stop-color="#84ca8c"/><stop offset="0.5708" stop-color="#81c68e"/><stop offset="0.575" stop-color="#7ec390"/><stop offset="0.5792" stop-color="#7dc191"/><stop offset="0.5833" stop-color="#7ec292"/><stop offset="0.5875" stop-color="#7fc493"/><stop offset="0.5917" stop-color="#7fc594"/><stop offset="0.5958" stop-color="#7dc295"/><stop offset="0.6" stop-color="#79bd97"/><stop offset="0.6042" stop-color="#74b69a"/><stop offset="0.6083" stop-color="#71b19c"/><stop offset="0.6125" stop-color="#70b09d"/><stop offset="0.6167" stop-color="#72b29e"/><stop offset="0.6208" stop-color="#74b69e"/><stop offset="0.625" stop-color="#75b89e"/><stop offset="0.6292" stop-color="#75b7a0"/><stop offset="0.6333" stop-color="#72b3a2"/><stop offset="0.6375" stop-color="#70afa4"/><stop offset="0.6417" stop-color="#6faea6"/><stop offset="0.6458" stop-color="#70afa7"/><stop offset="0.65" stop-color="#72b2a7"/><stop offset="0.6542" stop-color="#74b4a8"/><stop offset="0.6583" stop-color="#74b3aa"/><stop offset="0.6625" stop-color="#71b0ac"/><stop offset="0.6667" stop-color="#6eabae"/><stop offset="0.6708" stop-color="#6ba6b1"/><stop offset="0.675" stop-color="#69a3b3"/><stop offset="0.6792" stop-color="#69a2b4"/><stop offset="0.6833" stop-color="#69a2b5"/><stop offset="0.6875" stop-color="#69a2b5"/><stop offset="0.6917" stop-color="#68a2b5"/><stop offset="0.6958" stop-color="#67a2b6"/><stop offset="0.7" stop-color="#68a2b6"/><stop offset="0.7042" stop-color="#6aa4b5"/><stop offset="0.7083" stop-color="#6ca7b5"/><stop offset="0.7125" stop-color="#6ea9b4"/><stop offset="0.7167" stop-color="#6da8b5"/><stop offset="0.7208" stop-color="#6ba5b5"/><stop offset="0.725" stop-color="#69a2b6"/><stop offset="0.7292" stop-color="#67a2b7"/><stop offset="0.7333" stop-color="#67a2b7"/><stop offset="0.7375" stop-color="#68a2b7"/><stop offset="0.7417" stop-color="#69a2b7"/><stop offset="0.7458" stop-color="#67a2b8"/><stop offset="0.75" stop-color="#67a2b8"/><stop offset="0.7542" stop-color="#67a2b8"/><stop offset="0.7583" stop-color="#67a2b8"/><stop offset="0.7625" stop-color="#67a2b7"/><stop offset="0.7667" stop-color="#67a2b5"/><stop offset="0.7708" stop-color="#6da8b2"/><stop offset="0.775" stop-color="#71afaf"/><stop offset="0.7792" stop-color="#73b2ae"/><stop offset="0.7833" stop-color="#73b2ad"/><stop offset="0.7875" stop-color="#72b0ac"/><stop offset="0.7917" stop-color="#71b0ab"/><stop offset="0.7958" stop-color="#72b1aa"/><stop offset="0.8" stop-color="#74b4a9"/><stop offset="0.8042" stop-color="#75b6a8"/><stop offset="0.8083" stop-color="#75b5a7"/><stop offset="0.8125" stop-color="#72b2a7"/><stop offset="0.8167" stop-color="#70aea8"/><stop offset="0.8208" stop-color="#6eaba8"/><stop offset="0.825" stop-color="#6daba7"/><stop offset="0.8292" stop-color="#6faca6"/><stop offset="0.8333" stop-color="#71afa5"/><stop offset="0.8375" stop-color="#72b1a3"/><stop offset="0.8417" stop-color="#73b3a3"/><stop offset="0.8458" stop-color="#74b4a2"/><stop offset="0.85" stop-color="#75b6a0"/><stop offset="0.8542" stop-color="#78ba9f"/><stop offset="0.8583" stop-color="#7bbe9d"/><stop offset="0.8625" stop-color="#7cc09c"/><stop offset="0.8667" stop-color="#7cc09c"/><stop offset="0.8708" stop-color="#7abd9c"/><stop offset="0.875" stop-color="#78ba9d"/><stop offset="0.8792" stop-color="#77b99d"/><stop offset="0.8833" stop-color="#78bb9c"/><stop offset="0.8875" stop-color="#7bbe9b"/><stop offset="0.8917" stop-color="#7dc29a"/><stop offset="0.8958" stop-color="#7ec399"/><stop offset="0.9" stop-color="#7cc099"/><stop offset="0.9042" stop-color="#7abd9a"/><stop offset="0.9083" stop-color="#78ba9a"/><stop offset="0.9125" stop-color="#78bb9a"/><stop offset="0.9167" stop-color="#7bbe99"/><stop offset="0.9208" stop-color="#7ec397"/><stop offset="0.925" stop-color="#80c696"/><stop offset="0.9292" stop-color="#80c697"/><stop offset="0.9333" stop-color="#7ec297"/><stop offset="0.9375" stop-color="#7abe98"/><stop offset="0.9417" stop-color="#79bb99"/><stop offset="0.9458" stop-color="#79bb99"/><stop offset="0.95" stop-color="#7bbe98"/><stop offset="0.9542" stop-color="#7dc197"/><stop offset="0.9583" stop-color="#7ec397"/><stop offset="0.9625" stop-color="#7ec297"/><stop offset="0.9667" stop-color="#7cc097"/><stop offset="0.9708" stop-color="#7bbe97"/><stop offset="0.975" stop-color="#7bbf97"/><stop offset="0.9792" stop-color="#7dc097"/><stop offset="0.9833" stop-color="#7ec296"/><stop offset="0.9875" stop-color="#7ec296"/><stop offset="0.9917" stop-color="#7ec196"/><stop offset="0.9958" stop-color="#7dc096"/><stop offset="1.0" stop-color="#7dc196"/></linearGradient><linearGradient id="gm0" gradientUnits="userSpaceOnUse" x1="346.60" y1="329.40" x2="392.10" y2="110.05"><stop offset="0" stop-color="#fff" stop-opacity="0"/><stop offset="1" stop-color="#fff" stop-opacity="1"/></linearGradient><mask id="mk0" maskUnits="userSpaceOnUse" x="300" y="200" width="1200" height="400"><polygon points="346.6,329.4 899,215.2 946.7,225 1000,237.5 1046.7,248.3 1100,257.5 1156.7,268.3 1200,278 1246.7,288.3 1290,298.5 1330,308.3 1390,318.5 1449.4,328.7 897.1,443.6 875,441 820,428.5 744.5,413.3 728.9,407.1 682.3,400.9 640,391.5 588.9,380.7 530,369.5 473.8,358.9 458.2,351.1 440,349 405.3,343.3" fill="url(#gm0)"/></mask></defs>
<polygon points="346.4,458.0 899.0,344.2 1449.4,457.2 897.1,572.0" fill="url(#ga5)"/>
<polygon points="346.4,458.0 899.0,344.2 1449.4,457.2 897.1,572.0" fill="url(#gb5)" mask="url(#mk5)"/>
<path d="M584.0 409.1 L1134.7 523.1" stroke="#244438" stroke-opacity="0.5" stroke-width="1.1"/>
<path d="M639.3 397.7 L1190.0 511.7" stroke="#f4f8f4" stroke-width="1.5"/>
<path d="M346.4 458.0 L897.1 572.0" fill="none" stroke="#d860f4" stroke-width="1.6" stroke-linejoin="round"/>
<path d="M899.0 344.2 L1449.4 457.2" fill="none" stroke="#f2d212" stroke-width="1.8" stroke-linejoin="round"/>
<polygon points="348.2,435.3 899.0,318.4 1449.4,431.8 897.1,548.1" fill="url(#ga4)"/>
<polygon points="348.2,435.3 899.0,318.4 1449.4,431.8 897.1,548.1" fill="url(#gb4)" mask="url(#mk4)"/>
<path d="M585.0 385.0 L1133.9 497.8" stroke="#244438" stroke-opacity="0.5" stroke-width="1.1"/>
<path d="M640.1 373.3 L1189.0 486.1" stroke="#f4f8f4" stroke-width="1.5"/>
<path d="M348.2 435.3 L897.1 548.1" fill="none" stroke="#d860f4" stroke-width="1.6" stroke-linejoin="round"/>
<path d="M899.0 318.4 L1449.4 431.8" fill="none" stroke="#f2d212" stroke-width="1.8" stroke-linejoin="round"/>
<polygon points="348.2,407.9 899.0,292.6 1449.4,406.4 897.1,521.3" fill="url(#ga3)"/>
<polygon points="348.2,407.9 899.0,292.6 1449.4,406.4 897.1,521.3" fill="url(#gb3)" mask="url(#mk3)"/>
<path d="M585.0 358.3 L1133.9 471.7" stroke="#244438" stroke-opacity="0.5" stroke-width="1.1"/>
<path d="M640.1 346.8 L1189.0 460.2" stroke="#f4f8f4" stroke-width="1.5"/>
<path d="M348.2 407.9 L897.1 521.3" fill="none" stroke="#d860f4" stroke-width="1.6" stroke-linejoin="round"/>
<path d="M899.0 292.6 L1449.4 406.4" fill="none" stroke="#f2d212" stroke-width="1.8" stroke-linejoin="round"/>
<polygon points="348.2,382.5 899.0,266.8 1449.4,381.7 897.1,495.5" fill="url(#ga2)"/>
<polygon points="348.2,382.5 899.0,266.8 1449.4,381.7 897.1,495.5" fill="url(#gb2)" mask="url(#mk2)"/>
<path d="M585.0 332.7 L1133.9 445.7" stroke="#244438" stroke-opacity="0.5" stroke-width="1.1"/>
<path d="M640.1 321.2 L1189.0 434.2" stroke="#f4f8f4" stroke-width="1.5"/>
<path d="M348.2 382.5 L897.1 495.5" fill="none" stroke="#d860f4" stroke-width="1.6" stroke-linejoin="round"/>
<path d="M899.0 266.8 L1449.4 381.7" fill="none" stroke="#f2d212" stroke-width="1.8" stroke-linejoin="round"/>
<polygon points="346.6,357.1 899.0,241.0 1449.4,355.6 897.1,472.0" fill="url(#ga1)"/>
<polygon points="346.6,357.1 899.0,241.0 1449.4,355.6 897.1,472.0" fill="url(#gb1)" mask="url(#mk1)"/>
<path d="M584.1 307.2 L1134.6 422.1" stroke="#244438" stroke-opacity="0.5" stroke-width="1.1"/>
<path d="M639.4 295.6 L1189.9 410.5" stroke="#f4f8f4" stroke-width="1.5"/>
<path d="M346.6 357.1 L897.1 472.0" fill="none" stroke="#d860f4" stroke-width="1.6" stroke-linejoin="round"/>
<path d="M899.0 241.0 L1449.4 355.6" fill="none" stroke="#f2d212" stroke-width="1.8" stroke-linejoin="round"/>
<polygon points="346.6,329.4 899,215.2 946.7,225 1000,237.5 1046.7,248.3 1100,257.5 1156.7,268.3 1200,278 1246.7,288.3 1290,298.5 1330,308.3 1390,318.5 1449.4,328.7 897.1,443.6 875,441 820,428.5 744.5,413.3 728.9,407.1 682.3,400.9 640,391.5 588.9,380.7 530,369.5 473.8,358.9 458.2,351.1 440,349 405.3,343.3" fill="url(#ga0)"/>
<polygon points="346.6,329.4 899,215.2 946.7,225 1000,237.5 1046.7,248.3 1100,257.5 1156.7,268.3 1200,278 1246.7,288.3 1290,298.5 1330,308.3 1390,318.5 1449.4,328.7 897.1,443.6 875,441 820,428.5 744.5,413.3 728.9,407.1 682.3,400.9 640,391.5 588.9,380.7 530,369.5 473.8,358.9 458.2,351.1 440,349 405.3,343.3" fill="url(#gb0)" mask="url(#mk0)"/>
<path d="M583 280 L630 289.5 L680 300 L700 306.5 L780 324.5 L850 338.5 L930 355 L1030 375.5 L1127 395" fill="none" stroke="#244438" stroke-opacity="0.5" stroke-width="1.1"/>
<path d="M640 268.3 L668 274 L696.7 281 L740 288.6 L790 300 L830 310 L880 319 L930 328.3 L975 338 L1013.3 346.7 L1050 356 L1080 363.3 L1130 372 L1190 382.7" fill="none" stroke="#f4f8f4" stroke-width="1.5" stroke-linejoin="round"/>
<path d="M346.6 329.4 L405.3 343.3 L440 349 L458.2 351.1 L473.8 358.9 L530 369.5 L588.9 380.7 L640 391.5 L682.3 400.9 L728.9 407.1 L744.5 413.3 L820 428.5 L875 441 L897.1 443.6" fill="none" stroke="#d860f4" stroke-width="1.6" stroke-linejoin="round"/>
<path d="M899 215.2 L946.7 225 L1000 237.5 L1046.7 248.3 L1100 257.5 L1156.7 268.3 L1200 278 L1246.7 288.3 L1290 298.5 L1330 308.3 L1390 318.5 L1449.4 328.7" fill="none" stroke="#f2d212" stroke-width="1.8" stroke-linejoin="round"/>
<rect x="8.70" y="666.50" width="1781.30" height="37.10" fill="#18191b" rx="4"/>
<rect x="17.10" y="675.60" width="102.30" height="21.40" fill="#262729" rx="3.5"/>
<text x="22.30" y="692.90" font-size="19" font-weight="bold" fill="#c4c4c6" stroke="#c4c4c6" stroke-width="0.35" text-anchor="start" textLength="85.60" lengthAdjust="spacingAndGlyphs" >ENVELOPE</text>
<rect x="126.20" y="675.60" width="102.30" height="21.40" fill="#262729" rx="3.5"/>
<text x="131.40" y="692.90" font-size="19" font-weight="bold" fill="#c4c4c6" stroke="#c4c4c6" stroke-width="0.35" text-anchor="start" textLength="88.20" lengthAdjust="spacingAndGlyphs" >SPECTRUM</text>
<rect x="235.30" y="675.60" width="102.30" height="21.40" fill="#b6b6b8" rx="3.5"/>
<text x="240.50" y="692.90" font-size="19" font-weight="bold" fill="#262628" stroke="#262628" stroke-width="0.35" text-anchor="start" textLength="52.20" lengthAdjust="spacingAndGlyphs" >FILTER</text>
<text x="368.80" y="691.30" font-size="19" font-weight="bold" fill="#f2b622" stroke="#f2b622" stroke-width="0.35" text-anchor="start" textLength="123.70" lengthAdjust="spacingAndGlyphs" >New Wavetable</text>
<rect x="1460.00" y="671.80" width="216.30" height="26.20" fill="#242426" rx="4"/>
<path d="M1655 680 h13.8 l-6.9 8.8 z" fill="#c8c8ca"/>
<rect x="8.70" y="709.20" width="1781.30" height="43.60" fill="#232426" rx="4"/>
<rect x="23.30" y="717.00" width="27.00" height="26.00" fill="#141416" rx="3"/>
<rect x="25.60" y="719.20" width="22.60" height="21.20" fill="#6a80b8" rx="1.5"/>
<path d="M151 715 v32" stroke="#404042" stroke-width="1.5"/>
<text x="162.20" y="738.90" font-size="19" font-weight="bold" fill="#808082" stroke="#808082" stroke-width="0.35" text-anchor="start" textLength="40.00" lengthAdjust="spacingAndGlyphs" >Shift</text>
<rect x="208.20" y="721.10" width="101.80" height="23.30" fill="#0c0c0e" rx="4"/>
<rect x="212.20" y="725.60" width="94.50" height="14.80" fill="#17181a" rx="1"/>
<rect x="257.10" y="726.00" width="4.00" height="14.00" fill="#8fc0f5"/>
<rect x="317.30" y="719.60" width="76.70" height="26.60" fill="#151517" rx="4"/>
<text x="337.80" y="739.60" font-size="18.5" font-weight="bold" fill="#cacacc" stroke="#cacacc" stroke-width="0.35" text-anchor="start" textLength="25.50" lengthAdjust="spacingAndGlyphs" >0.0</text>
<text x="410.00" y="738.90" font-size="19" font-weight="bold" fill="#808082" stroke="#808082" stroke-width="0.35" text-anchor="start" textLength="43.00" lengthAdjust="spacingAndGlyphs" >Scale</text>
<rect x="457.00" y="721.10" width="102.30" height="23.30" fill="#0c0c0e" rx="4"/>
<rect x="461.80" y="725.60" width="93.20" height="14.80" fill="#17181a" rx="1"/>
<rect x="508.00" y="726.20" width="24.00" height="13.80" fill="#5b7fcc"/>
<rect x="528.70" y="726.20" width="3.30" height="13.80" fill="#93c2f6"/>
<rect x="566.30" y="719.60" width="76.70" height="26.60" fill="#151517" rx="4"/>
<text x="585.00" y="739.60" font-size="18.5" font-weight="bold" fill="#cacacc" stroke="#cacacc" stroke-width="0.35" text-anchor="start" textLength="30.00" lengthAdjust="spacingAndGlyphs" >100</text>
<rect x="1460.00" y="718.00" width="216.30" height="26.50" fill="#2a2a2c" rx="4"/>
<path d="M1655 726.3 h13.8 l-6.9 8.8 z" fill="#c8c8ca"/>
<text x="36.00" y="778.30" font-size="18.5" font-weight="bold" fill="#8a8a8c" stroke="#8a8a8c" stroke-width="0.35" text-anchor="start" textLength="44.00" lengthAdjust="spacingAndGlyphs" >Node</text>
<rect x="9.00" y="786.00" width="101.70" height="26.70" fill="#232325" rx="4"/>
<text x="38.30" y="806.00" font-size="18" font-weight="bold" fill="#d0d0d2" stroke="#d0d0d2" stroke-width="0.35" text-anchor="start" textLength="8.40" lengthAdjust="spacingAndGlyphs" >1</text>
<path d="M88.3 792.7 v15.6 l-10 -7.8 z" fill="#9a9a9c"/>
<path d="M95.7 792.7 v15.6 l10 -7.8 z" fill="#9a9a9c"/>
<text x="14.00" y="845.00" font-size="18.5" font-weight="bold" fill="#242426" stroke="#242426" stroke-width="0.35" text-anchor="start" textLength="86.00" lengthAdjust="spacingAndGlyphs" >Frequency</text>
<text x="30.70" y="872.70" font-size="18.5" font-weight="bold" fill="#242426" stroke="#242426" stroke-width="0.35" text-anchor="start" textLength="48.30" lengthAdjust="spacingAndGlyphs" >10 Hz</text>
<text x="39.30" y="906.00" font-size="18.5" font-weight="bold" fill="#8a8a8c" stroke="#8a8a8c" stroke-width="0.35" text-anchor="start" textLength="37.40" lengthAdjust="spacingAndGlyphs" >Gain</text>
<rect x="9.00" y="914.00" width="101.70" height="26.70" fill="#151517" rx="4"/>
<text x="18.30" y="934.00" font-size="18" font-weight="bold" fill="#d0d0d2" stroke="#d0d0d2" stroke-width="0.35" text-anchor="start" textLength="72.40" lengthAdjust="spacingAndGlyphs" >-12.0 dB</text>
<path d="M135 764.5 H1757" stroke="#1a1a1c" stroke-width="1.3"/>
<path d="M135 817.6 H1757" stroke="#202022" stroke-width="1.6"/>
<path d="M135 844.3 H1757" stroke="#202022" stroke-width="1.6"/>
<path d="M135 871.0 H1757" stroke="#202022" stroke-width="1.6"/>
<path d="M135 897.7 H1757" stroke="#202022" stroke-width="1.6"/>
<path d="M135 924.4 H1757" stroke="#202022" stroke-width="1.6"/>
<path d="M281.1 763 V925" stroke="#262628" stroke-width="1.4"/>
<path d="M474.1 763 V925" stroke="#262628" stroke-width="1.4"/>
<path d="M620.2 763 V925" stroke="#262628" stroke-width="1.4"/>
<path d="M766.3 763 V925" stroke="#262628" stroke-width="1.4"/>
<path d="M959.3 763 V925" stroke="#262628" stroke-width="1.4"/>
<path d="M1105.4 763 V925" stroke="#262628" stroke-width="1.4"/>
<path d="M1251.5 763 V925" stroke="#262628" stroke-width="1.4"/>
<path d="M1444.5 763 V925" stroke="#262628" stroke-width="1.4"/>
<path d="M1590.6 763 V925" stroke="#262628" stroke-width="1.4"/>
<path d="M281.1 946.5 V950" stroke="#6a6a6c" stroke-width="1.2"/>
<path d="M474.1 946.5 V950" stroke="#6a6a6c" stroke-width="1.2"/>
<path d="M620.2 946.5 V950" stroke="#6a6a6c" stroke-width="1.2"/>
<path d="M766.3 946.5 V950" stroke="#6a6a6c" stroke-width="1.2"/>
<path d="M959.3 946.5 V950" stroke="#6a6a6c" stroke-width="1.2"/>
<path d="M1105.4 946.5 V950" stroke="#6a6a6c" stroke-width="1.2"/>
<path d="M1251.5 946.5 V950" stroke="#6a6a6c" stroke-width="1.2"/>
<path d="M1444.5 946.5 V950" stroke="#6a6a6c" stroke-width="1.2"/>
<path d="M1590.6 946.5 V950" stroke="#6a6a6c" stroke-width="1.2"/>
<path d="M1736.7 946.5 V950" stroke="#6a6a6c" stroke-width="1.2"/>
<defs><linearGradient id="spg" x1="0" y1="888" x2="0" y2="950" gradientUnits="userSpaceOnUse"><stop offset="0" stop-color="#1a2332"/><stop offset="0.55" stop-color="#141a25"/><stop offset="1" stop-color="#0c0e12"/></linearGradient></defs>
<path d="M135 950 L195 950 C225 932 250 908 280 904 C330 897 380 890 430 890 C450 890 460 894 473 898 C500 908 520 908 545 918 C570 926 580 926 597 934 C610 940 628 942 633 936 C643 925 650 899 658.3 899 C668 899 678 950 691.7 950 C702 950 710 908.3 719 908.3 C727 908.3 732 950 738.3 950 L751.7 950 C758 950 762 930 766 930 C770 930 771 950 772.7 950 L798.3 950 C801 950 802 931.7 804 931.7 C806 931.7 807 950 810 950 L1757 950 Z" fill="url(#spg)"/>
<text x="258.86" y="942.70" font-size="16.5" font-weight="normal" fill="#8c8c8e" stroke="#8c8c8e" stroke-width="0.2" text-anchor="start" textLength="43.40" lengthAdjust="spacingAndGlyphs" >20 Hz</text>
<text x="451.94" y="942.70" font-size="16.5" font-weight="normal" fill="#8c8c8e" stroke="#8c8c8e" stroke-width="0.2" text-anchor="start" textLength="43.40" lengthAdjust="spacingAndGlyphs" >50 Hz</text>
<text x="593.35" y="942.70" font-size="16.5" font-weight="normal" fill="#8c8c8e" stroke="#8c8c8e" stroke-width="0.2" text-anchor="start" textLength="52.70" lengthAdjust="spacingAndGlyphs" >100 Hz</text>
<text x="739.41" y="942.70" font-size="16.5" font-weight="normal" fill="#8c8c8e" stroke="#8c8c8e" stroke-width="0.2" text-anchor="start" textLength="52.70" lengthAdjust="spacingAndGlyphs" >200 Hz</text>
<text x="932.49" y="942.70" font-size="16.5" font-weight="normal" fill="#8c8c8e" stroke="#8c8c8e" stroke-width="0.2" text-anchor="start" textLength="52.70" lengthAdjust="spacingAndGlyphs" >500 Hz</text>
<text x="1083.90" y="942.70" font-size="16.5" font-weight="normal" fill="#8c8c8e" stroke="#8c8c8e" stroke-width="0.2" text-anchor="start" textLength="42.00" lengthAdjust="spacingAndGlyphs" >1 kHz</text>
<text x="1229.46" y="942.70" font-size="16.5" font-weight="normal" fill="#8c8c8e" stroke="#8c8c8e" stroke-width="0.2" text-anchor="start" textLength="43.00" lengthAdjust="spacingAndGlyphs" >2 kHz</text>
<text x="1422.24" y="942.70" font-size="16.5" font-weight="normal" fill="#8c8c8e" stroke="#8c8c8e" stroke-width="0.2" text-anchor="start" textLength="43.60" lengthAdjust="spacingAndGlyphs" >5 kHz</text>
<text x="1564.50" y="942.70" font-size="16.5" font-weight="normal" fill="#8c8c8e" stroke="#8c8c8e" stroke-width="0.2" text-anchor="start" textLength="51.20" lengthAdjust="spacingAndGlyphs" >10 kHz</text>
<text x="1694.00" y="942.70" font-size="16.5" font-weight="normal" fill="#8c8c8e" stroke="#8c8c8e" stroke-width="0.2" text-anchor="start" textLength="52.40" lengthAdjust="spacingAndGlyphs" >20 kHz</text>
<path d="M135 950 L195 950 C225 932 250 908 280 904 C330 897 380 890 430 890 C450 890 460 894 473 898 C500 908 520 908 545 918 C570 926 580 926 597 934 C610 940 628 942 633 936 C643 925 650 899 658.3 899 C668 899 678 950 691.7 950 C702 950 710 908.3 719 908.3 C727 908.3 732 950 738.3 950 L751.7 950 C758 950 762 930 766 930 C770 930 771 950 772.7 950 L798.3 950 C801 950 802 931.7 804 931.7 C806 931.7 807 950 810 950 L1757 950" fill="none" stroke="#5a96d8" stroke-width="1.7" stroke-linejoin="round"/>
<text x="163.30" y="785.70" font-size="16.5" font-weight="normal" fill="#6f9edb" stroke="#6f9edb" stroke-width="0.2" text-anchor="start" textLength="35.00" lengthAdjust="spacingAndGlyphs" >0 dB</text>
<text x="1718.40" y="785.20" font-size="16.5" font-weight="normal" fill="#8c8c8e" stroke="#8c8c8e" stroke-width="0.2" text-anchor="start" textLength="35.00" lengthAdjust="spacingAndGlyphs" >0 dB</text>
<text x="148.30" y="812.60" font-size="16.5" font-weight="normal" fill="#6f9edb" stroke="#6f9edb" stroke-width="0.2" text-anchor="start" textLength="50.00" lengthAdjust="spacingAndGlyphs" >-20 dB</text>
<text x="1703.40" y="812.10" font-size="16.5" font-weight="normal" fill="#8c8c8e" stroke="#8c8c8e" stroke-width="0.2" text-anchor="start" textLength="50.00" lengthAdjust="spacingAndGlyphs" >-20 dB</text>
<text x="148.30" y="839.50" font-size="16.5" font-weight="normal" fill="#6f9edb" stroke="#6f9edb" stroke-width="0.2" text-anchor="start" textLength="50.00" lengthAdjust="spacingAndGlyphs" >-40 dB</text>
<text x="1703.40" y="839.00" font-size="16.5" font-weight="normal" fill="#8c8c8e" stroke="#8c8c8e" stroke-width="0.2" text-anchor="start" textLength="50.00" lengthAdjust="spacingAndGlyphs" >-40 dB</text>
<text x="148.30" y="866.40" font-size="16.5" font-weight="normal" fill="#6f9edb" stroke="#6f9edb" stroke-width="0.2" text-anchor="start" textLength="50.00" lengthAdjust="spacingAndGlyphs" >-60 dB</text>
<text x="1703.40" y="865.90" font-size="16.5" font-weight="normal" fill="#8c8c8e" stroke="#8c8c8e" stroke-width="0.2" text-anchor="start" textLength="50.00" lengthAdjust="spacingAndGlyphs" >-60 dB</text>
<text x="148.30" y="893.30" font-size="16.5" font-weight="normal" fill="#6f9edb" stroke="#6f9edb" stroke-width="0.2" text-anchor="start" textLength="50.00" lengthAdjust="spacingAndGlyphs" >-80 dB</text>
<text x="1703.40" y="892.80" font-size="16.5" font-weight="normal" fill="#8c8c8e" stroke="#8c8c8e" stroke-width="0.2" text-anchor="start" textLength="50.00" lengthAdjust="spacingAndGlyphs" >-80 dB</text>
<text x="138.30" y="920.20" font-size="16.5" font-weight="normal" fill="#6f9edb" stroke="#6f9edb" stroke-width="0.2" text-anchor="start" textLength="60.00" lengthAdjust="spacingAndGlyphs" >-100 dB</text>
<text x="1693.40" y="919.70" font-size="16.5" font-weight="normal" fill="#8c8c8e" stroke="#8c8c8e" stroke-width="0.2" text-anchor="start" textLength="60.00" lengthAdjust="spacingAndGlyphs" >-100 dB</text>
<path d="M135 790.9 H1757" stroke="#606062" stroke-width="1.6"/>
<path d="M135 807 L1004.3 807 C1030 807 1040 791 1066 791 C1090 791 1092 806.5 1113.5 806.5 C1132 806.5 1134 790.5 1151 790.5 C1175 790.5 1180 806.5 1209 806.5 C1265 806.5 1300 790.5 1355.5 790.5 C1410 790.5 1440 806.5 1494 806.5 L1757 806.5" fill="none" stroke="#dcdcde" stroke-width="3.2" stroke-linejoin="round"/>
<rect x="997.60" y="799.70" width="13.40" height="13.40" fill="#dededf"/>
<rect x="1059.30" y="784.30" width="13.40" height="13.40" fill="#dededf"/>
<rect x="1106.80" y="799.70" width="13.40" height="13.40" fill="#dededf"/>
<rect x="1144.50" y="784.00" width="13.40" height="13.40" fill="#dededf"/>
<rect x="1202.30" y="799.70" width="13.40" height="13.40" fill="#dededf"/>
<rect x="1348.80" y="784.00" width="13.40" height="13.40" fill="#dededf"/>
<rect x="1487.30" y="799.70" width="13.40" height="13.40" fill="#dededf"/>
<rect x="1749.30" y="799.70" width="13.40" height="13.40" fill="#dededf"/>
<rect x="127.70" y="799.30" width="14.00" height="13.40" fill="#ff80ff"/>
<rect x="1768.00" y="763.50" width="17.50" height="187.00" fill="#2c2c2e"/>
<rect x="1769.40" y="765.00" width="14.70" height="184.00" fill="#18181a"/>
<rect x="1770.60" y="766.30" width="12.30" height="181.50" fill="#424244"/>
<rect x="8.60" y="963.60" width="1781.40" height="43.10" fill="#232426" rx="4"/>
<rect x="281.00" y="971.30" width="120.00" height="27.00" fill="#2f2f31" rx="4"/>
<text x="288.70" y="991.10" font-size="18" font-weight="normal" fill="#cfcfd1" stroke="#cfcfd1" stroke-width="0.2" text-anchor="start" textLength="24.30" lengthAdjust="spacingAndGlyphs" >Off</text>
<path d="M377.2 982 h15 l-7.5 7.8 z" fill="#d8d8da"/>
<text x="420.40" y="990.70" font-size="19" font-weight="bold" fill="#8a8a8c" stroke="#8a8a8c" stroke-width="0.35" text-anchor="start" textLength="50.20" lengthAdjust="spacingAndGlyphs" >Phase</text>
<rect x="15.80" y="1020.00" width="74.40" height="73.50" fill="#3c3c3e"/>
<rect x="17.00" y="1021.20" width="72.00" height="71.10" fill="#0a0a0c"/>
<path d="M17.0 1026.2 H28.0 l2.2 -1.7 l2.2 1.7 H87.8" fill="none" stroke="#6c9de6" stroke-width="1.6"/>
<path d="M17.0 1038.2 H87.8" stroke="#6c9de6" stroke-width="1.6"/>
<path d="M17.0 1050.2 H87.8" stroke="#6c9de6" stroke-width="1.6"/>
<path d="M17.0 1062.2 H87.8" stroke="#6c9de6" stroke-width="1.6"/>
<path d="M17.0 1074.2 H87.8" stroke="#6c9de6" stroke-width="1.6"/>
<path d="M17.0 1086.2 H87.8" stroke="#6c9de6" stroke-width="1.6"/>
<rect x="90.20" y="1020.00" width="74.40" height="73.50" fill="#3c3c3e"/>
<rect x="91.40" y="1021.20" width="72.00" height="71.10" fill="#0a0a0c"/>
<path d="M91.4 1026.2 H162.2" stroke="#6c9de6" stroke-width="1.6"/>
<path d="M91.4 1038.2 H162.2" stroke="#6c9de6" stroke-width="1.6"/>
<path d="M91.4 1050.2 H162.2" stroke="#6c9de6" stroke-width="1.6"/>
<path d="M91.4 1062.2 H162.2" stroke="#6c9de6" stroke-width="1.6"/>
<path d="M91.4 1074.2 H162.2" stroke="#6c9de6" stroke-width="1.6"/>
<path d="M91.4 1086.2 H101.8 l2.2 -1.7 l2.2 1.7 H162.2" fill="none" stroke="#6c9de6" stroke-width="1.6"/>
<rect x="165.00" y="1020.00" width="75.40" height="73.50" fill="#e0a326"/>
<rect x="166.60" y="1021.60" width="72.20" height="70.30" fill="#1e2430"/>
<path d="M167.2 1026.2 H237.2" stroke="#6c9de6" stroke-width="1.6"/>
<path d="M167.2 1038.2 H237.2" stroke="#6c9de6" stroke-width="1.6"/>
<path d="M167.2 1050.2 H237.2" stroke="#6c9de6" stroke-width="1.6"/>
<path d="M167.2 1062.2 H237.2" stroke="#6c9de6" stroke-width="1.6"/>
<path d="M167.2 1074.2 H237.2" stroke="#6c9de6" stroke-width="1.6"/>
<path d="M167.2 1086.2 H237.2" stroke="#6c9de6" stroke-width="1.6"/>
<text x="74.80" y="1035.30" font-size="17" font-weight="bold" fill="#dededf" stroke="#dededf" stroke-width="0.35" text-anchor="start" textLength="9.30" lengthAdjust="spacingAndGlyphs" >1</text>
<text x="149.40" y="1035.30" font-size="17" font-weight="bold" fill="#dededf" stroke="#dededf" stroke-width="0.35" text-anchor="start" textLength="9.30" lengthAdjust="spacingAndGlyphs" >2</text>
<text x="224.70" y="1035.30" font-size="17" font-weight="bold" fill="#dededf" stroke="#dededf" stroke-width="0.35" text-anchor="start" textLength="9.30" lengthAdjust="spacingAndGlyphs" >3</text>
<rect x="25.80" y="1099.20" width="1752.90" height="18.80" fill="#1c1c1e" rx="3"/>
<path d="M38 1104.2 v10 l-6.5 -5 z" fill="#8a8a8c"/>
<path d="M1766.7 1104.2 v10 l6.6 -5 z" fill="#8a8a8c"/>
<path d="M77.9 720.2 H86.1 L93 727.3 V740.8 H77.9 Z" fill="none" stroke="#9a9a9c" stroke-width="1.6" stroke-linejoin="miter"/>
<path d="M86.1 720.2 V727.3 H93" fill="none" stroke="#9a9a9c" stroke-width="1.6"/>
<path d="M121.6 722.8 V720.8 Q121.6 719.6 123.0 719.6 H127.8 Q129.2 719.6 129.2 720.8 V722.8 Z" fill="#9a9a9c"/><rect x="116.2" y="722.7" width="18.3" height="1.7" fill="#9a9a9c"/><path d="M118.5 724.2 V737.4 Q118.5 740.5 121.6 740.5 H129.2 Q132.3 740.5 132.3 737.4 V724.2" fill="none" stroke="#9a9a9c" stroke-width="1.5"/><rect x="121.35" y="726.0" width="1.3" height="11.6" fill="#9a9a9c"/><rect x="124.75" y="726.0" width="1.3" height="11.6" fill="#9a9a9c"/><rect x="128.15" y="726.0" width="1.3" height="11.6" fill="#9a9a9c"/>
<path d="M1772.2 678.6 V676.6 Q1772.2 675.4 1773.6 675.4 H1778.4 Q1779.8 675.4 1779.8 676.6 V678.6 Z" fill="#9c9c9e"/><rect x="1766.8" y="678.5" width="18.3" height="1.7" fill="#9c9c9e"/><path d="M1769.1 680.0 V693.2 Q1769.1 696.3 1772.2 696.3 H1779.8 Q1782.9 696.3 1782.9 693.2 V680.0" fill="none" stroke="#9c9c9e" stroke-width="1.5"/><rect x="1771.95" y="681.8" width="1.3" height="11.6" fill="#9c9c9e"/><rect x="1775.35" y="681.8" width="1.3" height="11.6" fill="#9c9c9e"/><rect x="1778.75" y="681.8" width="1.3" height="11.6" fill="#9c9c9e"/>
<path d="M1772.2 724.6 V722.6 Q1772.2 721.4 1773.6 721.4 H1778.4 Q1779.8 721.4 1779.8 722.6 V724.6 Z" fill="#2a2a2c"/><rect x="1766.8" y="724.5" width="18.3" height="1.7" fill="#2a2a2c"/><path d="M1769.1 726.0 V739.2 Q1769.1 742.3 1772.2 742.3 H1779.8 Q1782.9 742.3 1782.9 739.2 V726.0" fill="none" stroke="#2a2a2c" stroke-width="1.5"/><rect x="1771.95" y="727.8" width="1.3" height="11.6" fill="#2a2a2c"/><rect x="1775.35" y="727.8" width="1.3" height="11.6" fill="#2a2a2c"/><rect x="1778.75" y="727.8" width="1.3" height="11.6" fill="#2a2a2c"/>
<path d="M1695.3 676.6 L1703.8 687.1 H1684.6 Z" fill="#9c9c9e"/><rect x="1689.9" y="688.8" width="9.1" height="5.1" fill="#9c9c9e"/><rect x="1714" y="678.2" width="8.4" height="5.1" fill="#9c9c9e"/><path d="M1708.6 684.9 H1727.8 L1717.9 695.4 Z" fill="#9c9c9e"/><rect x="1736.5" y="677.6" width="19.6" height="18.8" fill="none" stroke="#9c9c9e" stroke-width="1.3"/><rect x="1739.7" y="677.6" width="13.1" height="11.2" fill="#9c9c9e"/><rect x="1741.6" y="692.2" width="9.4" height="3" fill="none" stroke="#9c9c9e" stroke-width="1.2"/>
<path d="M1695.3 722.8 L1703.8 733.3 H1684.6 Z" fill="#9c9c9e"/><rect x="1689.9" y="735.0" width="9.1" height="5.1" fill="#9c9c9e"/><rect x="1714" y="724.4" width="8.4" height="5.1" fill="#9c9c9e"/><path d="M1708.6 731.1 H1727.8 L1717.9 741.6 Z" fill="#9c9c9e"/><rect x="1736.5" y="723.8" width="19.6" height="18.8" fill="none" stroke="#9c9c9e" stroke-width="1.3"/><rect x="1739.7" y="723.8" width="13.1" height="11.2" fill="#9c9c9e"/><rect x="1741.6" y="738.4" width="9.4" height="3" fill="none" stroke="#9c9c9e" stroke-width="1.2"/>
<rect x="14" y="973" width="23.5" height="24" rx="3.5" fill="#8c8c8e"/>
<rect x="19" y="984" width="13" height="2.8" fill="#232426"/><rect x="24.2" y="978.5" width="2.8" height="13.3" fill="#232426"/>
<rect x="51.2" y="973" width="23.5" height="24" rx="3.5" fill="#8c8c8e"/>
<rect x="56.2" y="984" width="13.5" height="2.8" fill="#232426"/>
<rect x="94" y="975" width="17" height="15" rx="2" fill="#a4a4a6"/>
<rect x="88" y="979" width="18.7" height="17" rx="2.5" fill="#232426"/>
<rect x="88.8" y="979.8" width="17.1" height="15.4" rx="2" fill="#a4a4a6"/>
<path d="M129.5 988.5 L130 997.5 L138 987.5 Z" fill="#6e6e70"/>
<path d="M135.5 988 L138 984.4 L139.5 985.6 L140.7 980.4 L142 984.8 L144 982 L145.4 985 L147 983.8 L148 985.5 L150.6 985.7 V986.9 L148 987.1 L147 988.8 L145.4 987.6 L144 990.6 L142 987.8 L140.7 992.2 L139.5 987.2 L138 989.4 Z" fill="#6e6e70"/>
<rect x="123.6" y="976" width="12.2" height="11.8" fill="#232426"/>
<rect x="124.4" y="976.8" width="10.6" height="10.2" fill="#a4a4a6"/>
<path d="M169 996.2 L169.2 988 L177.5 980.5 L178.6 983 L179.7 978 L181 983.2 L183.3 980.4 L184.6 983.6 L186 982.8 L187 984 L189.4 984.1 V985.2 L187 985.4 L186 986.8 L184.6 985.8 L183.3 989 L181 986 L179.7 990.6 L178.6 986 L176 988.5 Z" fill="#6e6e70"/>
<path d="M169 972.7 V978.4 H174.4 Z" fill="#6e6e70"/>
<path d="M159 979.2 H177 L168 990.2 Z" fill="#232426"/>
<path d="M160.4 980 H175.6 L168 988.8 Z" fill="#a8a8aa"/>
<path d="M196.9 968 V1001.6" stroke="#444446" stroke-width="1.5"/>
<path d="M239.5 968 V1001.6" stroke="#444446" stroke-width="1.5"/>
<path d="M411.8 968 V1001.6" stroke="#444446" stroke-width="1.5"/>
<path d="M631.9 968 V1001.6" stroke="#444446" stroke-width="1.5"/>
<rect x="206.2" y="973" width="23.8" height="24" rx="3.5" fill="#8c8c8e"/>
<rect x="211.5" y="978.5" width="13.4" height="13.4" fill="#232426"/>
<rect x="215" y="982.2" width="10" height="1.6" fill="#8c8c8e"/><rect x="211.4" y="987.2" width="10.6" height="1.6" fill="#8c8c8e"/>
<rect x="249.1" y="973" width="23.8" height="24" rx="3.5" fill="#8c8c8e"/>
<path d="M254 991.9 V978.5 H257.6 L264.4 987 V978.5 H267.8 V991.9 H264.4 L257.4 983.2 V991.9 Z" fill="#232426"/>
<rect x="480.7" y="975.2" width="3.5" height="13.6" fill="#8e8e90"/>
<rect x="487.7" y="989.2" width="3.2" height="7.4" fill="#8e8e90"/>
<rect x="494.3" y="980" width="3.5" height="8.2" fill="#8e8e90"/>
<rect x="501.3" y="988.8" width="3.6" height="6.8" fill="#8e8e90"/>
<path d="M520.6 984.3 V975 Q520.6 974 521.6 974 H526 Q527 974 527 975 V984.3 M520.6 979.6 H527" fill="none" stroke="#cf6e22" stroke-width="1.6"/>
<rect x="520" y="985.6" width="3.5" height="2.8" fill="#cf6e22"/>
<rect x="527" y="987.2" width="3.4" height="8.2" fill="#cf6e22"/>
<rect x="533.7" y="981.4" width="3.4" height="5.4" fill="#cf6e22"/>
<rect x="540.5" y="987.2" width="3.4" height="8.2" fill="#cf6e22"/>
<rect x="559.0" y="984.9" width="3.4" height="3.9" fill="#8e8e90"/>
<rect x="566.0" y="984.9" width="3.4" height="3.9" fill="#8e8e90"/>
<rect x="573.0" y="984.9" width="3.4" height="3.9" fill="#8e8e90"/>
<rect x="580.0" y="984.9" width="3.4" height="3.9" fill="#8e8e90"/>
<rect x="597" y="973" width="24" height="24" fill="#8c8c8e"/>
<rect x="600.2" y="977" width="3.6" height="16.8" fill="#232426"/><rect x="607.2" y="982.2" width="3.4" height="11.6" fill="#232426"/><rect x="614.2" y="989" width="3.1" height="4.8" fill="#232426"/>
<path d="M646.2 973.4 L656.5 984.5 L660 985 L657 988 L655.5 990 L654 987 L646.5 995.6 Z" fill="#68686a"/>
<path d="M643 985.3 H650.3 L656.5 976 L662.6 985.3 H670" fill="none" stroke="#c6c6c8" stroke-width="2.4" stroke-linejoin="miter"/>
</svg>
</body></html>
